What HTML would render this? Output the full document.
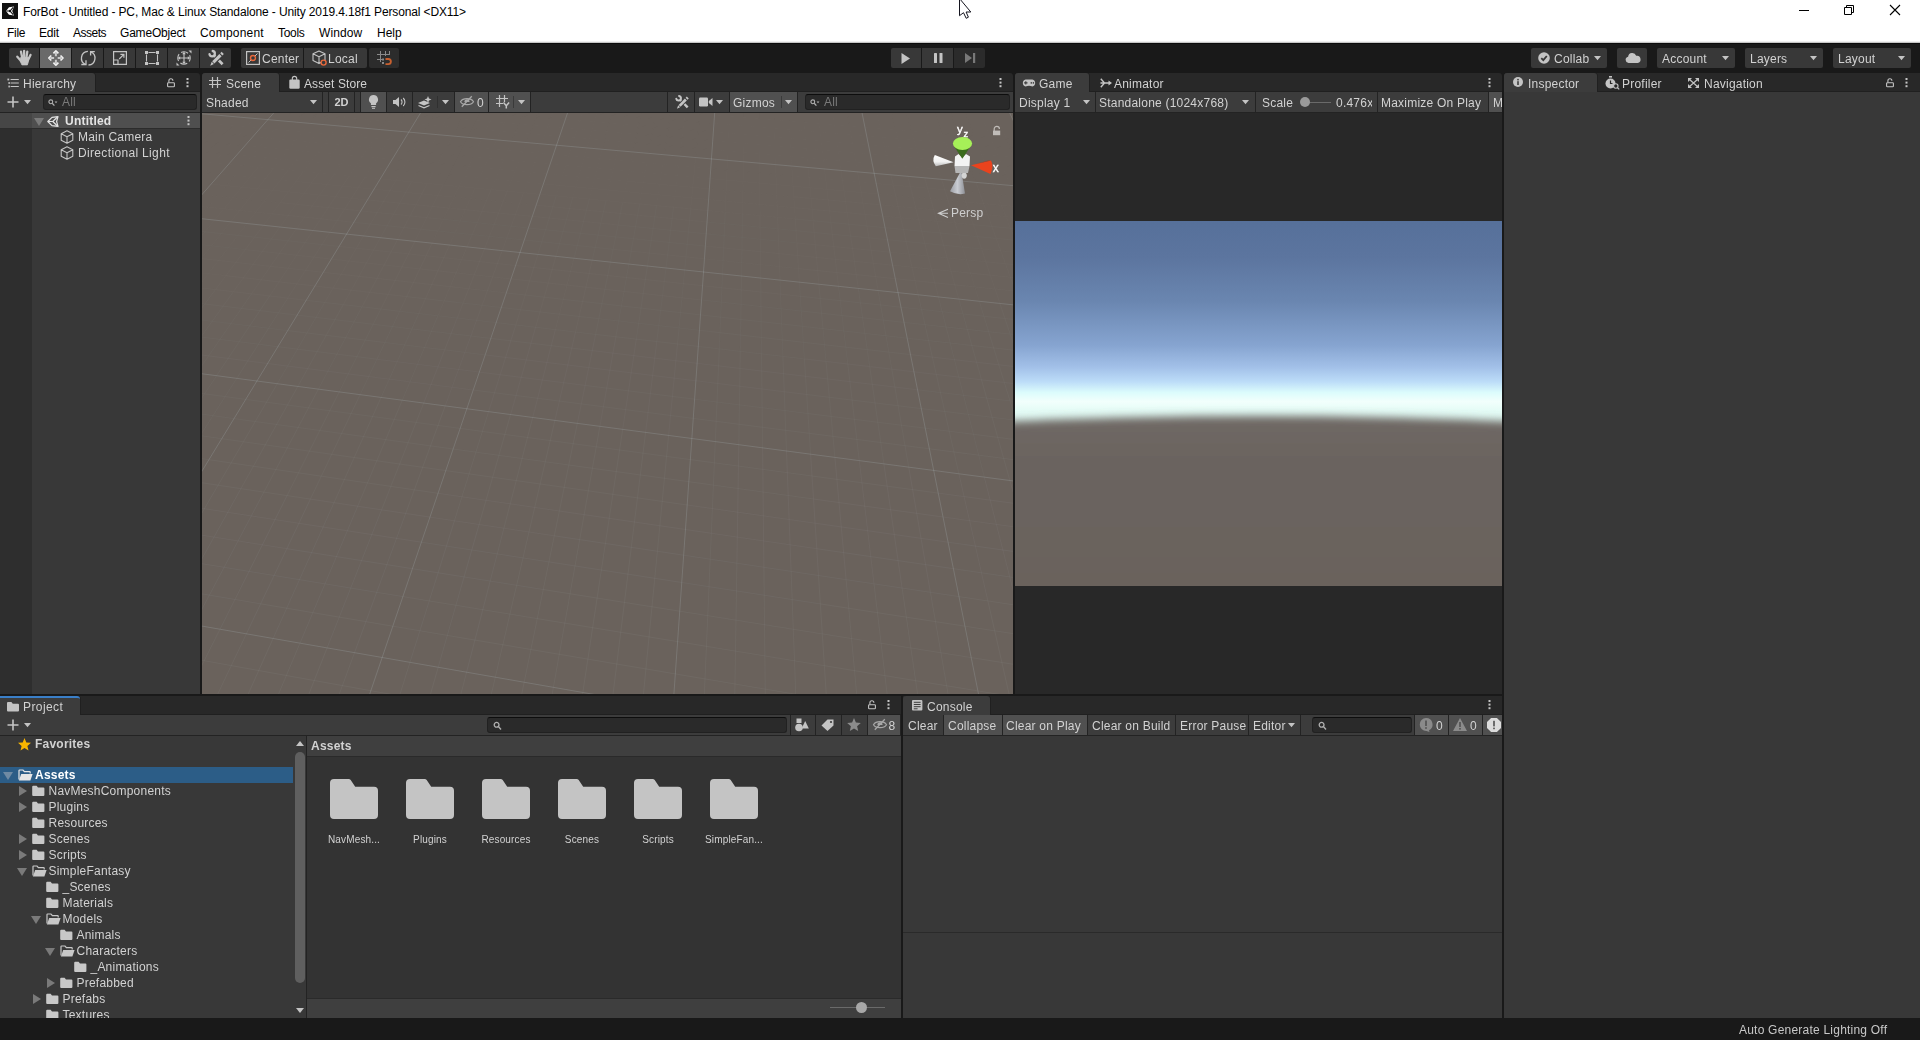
<!DOCTYPE html>
<html lang="en"><head><meta charset="utf-8"><title>ForBot - Untitled - Unity</title>
<style>
*{box-sizing:border-box;margin:0;padding:0}
html,body{width:1920px;height:1040px;overflow:hidden}
body{position:relative;background:#191919;font:12px/16px "Liberation Sans",sans-serif;color:#d2d2d2;letter-spacing:.22px}
.a{position:absolute}
.t{position:absolute;white-space:nowrap;line-height:16px;height:16px}
svg{position:absolute;display:block;overflow:visible}
#titlebar{left:0;top:0;width:1920px;height:42px;background:#fff;color:#000;letter-spacing:0}
#titlebar .t{font-size:12px}
.tb{position:absolute;top:48px;height:20px;background:#383838}
.tb.on{background:#6a6a6a}
.strip{position:absolute;height:19px;background:#282828;box-shadow:inset 0 -1px 0 #202020}
.tab{position:absolute;top:0;height:19px;background:#3c3c3c;border-radius:3px 3px 0 0;box-shadow:1px 0 0 #202020}
.bar{position:absolute;height:21px;background:#3c3c3c;border-bottom:1px solid #232323}
.pane{position:absolute;background:#383838}
.sep{position:absolute;top:0;width:1px;height:20px;background:#232323}
.hl{position:absolute;top:0;height:20px;background:#505050}
.search{position:absolute;height:16px;background:#2a2a2a;border:1px solid #212121;border-top-color:#0d0d0d;border-radius:3px}
.dim{color:#7a7a7a}
.row{position:absolute;left:0;height:16px}
b{font-weight:bold}

</style></head>
<body>
<!-- ===== TITLE + MENU ===== -->
<div id="titlebar" class="a">
  <svg style="left:2px;top:3px" width="16" height="16" viewBox="0 0 16 16" ><rect width="16" height="16" fill="#111"/><path d="M4 8L7 4.2L12 3.6L10.2 8L12 12.4L7 11.8Z" fill="#fff"/><path d="M8 8L11.2 4.4M8 8L11.2 11.6M8 8H4.4" stroke="#111" stroke-width="1.1"/><circle cx="8" cy="8" r="1.2" fill="#111"/></svg>
  <span class="t" id="wtitle" style="left:23px;top:4px;letter-spacing:-.127px">ForBot - Untitled - PC, Mac &amp; Linux Standalone - Unity 2019.4.18f1 Personal &lt;DX11&gt;</span>
  <svg style="left:1799px;top:10px" width="10" height="1" viewBox="0 0 10 1" ><rect width="10" height="1" fill="#000"/></svg><svg style="left:1844px;top:5px" width="10" height="10" viewBox="0 0 10 10" ><path d="M0.5 2.5h7v7h-7zM2.5 2.5v-2h7v7h-2" fill="none" stroke="#000" stroke-width="1"/></svg><svg style="left:1890px;top:5px" width="10" height="10" viewBox="0 0 10 10" ><path d="M0 0L10 10M10 0L0 10" stroke="#000" stroke-width="1.1"/></svg>
  <span class="t" style="left:7px;top:25px;letter-spacing:-.3px">File</span>
  <span class="t" style="left:39px;top:25px;letter-spacing:-.2px">Edit</span>
  <span class="t" style="left:73px;top:25px;letter-spacing:-.5px">Assets</span>
  <span class="t" style="left:120px;top:25px;letter-spacing:-.2px">GameObject</span>
  <span class="t" style="left:200px;top:25px;letter-spacing:.2px">Component</span>
  <span class="t" style="left:278px;top:25px;letter-spacing:-.3px">Tools</span>
  <span class="t" style="left:319px;top:25px;letter-spacing:.1px">Window</span>
  <span class="t" style="left:377px;top:25px">Help</span>
  <svg style="left:959px;top:-2px" width="13" height="21" viewBox="0 0 13 21" ><path d="M0.500 0.500V17.700L4.500 14.700L7.200 20.300L9.400 19.200L7.100 14H11.800Z" fill="#fff" stroke="#14141e" stroke-width="1" stroke-linejoin="round"/></svg>
</div>
<div class="a" style="left:0;top:41px;width:1920px;height:1px;background:#f0f0f0"></div>
<div class="a" style="left:0;top:42px;width:1920px;height:1px;background:#c6c6c6"></div>
<div class="a" style="left:0;top:43px;width:1920px;height:1px;background:#0c0c0c"></div>

<div id="unity" class="a" style="left:0;top:44px;width:1920px;height:996px;will-change:transform"><div class="a" style="left:0;top:-44px;width:1920px;height:1040px">
<!-- ===== MAIN TOOLBAR ===== -->
<div class="tb" style="left:9px;width:30px;border-radius:2px 0 0 2px"><svg style="left:-1px;top:0px" width="31" height="20" viewBox="0 0 31 20" ><g stroke="#c4c4c4" stroke-width="2.300" stroke-linecap="round" fill="none"><path d="M9.300 8.700L13.500 13.500"/><path d="M13 3.700L14.500 11"/><path d="M16.100 2.900L16.300 11"/><path d="M19.300 3.700L18.200 11"/><path d="M22.500 6.900L19.800 12.500"/></g><path d="M12.600 9.500H20.600L20.400 13.500L19.400 16.900H13.900L12.400 13.500Z" fill="#c4c4c4" stroke="#c4c4c4" stroke-width="0.800" stroke-linejoin="round"/></svg></div>
<div class="tb on" style="left:40px;width:31px"><svg style="left:0px;top:0px" width="31" height="20" viewBox="0 0 31 20" ><path d="M15.900 4.600V8.200M15.900 11.800V15.400M10.400 10H14.100M17.700 10H21.400" stroke="#c9c9c9" stroke-width="2"/><path d="M13.400 5.400L15.900 2.900L18.400 5.400M13.400 14.600L15.900 17.100L18.400 14.600M11.300 7.500L8.800 10L11.300 12.500M20.500 7.500L23 10L20.500 12.500" fill="none" stroke="#f0f0f0" stroke-width="1.700" stroke-linejoin="round"/></svg></div>
<div class="tb" style="left:72px;width:31px"><svg style="left:0px;top:0px" width="31" height="20" viewBox="0 0 31 20" ><path d="M15.900 3.400A6.800 6.800 0 0 0 13.700 16.500M16.500 17A6.800 6.800 0 0 0 18.700 3.900" fill="none" stroke="#c4c4c4" stroke-width="1.300"/><path d="M9.300 16.500H14V12.200M22.800 3.600H18.600V7.600" fill="none" stroke="#c4c4c4" stroke-width="1.300"/></svg></div>
<div class="tb" style="left:104px;width:31px"><svg style="left:9px;top:3px" width="14" height="14" viewBox="0 0 14 14" ><path d="M0.600 0.600H13.400V13.400H0.600Z" fill="none" stroke="#c4c4c4" stroke-width="1.200"/><path d="M0.600 9H5V13.400" fill="none" stroke="#c4c4c4" stroke-width="1.200"/><path d="M6.200 8L10.600 3.600M7.400 3.300H10.900V6.800" fill="none" stroke="#c4c4c4" stroke-width="1.200"/></svg></div>
<div class="tb" style="left:136px;width:31px"><svg style="left:9px;top:3px" width="14" height="14" viewBox="0 0 14 14" ><path d="M3.5 1.5H10.5M3.5 12.5H10.5M1.5 3.5V10.5M12.5 3.5V10.5" stroke="#c4c4c4" stroke-width="1.1" fill="none"/><path d="M0 0h3v3H0zM11 0h3v3h-3zM0 11h3v3H0zM11 11h3v3h-3z" fill="#c4c4c4"/></svg></div>
<div class="tb" style="left:168px;width:31px"><svg style="left:8px;top:2px" width="16" height="16" viewBox="0 0 16 16" ><circle cx="8" cy="8" r="6.2" fill="none" stroke="#c4c4c4" stroke-width="1.1" stroke-dasharray="7.2 2.5" stroke-dashoffset="3.6"/><path d="M8 3.2V12.8M3.2 8H12.8" stroke="#c4c4c4" stroke-width="1.1"/><path d="M8 1.8L9.8 4.2H6.2ZM8 14.2L9.8 11.8H6.2ZM1.8 8L4.2 6.2V9.8ZM14.2 8L11.8 6.2V9.8Z" fill="#c4c4c4"/><path d="M0.5 15.5V12.5L3.5 15.5ZM15.500 0.5V3.5L12.5 0.5Z" fill="#c4c4c4"/></svg></div>
<div class="tb" style="left:200px;width:31px;border-radius:0 2px 2px 0"><svg style="left:0px;top:0px" width="31" height="20" viewBox="0 0 31 20" ><path d="M14.300 7.800L22.600 16.200" stroke="#c4c4c4" stroke-width="2.700" stroke-linecap="butt"/><path d="M12.700 3A2.700 2.700 0 1 1 9.500 6.200" fill="none" stroke="#c4c4c4" stroke-width="2.300" stroke-linecap="round"/><path d="M21.300 6.300L12.900 14.800" stroke="#383838" stroke-width="5.200"/><path d="M20.500 7.100L13.300 14.400" stroke="#c4c4c4" stroke-width="3.100"/><path d="M21.300 6.300L22.700 4.900" stroke="#c4c4c4" stroke-width="3.100"/><path d="M11.700 13.800L13.900 16L10.200 17.700Z" fill="#c4c4c4"/></svg></div>
<div class="tb" style="left:241px;width:62px;border-radius:2px 0 0 2px"><svg style="left:5px;top:3px" width="14" height="14" viewBox="0 0 14 14" ><rect x="0.6" y="0.6" width="12.800" height="12.800" fill="none" stroke="#c4c4c4" stroke-width="1.2"/><path d="M2.500 11.500L11.500 2.500" stroke="#c4c4c4" stroke-width="1"/><circle cx="7" cy="7" r="2.500" fill="#383838" stroke="#e8693c" stroke-width="1.4"/></svg><span class="t" style="left:21px;top:3px">Center</span></div>
<div class="tb" style="left:304px;width:63px;border-radius:0 2px 2px 0"><svg style="left:8px;top:2px" width="16" height="17" viewBox="0 0 16 17" ><path d="M7 1L13 3.800V10.600L7 13.600L1 10.600V3.800ZM1 3.800L7 6.800L13 3.800M7 6.800V13.600" fill="none" stroke="#c4c4c4" stroke-width="1.1" stroke-linejoin="round"/><circle cx="11.600" cy="12.600" r="2.500" fill="#383838" stroke="#e8693c" stroke-width="1.400"/></svg><span class="t" style="left:24px;top:3px">Local</span></div>
<div class="tb" style="left:369px;width:30px;border-radius:2px;background:#2c2c2c"><svg style="left:8px;top:3px" width="16" height="15" viewBox="0 0 16 15" ><path d="M3.500 0V11M8.500 0V5M12.500 0V4M0 3.500H13M0 8.500H5" stroke="#8a8a8a" stroke-width="1"/><rect x="5" y="11" width="2" height="2" fill="#8a8a8a"/><rect x="5" y="7.500" width="2" height="2" fill="#8a8a8a"/><path d="M8.500 8H11.300a2.600 2.600 0 0 1 0 5.200H8.500" fill="none" stroke="#c8602f" stroke-width="1.800"/></svg></div>
<div class="tb" style="left:891px;width:30px;border-radius:2px 0 0 2px"><svg style="left:10px;top:5px" width="9" height="11" viewBox="0 0 9 11" ><path d="M0.500 0L9 5.500L0.500 11Z" fill="#c4c4c4"/></svg></div>
<div class="tb" style="left:922px;width:31px"><svg style="left:12px;top:5px" width="9" height="10" viewBox="0 0 9 10" ><rect x="0" y="0" width="3" height="10" rx="0.600" fill="#c4c4c4"/><rect x="5.500" y="0" width="3" height="10" rx="0.600" fill="#c4c4c4"/></svg></div>
<div class="tb" style="left:954px;width:31px;border-radius:0 2px 2px 0;background:#2b2b2b"><svg style="left:11px;top:5px" width="11" height="10" viewBox="0 0 11 10" ><path d="M0 0L7 5L0 10Z" fill="#787878"/><rect x="8" y="0" width="2.200" height="10" fill="#787878"/></svg></div>
<div class="tb" style="left:1531px;width:76px;border-radius:2px"><svg style="left:7px;top:4px" width="12" height="12" viewBox="0 0 12 12" ><circle cx="6" cy="6" r="5.800" fill="#c4c4c4"/><path d="M3.300 6.200L5.300 8.200L8.800 4" fill="none" stroke="#383838" stroke-width="1.800"/></svg><span class="t" style="left:23px;top:3px">Collab</span><svg style="left:63px;top:8px" width="7" height="4" viewBox="0 0 7 4" ><path d="M0 0H7L3.5 4.2Z" fill="#c4c4c4"/></svg></div>
<div class="tb" style="left:1617px;width:30px;border-radius:2px"><svg style="left:8px;top:5px" width="16" height="10" viewBox="0 0 16 10" ><path d="M3.500 10a3.200 3.200 0 0 1-.400-6.300A4.200 4.200 0 0 1 11.200 2.800A3.600 3.600 0 0 1 12.600 10Z" fill="#c4c4c4"/></svg></div>
<div class="tb" style="left:1657px;width:78px;border-radius:2px"><span class="t" style="left:5px;top:3px">Account</span><svg style="left:65px;top:8px" width="7" height="4" viewBox="0 0 7 4" ><path d="M0 0H7L3.5 4.2Z" fill="#c4c4c4"/></svg></div>
<div class="tb" style="left:1745px;width:78px;border-radius:2px"><span class="t" style="left:5px;top:3px">Layers</span><svg style="left:65px;top:8px" width="7" height="4" viewBox="0 0 7 4" ><path d="M0 0H7L3.5 4.2Z" fill="#c4c4c4"/></svg></div>
<div class="tb" style="left:1833px;width:78px;border-radius:2px"><span class="t" style="left:5px;top:3px">Layout</span><svg style="left:65px;top:8px" width="7" height="4" viewBox="0 0 7 4" ><path d="M0 0H7L3.5 4.2Z" fill="#c4c4c4"/></svg></div>

<!-- ===== HIERARCHY ===== -->
<div class="strip" style="left:0;top:73px;width:200px;border-radius:0 3px 0 0">
  <div class="tab" style="left:0;width:95px;border-radius:0 3px 0 0"><svg style="left:7px;top:5px" width="12" height="9" viewBox="0 0 12 9" ><path d="M3.600 1.500H11.800M3.600 5H11.800M3.600 8.500H11.800" stroke="#c4c4c4" stroke-width="1.100"/><rect x="0.400" y="0.600" width="1.800" height="1.800" fill="#c4c4c4"/><rect x="1.400" y="4.100" width="1.500" height="1.800" fill="#c4c4c4"/><rect x="1.400" y="7.600" width="1.500" height="1.800" fill="#c4c4c4"/></svg><span class="t" style="left:23px;top:3px">Hierarchy</span></div>
  <svg style="left:167px;top:4.5px" width="9" height="10" viewBox="0 0 9 10" ><path d="M1.9 4.6V2.7a2 2 0 0 1 4 0" fill="none" stroke="#c4c4c4" stroke-width="1.1"/><rect x="0.6" y="4.8" width="6.8" height="4" rx="0.8" fill="none" stroke="#c4c4c4" stroke-width="1.1"/></svg><svg style="left:186px;top:5px" width="3" height="10" viewBox="0 0 3 10" ><rect x="0.5" y="0" width="2" height="2" fill="#c4c4c4"/><rect x="0.5" y="3.6" width="2" height="2" fill="#c4c4c4"/><rect x="0.5" y="7.2" width="2" height="2" fill="#c4c4c4"/></svg>
</div>
<div class="bar" style="left:0;top:92px;width:200px">
  <svg style="left:7px;top:4px" width="12" height="12" viewBox="0 0 12 12" ><path d="M6 0.5V11.5M0.5 6H11.5" stroke="#c4c4c4" stroke-width="1.6" fill="none"/></svg><svg style="left:24px;top:8px" width="7" height="4" viewBox="0 0 7 4" ><path d="M0 0H7L3.5 4.2Z" fill="#c4c4c4"/></svg>
  <div class="search" style="left:43px;top:2px;width:154px"><svg style="left:4px;top:4px" width="10" height="8" viewBox="0 0 10 8" ><circle cx="2.8" cy="2.8" r="1.9" fill="none" stroke="#b0b0b0" stroke-width="1.1"/><path d="M4.200 4.300L6.400 6.600" stroke="#b0b0b0" stroke-width="1.300"/><path d="M6.600 2.600h2.800l-1.400 1.700z" fill="#b0b0b0"/></svg><span class="t dim" style="left:18px;top:-1px">All</span></div>
</div>
<div class="pane" style="left:0;top:113px;width:200px;height:581px">
  <div class="a" style="left:0;top:0;width:32px;height:581px;background:#2e2e2e"></div>
  <div class="row" style="top:0;width:200px;height:15px;background:#4f4f4f"><div class="a" style="left:0;top:0;width:32px;height:15px;background:#464646"></div>
    <svg style="left:34px;top:5px" width="10" height="8" viewBox="0 0 10 8" ><path d="M0 0H10L5 8Z" fill="#7a7a7a"/></svg><svg style="left:47px;top:2.5px" width="12" height="11" viewBox="0 0 12 11" ><path d="M0.800 5.500L5 1.300L11 0.700L9.600 5.500L11 10.300L5 9.700Z" fill="none" stroke="#e4e4e4" stroke-width="1.200" stroke-linejoin="round"/><path d="M5.800 5.500H1.200M5.800 5.500L10.400 1M5.800 5.500L10.400 10" stroke="#e4e4e4" stroke-width="1.200"/></svg><b class="t" style="left:65px;top:0;color:#e4e4e4">Untitled</b><svg style="left:187px;top:3px" width="3" height="10" viewBox="0 0 3 10" ><rect x="0.5" y="0" width="2" height="2" fill="#c4c4c4"/><rect x="0.5" y="3.6" width="2" height="2" fill="#c4c4c4"/><rect x="0.5" y="7.2" width="2" height="2" fill="#c4c4c4"/></svg></div>
  <div class="a" style="left:0;top:15px;width:200px;height:1px;background:#2c2c2c"></div>
  <div class="row" style="top:16px;width:200px"><svg style="left:60px;top:1px" width="14" height="14" viewBox="0 0 14 14" ><path d="M7 0.8L12.8 3.8V10.2L7 13.2L1.2 10.2V3.8Z M1.2 3.8L7 6.8L12.8 3.8M7 6.8V13.2" fill="none" stroke="#c4c4c4" stroke-width="1.1" stroke-linejoin="round"/></svg><span class="t" style="left:78px;top:0">Main Camera</span></div>
  <div class="row" style="top:32px;width:200px"><svg style="left:60px;top:1px" width="14" height="14" viewBox="0 0 14 14" ><path d="M7 0.8L12.8 3.8V10.2L7 13.2L1.2 10.2V3.8Z M1.2 3.8L7 6.8L12.8 3.8M7 6.8V13.2" fill="none" stroke="#c4c4c4" stroke-width="1.1" stroke-linejoin="round"/></svg><span class="t" style="left:78px;top:0;letter-spacing:.34px">Directional Light</span></div>
</div>

<!-- ===== SCENE ===== -->
<div class="strip" style="left:202px;top:73px;width:811px;border-radius:3px 3px 0 0">
  <div class="tab" style="left:0;width:77px"><svg style="left:7px;top:4px" width="12" height="11" viewBox="0 0 12 11" ><path d="M3.500 0V11M8.500 0V11M0 3.500H12M0 7.500H12" stroke="#c4c4c4" stroke-width="1.200"/></svg><span class="t" style="left:24px;top:3px">Scene</span></div>
  <svg style="left:87px;top:3px" width="11" height="13" viewBox="0 0 11 13" ><path d="M3.300 4V2.600a2.200 2.200 0 0 1 4.400 0V4" fill="none" stroke="#c4c4c4" stroke-width="1.100"/><rect x="0.300" y="3.600" width="10.400" height="9.200" rx="1.200" fill="#c4c4c4"/></svg><span class="t" style="left:102px;top:3px;letter-spacing:.1px">Asset Store</span>
  <svg style="left:797px;top:5px" width="3" height="10" viewBox="0 0 3 10" ><rect x="0.5" y="0" width="2" height="2" fill="#c4c4c4"/><rect x="0.5" y="3.6" width="2" height="2" fill="#c4c4c4"/><rect x="0.5" y="7.2" width="2" height="2" fill="#c4c4c4"/></svg>
</div>
<div class="bar" style="left:202px;top:92px;width:811px">
  <span class="t" style="left:4px;top:3px">Shaded</span><svg style="left:108px;top:8px" width="7" height="4" viewBox="0 0 7 4" ><path d="M0 0H7L3.5 4.2Z" fill="#c4c4c4"/></svg>
  <div class="sep" style="left:120px"></div><div class="sep" style="left:126px"></div>
  <span class="t" style="left:132.500px;top:2px;font-size:11px;font-weight:bold;letter-spacing:0">2D</span>
  <div class="sep" style="left:152px"></div><div class="sep" style="left:158px"></div>
  <div class="hl" style="left:159px;width:25px"><svg style="left:7px;top:3px" width="11" height="14" viewBox="0 0 11 14" ><path d="M5.500 0a4.500 4.500 0 0 1 2.600 8.200V10H2.900V8.200A4.500 4.500 0 0 1 5.500 0Z" fill="#c4c4c4"/><rect x="3.400" y="11" width="4.200" height="1.200" fill="#c4c4c4"/><rect x="4" y="12.800" width="3" height="1" fill="#c4c4c4"/></svg></div><div class="sep" style="left:184px"></div>
  <svg style="left:191px;top:5px" width="13" height="10" viewBox="0 0 13 10" ><path d="M0 3H2.500L6 0V10L2.500 7H0Z" fill="#c4c4c4"/><path d="M8 2.500a3.500 3.500 0 0 1 0 5M10.200 1a5.500 5.500 0 0 1 0 8" fill="none" stroke="#c4c4c4" stroke-width="1.100"/></svg><div class="sep" style="left:210px"></div>
  <svg style="left:216px;top:4px" width="14" height="12" viewBox="0 0 14 12" ><path d="M0 7L6 4.500L12 7L6 9.500Z" fill="#c4c4c4"/><path d="M0.500 9.500L6 11.800L11.500 9.500" fill="none" stroke="#c4c4c4" stroke-width="1.200"/><path d="M10 0L11 2.500L13.500 3.500L11 4.500L10 7L9 4.500L6.500 3.500L9 2.500Z" fill="#c4c4c4"/></svg><div class="a" style="left:235px;top:4px;width:1px;height:12px;background:#303030"></div><svg style="left:240px;top:8px" width="7" height="4" viewBox="0 0 7 4" ><path d="M0 0H7L3.5 4.2Z" fill="#c4c4c4"/></svg><div class="sep" style="left:252px"></div>
  <div class="hl" style="left:253px;width:33px"><svg style="left:5px;top:4px" width="14" height="11" viewBox="0 0 14 11" ><path d="M0.500 5.700C3 1.700 11 1.700 13.500 5.700C11 9.700 3 9.700 0.500 5.700Z" fill="none" stroke="#a8a8a8" stroke-width="1.200"/><path d="M4.400 5.900A2.600 2.600 0 0 1 9.600 5.900Z" fill="#a8a8a8"/><path d="M1.800 10.800L11.800 0.200" stroke="#a8a8a8" stroke-width="1.300"/></svg><span class="t" style="left:22px;top:3px">0</span></div><div class="sep" style="left:286px"></div>
  <div class="hl" style="left:287px;width:41px"><svg style="left:7px;top:3px" width="15" height="14" viewBox="0 0 15 14" ><path d="M3.500 0V12M8.500 0V7M0 3.500H12M0 8.500H7" stroke="#c4c4c4" stroke-width="1.200"/><path d="M7.500 7.500L10.300 10.800V13.500M13.100 7.500L10.300 10.800" fill="none" stroke="#c4c4c4" stroke-width="1.500"/></svg><div class="a" style="left:24px;top:4px;width:1px;height:12px;background:#3a3a3a"></div><svg style="left:29px;top:8px" width="7" height="4" viewBox="0 0 7 4" ><path d="M0 0H7L3.5 4.2Z" fill="#c4c4c4"/></svg></div><div class="sep" style="left:328px"></div>
  <div class="sep" style="left:465px"></div><svg style="left:466px;top:1.2px" width="27" height="18" viewBox="0 0 31 20" ><path d="M14.300 7.800L22.600 16.200" stroke="#c4c4c4" stroke-width="2.700" stroke-linecap="butt"/><path d="M12.700 3A2.700 2.700 0 1 1 9.500 6.200" fill="none" stroke="#c4c4c4" stroke-width="2.300" stroke-linecap="round"/><path d="M21.300 6.300L12.900 14.800" stroke="#3c3c3c" stroke-width="5.200"/><path d="M20.500 7.100L13.300 14.400" stroke="#c4c4c4" stroke-width="3.100"/><path d="M21.300 6.300L22.700 4.900" stroke="#c4c4c4" stroke-width="3.100"/><path d="M11.700 13.800L13.900 16L10.200 17.700Z" fill="#c4c4c4"/></svg><div class="sep" style="left:492px"></div>
  <svg style="left:497px;top:5px" width="14" height="10" viewBox="0 0 14 10" ><rect x="0" y="0.500" width="9" height="9" rx="1.200" fill="#c4c4c4"/><path d="M9.800 4L13.500 1V9L9.800 6Z" fill="#c4c4c4"/></svg><svg style="left:514px;top:8px" width="7" height="4" viewBox="0 0 7 4" ><path d="M0 0H7L3.5 4.2Z" fill="#c4c4c4"/></svg><div class="sep" style="left:527px"></div>
  <div class="hl" style="left:528px;width:67px"><span class="t" style="left:3px;top:3px">Gizmos</span><div class="a" style="left:51px;top:4px;width:1px;height:12px;background:#3a3a3a"></div><svg style="left:55px;top:8px" width="7" height="4" viewBox="0 0 7 4" ><path d="M0 0H7L3.5 4.2Z" fill="#c4c4c4"/></svg></div><div class="sep" style="left:595px"></div>
  <div class="search" style="left:603px;top:2px;width:205px"><svg style="left:4px;top:4px" width="10" height="8" viewBox="0 0 10 8" ><circle cx="2.8" cy="2.8" r="1.9" fill="none" stroke="#b0b0b0" stroke-width="1.1"/><path d="M4.200 4.300L6.400 6.600" stroke="#b0b0b0" stroke-width="1.300"/><path d="M6.600 2.600h2.800l-1.400 1.700z" fill="#b0b0b0"/></svg><span class="t dim" style="left:18px;top:-1px">All</span></div>
</div>
<div class="a" id="scene" style="left:202px;top:113px;width:811px;height:581px;background:#6a625c;overflow:hidden">
  <svg style="left:-202px;top:-113px" width="1920" height="1040" viewBox="0 0 1920 1040" stroke="#b4c0c8" fill="none">
<line x1="121.7" y1="13.5" x2="-1122.7" y2="891.4" stroke-opacity="0.210" stroke-width="1"/>
<line x1="232.1" y1="21.6" x2="-854.0" y2="967.0" stroke-opacity="0.210" stroke-width="1"/>
<line x1="346.8" y1="29.9" x2="-552.2" y2="1051.8" stroke-opacity="0.210" stroke-width="1"/>
<line x1="465.9" y1="38.6" x2="-211.0" y2="1147.8" stroke-opacity="0.210" stroke-width="1"/>
<line x1="589.8" y1="47.6" x2="178.0" y2="1257.1" stroke-opacity="0.210" stroke-width="1"/>
<line x1="718.6" y1="56.9" x2="625.6" y2="1383.0" stroke-opacity="0.210" stroke-width="1"/>
<line x1="852.8" y1="66.7" x2="1145.9" y2="1529.3" stroke-opacity="0.210" stroke-width="1"/>
<line x1="992.7" y1="76.9" x2="1758.5" y2="1701.5" stroke-opacity="0.210" stroke-width="1"/>
<line x1="1138.6" y1="87.5" x2="2490.1" y2="1907.2" stroke-opacity="0.210" stroke-width="1"/>
<line x1="4.3" y1="96.3" x2="1415.5" y2="221.3" stroke-opacity="0.210" stroke-width="1"/>
<line x1="-120.7" y1="184.5" x2="1559.0" y2="362.8" stroke-opacity="0.210" stroke-width="1"/>
<line x1="-295.8" y1="308.0" x2="1781.8" y2="582.5" stroke-opacity="0.210" stroke-width="1"/>
<line x1="-558.6" y1="493.5" x2="2175.0" y2="970.0" stroke-opacity="0.210" stroke-width="1"/>
<line x1="-997.3" y1="802.9" x2="3054.4" y2="1836.9" stroke-opacity="0.210" stroke-width="1"/>
<line x1="109.2" y1="31.1" x2="66.2" y2="62.1" stroke-opacity="0.012" stroke-width="1"/>
<line x1="66.2" y1="62.1" x2="16.9" y2="97.5" stroke-opacity="0.012" stroke-width="1"/>
<line x1="16.9" y1="97.5" x2="-39.9" y2="138.3" stroke-opacity="0.012" stroke-width="1"/>
<line x1="-39.9" y1="138.3" x2="-106.3" y2="186.0" stroke-opacity="0.012" stroke-width="1"/>
<line x1="-106.3" y1="186.0" x2="-184.7" y2="242.5" stroke-opacity="0.019" stroke-width="1"/>
<line x1="-184.7" y1="242.5" x2="-279.0" y2="310.2" stroke-opacity="0.030" stroke-width="1"/>
<line x1="-279.0" y1="310.2" x2="-394.3" y2="393.2" stroke-opacity="0.040" stroke-width="1"/>
<line x1="-394.3" y1="393.2" x2="-538.6" y2="496.9" stroke-opacity="0.051" stroke-width="1"/>
<line x1="-538.6" y1="496.9" x2="-724.5" y2="630.6" stroke-opacity="0.061" stroke-width="1"/>
<line x1="-724.5" y1="630.6" x2="-972.8" y2="809.2" stroke-opacity="0.067" stroke-width="1"/>
<line x1="-972.8" y1="809.2" x2="-1321.5" y2="1059.9" stroke-opacity="0.067" stroke-width="1"/>
<line x1="120.5" y1="31.9" x2="78.1" y2="63.0" stroke-opacity="0.012" stroke-width="1"/>
<line x1="78.1" y1="63.0" x2="29.6" y2="98.6" stroke-opacity="0.012" stroke-width="1"/>
<line x1="29.6" y1="98.6" x2="-26.4" y2="139.6" stroke-opacity="0.012" stroke-width="1"/>
<line x1="-26.4" y1="139.6" x2="-91.8" y2="187.6" stroke-opacity="0.012" stroke-width="1"/>
<line x1="-91.8" y1="187.6" x2="-169.1" y2="244.3" stroke-opacity="0.020" stroke-width="1"/>
<line x1="-169.1" y1="244.3" x2="-262.1" y2="312.5" stroke-opacity="0.030" stroke-width="1"/>
<line x1="-262.1" y1="312.5" x2="-375.9" y2="395.9" stroke-opacity="0.041" stroke-width="1"/>
<line x1="-375.9" y1="395.9" x2="-518.5" y2="500.5" stroke-opacity="0.051" stroke-width="1"/>
<line x1="-518.5" y1="500.5" x2="-702.2" y2="635.2" stroke-opacity="0.062" stroke-width="1"/>
<line x1="-702.2" y1="635.2" x2="-948.1" y2="815.5" stroke-opacity="0.067" stroke-width="1"/>
<line x1="-948.1" y1="815.5" x2="-1293.9" y2="1069.1" stroke-opacity="0.067" stroke-width="1"/>
<line x1="131.8" y1="32.8" x2="90.1" y2="64.0" stroke-opacity="0.012" stroke-width="1"/>
<line x1="90.1" y1="64.0" x2="42.3" y2="99.7" stroke-opacity="0.012" stroke-width="1"/>
<line x1="42.3" y1="99.7" x2="-12.8" y2="141.0" stroke-opacity="0.012" stroke-width="1"/>
<line x1="-12.8" y1="141.0" x2="-77.2" y2="189.1" stroke-opacity="0.012" stroke-width="1"/>
<line x1="-77.2" y1="189.1" x2="-153.4" y2="246.2" stroke-opacity="0.020" stroke-width="1"/>
<line x1="-153.4" y1="246.2" x2="-245.1" y2="314.7" stroke-opacity="0.031" stroke-width="1"/>
<line x1="-245.1" y1="314.7" x2="-357.4" y2="398.7" stroke-opacity="0.041" stroke-width="1"/>
<line x1="-357.4" y1="398.7" x2="-498.2" y2="504.0" stroke-opacity="0.052" stroke-width="1"/>
<line x1="-498.2" y1="504.0" x2="-679.8" y2="639.9" stroke-opacity="0.062" stroke-width="1"/>
<line x1="-679.8" y1="639.9" x2="-923.1" y2="821.9" stroke-opacity="0.067" stroke-width="1"/>
<line x1="-923.1" y1="821.9" x2="-1266.0" y2="1078.3" stroke-opacity="0.067" stroke-width="1"/>
<line x1="143.1" y1="33.7" x2="102.1" y2="65.0" stroke-opacity="0.012" stroke-width="1"/>
<line x1="102.1" y1="65.0" x2="55.1" y2="100.8" stroke-opacity="0.012" stroke-width="1"/>
<line x1="55.1" y1="100.8" x2="0.9" y2="142.3" stroke-opacity="0.012" stroke-width="1"/>
<line x1="0.9" y1="142.3" x2="-62.6" y2="190.7" stroke-opacity="0.012" stroke-width="1"/>
<line x1="-62.6" y1="190.7" x2="-137.7" y2="248.0" stroke-opacity="0.020" stroke-width="1"/>
<line x1="-137.7" y1="248.0" x2="-228.0" y2="317.0" stroke-opacity="0.031" stroke-width="1"/>
<line x1="-228.0" y1="317.0" x2="-338.8" y2="401.5" stroke-opacity="0.041" stroke-width="1"/>
<line x1="-338.8" y1="401.5" x2="-477.7" y2="507.6" stroke-opacity="0.052" stroke-width="1"/>
<line x1="-477.7" y1="507.6" x2="-657.1" y2="644.5" stroke-opacity="0.062" stroke-width="1"/>
<line x1="-657.1" y1="644.5" x2="-897.9" y2="828.3" stroke-opacity="0.067" stroke-width="1"/>
<line x1="-897.9" y1="828.3" x2="-1237.7" y2="1087.7" stroke-opacity="0.067" stroke-width="1"/>
<line x1="154.5" y1="34.5" x2="114.2" y2="66.0" stroke-opacity="0.012" stroke-width="1"/>
<line x1="114.2" y1="66.0" x2="68.0" y2="102.0" stroke-opacity="0.012" stroke-width="1"/>
<line x1="68.0" y1="102.0" x2="14.6" y2="143.6" stroke-opacity="0.012" stroke-width="1"/>
<line x1="14.6" y1="143.6" x2="-47.8" y2="192.2" stroke-opacity="0.012" stroke-width="1"/>
<line x1="-47.8" y1="192.2" x2="-121.8" y2="249.9" stroke-opacity="0.021" stroke-width="1"/>
<line x1="-121.8" y1="249.9" x2="-210.8" y2="319.3" stroke-opacity="0.031" stroke-width="1"/>
<line x1="-210.8" y1="319.3" x2="-320.0" y2="404.3" stroke-opacity="0.042" stroke-width="1"/>
<line x1="-320.0" y1="404.3" x2="-457.1" y2="511.2" stroke-opacity="0.052" stroke-width="1"/>
<line x1="-457.1" y1="511.2" x2="-634.3" y2="649.3" stroke-opacity="0.063" stroke-width="1"/>
<line x1="-634.3" y1="649.3" x2="-872.3" y2="834.8" stroke-opacity="0.067" stroke-width="1"/>
<line x1="-872.3" y1="834.8" x2="-1209.0" y2="1097.2" stroke-opacity="0.067" stroke-width="1"/>
<line x1="166.0" y1="35.4" x2="126.3" y2="67.0" stroke-opacity="0.012" stroke-width="1"/>
<line x1="126.3" y1="67.0" x2="80.9" y2="103.1" stroke-opacity="0.012" stroke-width="1"/>
<line x1="80.9" y1="103.1" x2="28.4" y2="144.9" stroke-opacity="0.012" stroke-width="1"/>
<line x1="28.4" y1="144.9" x2="-33.0" y2="193.8" stroke-opacity="0.012" stroke-width="1"/>
<line x1="-33.0" y1="193.8" x2="-105.8" y2="251.8" stroke-opacity="0.021" stroke-width="1"/>
<line x1="-105.8" y1="251.8" x2="-193.5" y2="321.5" stroke-opacity="0.032" stroke-width="1"/>
<line x1="-193.5" y1="321.5" x2="-301.1" y2="407.2" stroke-opacity="0.042" stroke-width="1"/>
<line x1="-301.1" y1="407.2" x2="-436.3" y2="514.8" stroke-opacity="0.053" stroke-width="1"/>
<line x1="-436.3" y1="514.8" x2="-611.2" y2="654.1" stroke-opacity="0.063" stroke-width="1"/>
<line x1="-611.2" y1="654.1" x2="-846.6" y2="841.4" stroke-opacity="0.067" stroke-width="1"/>
<line x1="-846.6" y1="841.4" x2="-1180.0" y2="1106.8" stroke-opacity="0.067" stroke-width="1"/>
<line x1="177.5" y1="36.3" x2="138.5" y2="68.0" stroke-opacity="0.012" stroke-width="1"/>
<line x1="138.5" y1="68.0" x2="93.9" y2="104.3" stroke-opacity="0.012" stroke-width="1"/>
<line x1="93.9" y1="104.3" x2="42.2" y2="146.3" stroke-opacity="0.012" stroke-width="1"/>
<line x1="42.2" y1="146.3" x2="-18.2" y2="195.4" stroke-opacity="0.012" stroke-width="1"/>
<line x1="-18.2" y1="195.4" x2="-89.8" y2="253.7" stroke-opacity="0.021" stroke-width="1"/>
<line x1="-89.8" y1="253.7" x2="-176.1" y2="323.8" stroke-opacity="0.032" stroke-width="1"/>
<line x1="-176.1" y1="323.8" x2="-282.1" y2="410.0" stroke-opacity="0.042" stroke-width="1"/>
<line x1="-282.1" y1="410.0" x2="-415.3" y2="518.4" stroke-opacity="0.053" stroke-width="1"/>
<line x1="-415.3" y1="518.4" x2="-588.0" y2="658.9" stroke-opacity="0.063" stroke-width="1"/>
<line x1="-588.0" y1="658.9" x2="-820.5" y2="848.0" stroke-opacity="0.067" stroke-width="1"/>
<line x1="-820.5" y1="848.0" x2="-1150.7" y2="1116.6" stroke-opacity="0.067" stroke-width="1"/>
<line x1="189.0" y1="37.1" x2="150.7" y2="69.0" stroke-opacity="0.012" stroke-width="1"/>
<line x1="150.7" y1="69.0" x2="106.9" y2="105.4" stroke-opacity="0.012" stroke-width="1"/>
<line x1="106.9" y1="105.4" x2="56.2" y2="147.6" stroke-opacity="0.012" stroke-width="1"/>
<line x1="56.2" y1="147.6" x2="-3.2" y2="197.0" stroke-opacity="0.012" stroke-width="1"/>
<line x1="-3.2" y1="197.0" x2="-73.6" y2="255.6" stroke-opacity="0.022" stroke-width="1"/>
<line x1="-73.6" y1="255.6" x2="-158.5" y2="326.2" stroke-opacity="0.032" stroke-width="1"/>
<line x1="-158.5" y1="326.2" x2="-262.9" y2="412.9" stroke-opacity="0.043" stroke-width="1"/>
<line x1="-262.9" y1="412.9" x2="-394.2" y2="522.1" stroke-opacity="0.053" stroke-width="1"/>
<line x1="-394.2" y1="522.1" x2="-564.5" y2="663.7" stroke-opacity="0.064" stroke-width="1"/>
<line x1="-564.5" y1="663.7" x2="-794.2" y2="854.7" stroke-opacity="0.067" stroke-width="1"/>
<line x1="-794.2" y1="854.7" x2="-1120.9" y2="1126.4" stroke-opacity="0.067" stroke-width="1"/>
<line x1="200.6" y1="38.0" x2="163.0" y2="70.0" stroke-opacity="0.012" stroke-width="1"/>
<line x1="163.0" y1="70.0" x2="120.0" y2="106.6" stroke-opacity="0.012" stroke-width="1"/>
<line x1="120.0" y1="106.6" x2="70.2" y2="149.0" stroke-opacity="0.012" stroke-width="1"/>
<line x1="70.2" y1="149.0" x2="11.8" y2="198.6" stroke-opacity="0.012" stroke-width="1"/>
<line x1="11.8" y1="198.6" x2="-57.4" y2="257.5" stroke-opacity="0.022" stroke-width="1"/>
<line x1="-57.4" y1="257.5" x2="-140.9" y2="328.5" stroke-opacity="0.032" stroke-width="1"/>
<line x1="-140.9" y1="328.5" x2="-243.6" y2="415.8" stroke-opacity="0.043" stroke-width="1"/>
<line x1="-243.6" y1="415.8" x2="-372.9" y2="525.8" stroke-opacity="0.054" stroke-width="1"/>
<line x1="-372.9" y1="525.8" x2="-540.8" y2="668.7" stroke-opacity="0.064" stroke-width="1"/>
<line x1="-540.8" y1="668.7" x2="-767.6" y2="861.5" stroke-opacity="0.067" stroke-width="1"/>
<line x1="-767.6" y1="861.5" x2="-1090.8" y2="1136.4" stroke-opacity="0.067" stroke-width="1"/>
<line x1="223.9" y1="39.8" x2="187.7" y2="72.0" stroke-opacity="0.012" stroke-width="1"/>
<line x1="187.7" y1="72.0" x2="146.3" y2="108.9" stroke-opacity="0.012" stroke-width="1"/>
<line x1="146.3" y1="108.9" x2="98.3" y2="151.7" stroke-opacity="0.012" stroke-width="1"/>
<line x1="98.3" y1="151.7" x2="42.1" y2="201.8" stroke-opacity="0.012" stroke-width="1"/>
<line x1="42.1" y1="201.8" x2="-24.7" y2="261.3" stroke-opacity="0.023" stroke-width="1"/>
<line x1="-24.7" y1="261.3" x2="-105.3" y2="333.2" stroke-opacity="0.033" stroke-width="1"/>
<line x1="-105.3" y1="333.2" x2="-204.6" y2="421.7" stroke-opacity="0.044" stroke-width="1"/>
<line x1="-204.6" y1="421.7" x2="-329.8" y2="533.3" stroke-opacity="0.054" stroke-width="1"/>
<line x1="-329.8" y1="533.3" x2="-492.8" y2="678.6" stroke-opacity="0.065" stroke-width="1"/>
<line x1="-492.8" y1="678.6" x2="-713.5" y2="875.3" stroke-opacity="0.067" stroke-width="1"/>
<line x1="-713.5" y1="875.3" x2="-1029.3" y2="1156.8" stroke-opacity="0.067" stroke-width="1"/>
<line x1="235.6" y1="40.7" x2="200.2" y2="73.0" stroke-opacity="0.012" stroke-width="1"/>
<line x1="200.2" y1="73.0" x2="159.6" y2="110.1" stroke-opacity="0.012" stroke-width="1"/>
<line x1="159.6" y1="110.1" x2="112.5" y2="153.1" stroke-opacity="0.012" stroke-width="1"/>
<line x1="112.5" y1="153.1" x2="57.4" y2="203.4" stroke-opacity="0.012" stroke-width="1"/>
<line x1="57.4" y1="203.4" x2="-8.2" y2="263.3" stroke-opacity="0.023" stroke-width="1"/>
<line x1="-8.2" y1="263.3" x2="-87.3" y2="335.6" stroke-opacity="0.033" stroke-width="1"/>
<line x1="-87.3" y1="335.6" x2="-184.9" y2="424.7" stroke-opacity="0.044" stroke-width="1"/>
<line x1="-184.9" y1="424.7" x2="-308.0" y2="537.1" stroke-opacity="0.054" stroke-width="1"/>
<line x1="-308.0" y1="537.1" x2="-468.5" y2="683.6" stroke-opacity="0.065" stroke-width="1"/>
<line x1="-468.5" y1="683.6" x2="-686.0" y2="882.4" stroke-opacity="0.067" stroke-width="1"/>
<line x1="-686.0" y1="882.4" x2="-997.9" y2="1167.2" stroke-opacity="0.067" stroke-width="1"/>
<line x1="247.3" y1="41.6" x2="212.7" y2="74.0" stroke-opacity="0.012" stroke-width="1"/>
<line x1="212.7" y1="74.0" x2="172.9" y2="111.3" stroke-opacity="0.012" stroke-width="1"/>
<line x1="172.9" y1="111.3" x2="126.8" y2="154.4" stroke-opacity="0.012" stroke-width="1"/>
<line x1="126.8" y1="154.4" x2="72.7" y2="205.0" stroke-opacity="0.013" stroke-width="1"/>
<line x1="72.7" y1="205.0" x2="8.5" y2="265.2" stroke-opacity="0.023" stroke-width="1"/>
<line x1="8.5" y1="265.2" x2="-69.2" y2="338.0" stroke-opacity="0.034" stroke-width="1"/>
<line x1="-69.2" y1="338.0" x2="-165.0" y2="427.6" stroke-opacity="0.044" stroke-width="1"/>
<line x1="-165.0" y1="427.6" x2="-286.1" y2="541.0" stroke-opacity="0.055" stroke-width="1"/>
<line x1="-286.1" y1="541.0" x2="-443.9" y2="688.7" stroke-opacity="0.065" stroke-width="1"/>
<line x1="-443.9" y1="688.7" x2="-658.3" y2="889.4" stroke-opacity="0.067" stroke-width="1"/>
<line x1="-658.3" y1="889.4" x2="-966.2" y2="1177.7" stroke-opacity="0.067" stroke-width="1"/>
<line x1="259.1" y1="42.5" x2="225.2" y2="75.1" stroke-opacity="0.012" stroke-width="1"/>
<line x1="225.2" y1="75.1" x2="186.3" y2="112.5" stroke-opacity="0.012" stroke-width="1"/>
<line x1="186.3" y1="112.5" x2="141.1" y2="155.8" stroke-opacity="0.012" stroke-width="1"/>
<line x1="141.1" y1="155.8" x2="88.2" y2="206.7" stroke-opacity="0.013" stroke-width="1"/>
<line x1="88.2" y1="206.7" x2="25.2" y2="267.2" stroke-opacity="0.024" stroke-width="1"/>
<line x1="25.2" y1="267.2" x2="-51.0" y2="340.4" stroke-opacity="0.034" stroke-width="1"/>
<line x1="-51.0" y1="340.4" x2="-145.0" y2="430.6" stroke-opacity="0.045" stroke-width="1"/>
<line x1="-145.0" y1="430.6" x2="-263.9" y2="544.8" stroke-opacity="0.055" stroke-width="1"/>
<line x1="-263.9" y1="544.8" x2="-419.1" y2="693.9" stroke-opacity="0.066" stroke-width="1"/>
<line x1="-419.1" y1="693.9" x2="-630.2" y2="896.6" stroke-opacity="0.067" stroke-width="1"/>
<line x1="-630.2" y1="896.6" x2="-934.0" y2="1188.4" stroke-opacity="0.067" stroke-width="1"/>
<line x1="271.0" y1="43.4" x2="237.8" y2="76.1" stroke-opacity="0.012" stroke-width="1"/>
<line x1="237.8" y1="76.1" x2="199.7" y2="113.6" stroke-opacity="0.012" stroke-width="1"/>
<line x1="199.7" y1="113.6" x2="155.5" y2="157.2" stroke-opacity="0.012" stroke-width="1"/>
<line x1="155.5" y1="157.2" x2="103.7" y2="208.3" stroke-opacity="0.013" stroke-width="1"/>
<line x1="103.7" y1="208.3" x2="42.0" y2="269.2" stroke-opacity="0.024" stroke-width="1"/>
<line x1="42.0" y1="269.2" x2="-32.7" y2="342.8" stroke-opacity="0.034" stroke-width="1"/>
<line x1="-32.7" y1="342.8" x2="-124.9" y2="433.7" stroke-opacity="0.045" stroke-width="1"/>
<line x1="-124.9" y1="433.7" x2="-241.6" y2="548.7" stroke-opacity="0.055" stroke-width="1"/>
<line x1="-241.6" y1="548.7" x2="-394.1" y2="699.1" stroke-opacity="0.066" stroke-width="1"/>
<line x1="-394.1" y1="699.1" x2="-601.8" y2="903.9" stroke-opacity="0.067" stroke-width="1"/>
<line x1="-601.8" y1="903.9" x2="-901.4" y2="1199.2" stroke-opacity="0.067" stroke-width="1"/>
<line x1="282.9" y1="44.3" x2="250.4" y2="77.1" stroke-opacity="0.012" stroke-width="1"/>
<line x1="250.4" y1="77.1" x2="213.2" y2="114.8" stroke-opacity="0.012" stroke-width="1"/>
<line x1="213.2" y1="114.8" x2="170.0" y2="158.6" stroke-opacity="0.012" stroke-width="1"/>
<line x1="170.0" y1="158.6" x2="119.3" y2="210.0" stroke-opacity="0.014" stroke-width="1"/>
<line x1="119.3" y1="210.0" x2="58.9" y2="271.2" stroke-opacity="0.024" stroke-width="1"/>
<line x1="58.9" y1="271.2" x2="-14.3" y2="345.2" stroke-opacity="0.035" stroke-width="1"/>
<line x1="-14.3" y1="345.2" x2="-104.6" y2="436.7" stroke-opacity="0.045" stroke-width="1"/>
<line x1="-104.6" y1="436.7" x2="-219.1" y2="552.7" stroke-opacity="0.056" stroke-width="1"/>
<line x1="-219.1" y1="552.7" x2="-368.8" y2="704.3" stroke-opacity="0.066" stroke-width="1"/>
<line x1="-368.8" y1="704.3" x2="-573.1" y2="911.2" stroke-opacity="0.067" stroke-width="1"/>
<line x1="-573.1" y1="911.2" x2="-868.3" y2="1210.2" stroke-opacity="0.067" stroke-width="1"/>
<line x1="294.8" y1="45.2" x2="263.1" y2="78.2" stroke-opacity="0.012" stroke-width="1"/>
<line x1="263.1" y1="78.2" x2="226.8" y2="116.0" stroke-opacity="0.012" stroke-width="1"/>
<line x1="226.8" y1="116.0" x2="184.5" y2="160.0" stroke-opacity="0.012" stroke-width="1"/>
<line x1="184.5" y1="160.0" x2="134.9" y2="211.6" stroke-opacity="0.014" stroke-width="1"/>
<line x1="134.9" y1="211.6" x2="75.9" y2="273.2" stroke-opacity="0.025" stroke-width="1"/>
<line x1="75.9" y1="273.2" x2="4.3" y2="347.7" stroke-opacity="0.035" stroke-width="1"/>
<line x1="4.3" y1="347.7" x2="-84.2" y2="439.8" stroke-opacity="0.046" stroke-width="1"/>
<line x1="-84.2" y1="439.8" x2="-196.4" y2="556.6" stroke-opacity="0.056" stroke-width="1"/>
<line x1="-196.4" y1="556.6" x2="-343.3" y2="709.6" stroke-opacity="0.067" stroke-width="1"/>
<line x1="-343.3" y1="709.6" x2="-544.1" y2="918.6" stroke-opacity="0.067" stroke-width="1"/>
<line x1="-544.1" y1="918.6" x2="-834.8" y2="1221.3" stroke-opacity="0.067" stroke-width="1"/>
<line x1="306.8" y1="46.1" x2="275.9" y2="79.2" stroke-opacity="0.012" stroke-width="1"/>
<line x1="275.9" y1="79.2" x2="240.4" y2="117.3" stroke-opacity="0.012" stroke-width="1"/>
<line x1="240.4" y1="117.3" x2="199.1" y2="161.4" stroke-opacity="0.012" stroke-width="1"/>
<line x1="199.1" y1="161.4" x2="150.7" y2="213.3" stroke-opacity="0.014" stroke-width="1"/>
<line x1="150.7" y1="213.3" x2="93.0" y2="275.2" stroke-opacity="0.025" stroke-width="1"/>
<line x1="93.0" y1="275.2" x2="23.0" y2="350.1" stroke-opacity="0.035" stroke-width="1"/>
<line x1="23.0" y1="350.1" x2="-63.6" y2="442.9" stroke-opacity="0.046" stroke-width="1"/>
<line x1="-63.6" y1="442.9" x2="-173.5" y2="560.6" stroke-opacity="0.056" stroke-width="1"/>
<line x1="-173.5" y1="560.6" x2="-317.6" y2="714.9" stroke-opacity="0.067" stroke-width="1"/>
<line x1="-317.6" y1="714.9" x2="-514.7" y2="926.1" stroke-opacity="0.067" stroke-width="1"/>
<line x1="-514.7" y1="926.1" x2="-800.8" y2="1232.6" stroke-opacity="0.067" stroke-width="1"/>
<line x1="318.8" y1="47.0" x2="288.7" y2="80.3" stroke-opacity="0.012" stroke-width="1"/>
<line x1="288.7" y1="80.3" x2="254.1" y2="118.5" stroke-opacity="0.012" stroke-width="1"/>
<line x1="254.1" y1="118.5" x2="213.8" y2="162.8" stroke-opacity="0.012" stroke-width="1"/>
<line x1="213.8" y1="162.8" x2="166.5" y2="215.0" stroke-opacity="0.015" stroke-width="1"/>
<line x1="166.5" y1="215.0" x2="110.2" y2="277.2" stroke-opacity="0.025" stroke-width="1"/>
<line x1="110.2" y1="277.2" x2="41.8" y2="352.6" stroke-opacity="0.036" stroke-width="1"/>
<line x1="41.8" y1="352.6" x2="-42.9" y2="446.0" stroke-opacity="0.046" stroke-width="1"/>
<line x1="-42.9" y1="446.0" x2="-150.4" y2="564.6" stroke-opacity="0.057" stroke-width="1"/>
<line x1="-150.4" y1="564.6" x2="-291.6" y2="720.3" stroke-opacity="0.067" stroke-width="1"/>
<line x1="-291.6" y1="720.3" x2="-485.0" y2="933.7" stroke-opacity="0.067" stroke-width="1"/>
<line x1="-485.0" y1="933.7" x2="-766.4" y2="1244.0" stroke-opacity="0.067" stroke-width="1"/>
<line x1="343.1" y1="48.8" x2="314.5" y2="82.4" stroke-opacity="0.012" stroke-width="1"/>
<line x1="314.5" y1="82.4" x2="281.6" y2="120.9" stroke-opacity="0.012" stroke-width="1"/>
<line x1="281.6" y1="120.9" x2="243.4" y2="165.7" stroke-opacity="0.012" stroke-width="1"/>
<line x1="243.4" y1="165.7" x2="198.5" y2="218.4" stroke-opacity="0.015" stroke-width="1"/>
<line x1="198.5" y1="218.4" x2="144.9" y2="281.3" stroke-opacity="0.026" stroke-width="1"/>
<line x1="144.9" y1="281.3" x2="79.7" y2="357.6" stroke-opacity="0.036" stroke-width="1"/>
<line x1="79.7" y1="357.6" x2="-1.0" y2="452.3" stroke-opacity="0.047" stroke-width="1"/>
<line x1="-1.0" y1="452.3" x2="-103.7" y2="572.8" stroke-opacity="0.057" stroke-width="1"/>
<line x1="-103.7" y1="572.8" x2="-238.9" y2="731.2" stroke-opacity="0.067" stroke-width="1"/>
<line x1="-238.9" y1="731.2" x2="-424.6" y2="949.1" stroke-opacity="0.067" stroke-width="1"/>
<line x1="-424.6" y1="949.1" x2="-696.0" y2="1267.3" stroke-opacity="0.067" stroke-width="1"/>
<line x1="355.2" y1="49.8" x2="327.5" y2="83.4" stroke-opacity="0.012" stroke-width="1"/>
<line x1="327.5" y1="83.4" x2="295.5" y2="122.1" stroke-opacity="0.012" stroke-width="1"/>
<line x1="295.5" y1="122.1" x2="258.3" y2="167.1" stroke-opacity="0.012" stroke-width="1"/>
<line x1="258.3" y1="167.1" x2="214.6" y2="220.1" stroke-opacity="0.016" stroke-width="1"/>
<line x1="214.6" y1="220.1" x2="162.4" y2="283.3" stroke-opacity="0.026" stroke-width="1"/>
<line x1="162.4" y1="283.3" x2="98.9" y2="360.2" stroke-opacity="0.037" stroke-width="1"/>
<line x1="98.9" y1="360.2" x2="20.2" y2="455.5" stroke-opacity="0.047" stroke-width="1"/>
<line x1="20.2" y1="455.5" x2="-80.1" y2="576.9" stroke-opacity="0.058" stroke-width="1"/>
<line x1="-80.1" y1="576.9" x2="-212.1" y2="736.8" stroke-opacity="0.067" stroke-width="1"/>
<line x1="-212.1" y1="736.8" x2="-393.9" y2="956.9" stroke-opacity="0.067" stroke-width="1"/>
<line x1="-393.9" y1="956.9" x2="-660.1" y2="1279.2" stroke-opacity="0.067" stroke-width="1"/>
<line x1="367.5" y1="50.7" x2="340.5" y2="84.5" stroke-opacity="0.012" stroke-width="1"/>
<line x1="340.5" y1="84.5" x2="309.4" y2="123.4" stroke-opacity="0.012" stroke-width="1"/>
<line x1="309.4" y1="123.4" x2="273.3" y2="168.6" stroke-opacity="0.012" stroke-width="1"/>
<line x1="273.3" y1="168.6" x2="230.8" y2="221.8" stroke-opacity="0.016" stroke-width="1"/>
<line x1="230.8" y1="221.8" x2="180.0" y2="285.4" stroke-opacity="0.026" stroke-width="1"/>
<line x1="180.0" y1="285.4" x2="118.2" y2="362.7" stroke-opacity="0.037" stroke-width="1"/>
<line x1="118.2" y1="362.7" x2="41.5" y2="458.7" stroke-opacity="0.047" stroke-width="1"/>
<line x1="41.5" y1="458.7" x2="-56.2" y2="581.0" stroke-opacity="0.058" stroke-width="1"/>
<line x1="-56.2" y1="581.0" x2="-185.1" y2="742.4" stroke-opacity="0.067" stroke-width="1"/>
<line x1="-185.1" y1="742.4" x2="-362.8" y2="964.8" stroke-opacity="0.067" stroke-width="1"/>
<line x1="-362.8" y1="964.8" x2="-623.6" y2="1291.3" stroke-opacity="0.067" stroke-width="1"/>
<line x1="379.8" y1="51.6" x2="353.6" y2="85.6" stroke-opacity="0.012" stroke-width="1"/>
<line x1="353.6" y1="85.6" x2="323.4" y2="124.6" stroke-opacity="0.012" stroke-width="1"/>
<line x1="323.4" y1="124.6" x2="288.3" y2="170.0" stroke-opacity="0.012" stroke-width="1"/>
<line x1="288.3" y1="170.0" x2="247.0" y2="223.5" stroke-opacity="0.016" stroke-width="1"/>
<line x1="247.0" y1="223.5" x2="197.7" y2="287.5" stroke-opacity="0.027" stroke-width="1"/>
<line x1="197.7" y1="287.5" x2="137.6" y2="365.3" stroke-opacity="0.037" stroke-width="1"/>
<line x1="137.6" y1="365.3" x2="63.0" y2="461.9" stroke-opacity="0.048" stroke-width="1"/>
<line x1="63.0" y1="461.9" x2="-32.2" y2="585.2" stroke-opacity="0.058" stroke-width="1"/>
<line x1="-32.2" y1="585.2" x2="-157.8" y2="748.0" stroke-opacity="0.067" stroke-width="1"/>
<line x1="-157.8" y1="748.0" x2="-331.4" y2="972.9" stroke-opacity="0.067" stroke-width="1"/>
<line x1="-331.4" y1="972.9" x2="-586.7" y2="1303.6" stroke-opacity="0.067" stroke-width="1"/>
<line x1="392.1" y1="52.6" x2="366.7" y2="86.6" stroke-opacity="0.012" stroke-width="1"/>
<line x1="366.7" y1="86.6" x2="337.5" y2="125.9" stroke-opacity="0.012" stroke-width="1"/>
<line x1="337.5" y1="125.9" x2="303.5" y2="171.5" stroke-opacity="0.012" stroke-width="1"/>
<line x1="303.5" y1="171.5" x2="263.4" y2="225.3" stroke-opacity="0.017" stroke-width="1"/>
<line x1="263.4" y1="225.3" x2="215.5" y2="289.6" stroke-opacity="0.027" stroke-width="1"/>
<line x1="215.5" y1="289.6" x2="157.2" y2="367.9" stroke-opacity="0.038" stroke-width="1"/>
<line x1="157.2" y1="367.9" x2="84.7" y2="465.2" stroke-opacity="0.048" stroke-width="1"/>
<line x1="84.7" y1="465.2" x2="-7.9" y2="589.5" stroke-opacity="0.059" stroke-width="1"/>
<line x1="-7.9" y1="589.5" x2="-130.3" y2="753.7" stroke-opacity="0.067" stroke-width="1"/>
<line x1="-130.3" y1="753.7" x2="-299.6" y2="981.0" stroke-opacity="0.067" stroke-width="1"/>
<line x1="-299.6" y1="981.0" x2="-549.2" y2="1316.0" stroke-opacity="0.067" stroke-width="1"/>
<line x1="404.5" y1="53.5" x2="379.9" y2="87.7" stroke-opacity="0.012" stroke-width="1"/>
<line x1="379.9" y1="87.7" x2="351.6" y2="127.1" stroke-opacity="0.012" stroke-width="1"/>
<line x1="351.6" y1="127.1" x2="318.7" y2="173.0" stroke-opacity="0.012" stroke-width="1"/>
<line x1="318.7" y1="173.0" x2="279.9" y2="227.0" stroke-opacity="0.017" stroke-width="1"/>
<line x1="279.9" y1="227.0" x2="233.4" y2="291.7" stroke-opacity="0.027" stroke-width="1"/>
<line x1="233.4" y1="291.7" x2="176.9" y2="370.5" stroke-opacity="0.038" stroke-width="1"/>
<line x1="176.9" y1="370.5" x2="106.5" y2="468.5" stroke-opacity="0.048" stroke-width="1"/>
<line x1="106.5" y1="468.5" x2="16.5" y2="593.7" stroke-opacity="0.059" stroke-width="1"/>
<line x1="16.5" y1="593.7" x2="-102.5" y2="759.5" stroke-opacity="0.067" stroke-width="1"/>
<line x1="-102.5" y1="759.5" x2="-267.4" y2="989.2" stroke-opacity="0.067" stroke-width="1"/>
<line x1="-267.4" y1="989.2" x2="-511.1" y2="1328.6" stroke-opacity="0.067" stroke-width="1"/>
<line x1="416.9" y1="54.4" x2="393.2" y2="88.8" stroke-opacity="0.012" stroke-width="1"/>
<line x1="393.2" y1="88.8" x2="365.8" y2="128.4" stroke-opacity="0.012" stroke-width="1"/>
<line x1="365.8" y1="128.4" x2="334.0" y2="174.4" stroke-opacity="0.012" stroke-width="1"/>
<line x1="334.0" y1="174.4" x2="296.4" y2="228.8" stroke-opacity="0.017" stroke-width="1"/>
<line x1="296.4" y1="228.8" x2="251.5" y2="293.8" stroke-opacity="0.028" stroke-width="1"/>
<line x1="251.5" y1="293.8" x2="196.7" y2="373.1" stroke-opacity="0.038" stroke-width="1"/>
<line x1="196.7" y1="373.1" x2="128.5" y2="471.8" stroke-opacity="0.049" stroke-width="1"/>
<line x1="128.5" y1="471.8" x2="41.2" y2="598.0" stroke-opacity="0.059" stroke-width="1"/>
<line x1="41.2" y1="598.0" x2="-74.4" y2="765.3" stroke-opacity="0.067" stroke-width="1"/>
<line x1="-74.4" y1="765.3" x2="-234.9" y2="997.5" stroke-opacity="0.067" stroke-width="1"/>
<line x1="-234.9" y1="997.5" x2="-472.5" y2="1341.4" stroke-opacity="0.067" stroke-width="1"/>
<line x1="429.4" y1="55.4" x2="406.5" y2="89.9" stroke-opacity="0.012" stroke-width="1"/>
<line x1="406.5" y1="89.9" x2="380.1" y2="129.6" stroke-opacity="0.012" stroke-width="1"/>
<line x1="380.1" y1="129.6" x2="349.3" y2="175.9" stroke-opacity="0.012" stroke-width="1"/>
<line x1="349.3" y1="175.9" x2="313.0" y2="230.6" stroke-opacity="0.018" stroke-width="1"/>
<line x1="313.0" y1="230.6" x2="269.6" y2="296.0" stroke-opacity="0.028" stroke-width="1"/>
<line x1="269.6" y1="296.0" x2="216.6" y2="375.7" stroke-opacity="0.039" stroke-width="1"/>
<line x1="216.6" y1="375.7" x2="150.6" y2="475.1" stroke-opacity="0.049" stroke-width="1"/>
<line x1="150.6" y1="475.1" x2="66.1" y2="602.4" stroke-opacity="0.060" stroke-width="1"/>
<line x1="66.1" y1="602.4" x2="-46.0" y2="771.2" stroke-opacity="0.067" stroke-width="1"/>
<line x1="-46.0" y1="771.2" x2="-201.9" y2="1005.9" stroke-opacity="0.067" stroke-width="1"/>
<line x1="-201.9" y1="1005.9" x2="-433.4" y2="1354.4" stroke-opacity="0.067" stroke-width="1"/>
<line x1="441.9" y1="56.3" x2="419.8" y2="91.0" stroke-opacity="0.012" stroke-width="1"/>
<line x1="419.8" y1="91.0" x2="394.4" y2="130.9" stroke-opacity="0.012" stroke-width="1"/>
<line x1="394.4" y1="130.9" x2="364.8" y2="177.4" stroke-opacity="0.012" stroke-width="1"/>
<line x1="364.8" y1="177.4" x2="329.8" y2="232.3" stroke-opacity="0.018" stroke-width="1"/>
<line x1="329.8" y1="232.3" x2="287.8" y2="298.1" stroke-opacity="0.028" stroke-width="1"/>
<line x1="287.8" y1="298.1" x2="236.7" y2="378.4" stroke-opacity="0.039" stroke-width="1"/>
<line x1="236.7" y1="378.4" x2="172.9" y2="478.5" stroke-opacity="0.049" stroke-width="1"/>
<line x1="172.9" y1="478.5" x2="91.2" y2="606.7" stroke-opacity="0.060" stroke-width="1"/>
<line x1="91.2" y1="606.7" x2="-17.4" y2="777.1" stroke-opacity="0.067" stroke-width="1"/>
<line x1="-17.4" y1="777.1" x2="-168.6" y2="1014.4" stroke-opacity="0.067" stroke-width="1"/>
<line x1="-168.6" y1="1014.4" x2="-393.6" y2="1367.6" stroke-opacity="0.067" stroke-width="1"/>
<line x1="467.1" y1="58.3" x2="446.7" y2="93.2" stroke-opacity="0.012" stroke-width="1"/>
<line x1="446.7" y1="93.2" x2="423.3" y2="133.4" stroke-opacity="0.012" stroke-width="1"/>
<line x1="423.3" y1="133.4" x2="395.9" y2="180.4" stroke-opacity="0.012" stroke-width="1"/>
<line x1="395.9" y1="180.4" x2="363.5" y2="235.9" stroke-opacity="0.018" stroke-width="1"/>
<line x1="363.5" y1="235.9" x2="324.7" y2="302.5" stroke-opacity="0.029" stroke-width="1"/>
<line x1="324.7" y1="302.5" x2="277.3" y2="383.7" stroke-opacity="0.040" stroke-width="1"/>
<line x1="277.3" y1="383.7" x2="218.1" y2="485.2" stroke-opacity="0.050" stroke-width="1"/>
<line x1="218.1" y1="485.2" x2="142.0" y2="615.6" stroke-opacity="0.061" stroke-width="1"/>
<line x1="142.0" y1="615.6" x2="40.8" y2="789.2" stroke-opacity="0.067" stroke-width="1"/>
<line x1="40.8" y1="789.2" x2="-100.7" y2="1031.7" stroke-opacity="0.067" stroke-width="1"/>
<line x1="-100.7" y1="1031.7" x2="-312.3" y2="1394.5" stroke-opacity="0.067" stroke-width="1"/>
<line x1="479.8" y1="59.2" x2="460.3" y2="94.3" stroke-opacity="0.012" stroke-width="1"/>
<line x1="460.3" y1="94.3" x2="437.8" y2="134.7" stroke-opacity="0.012" stroke-width="1"/>
<line x1="437.8" y1="134.7" x2="411.5" y2="181.9" stroke-opacity="0.012" stroke-width="1"/>
<line x1="411.5" y1="181.9" x2="380.5" y2="237.7" stroke-opacity="0.019" stroke-width="1"/>
<line x1="380.5" y1="237.7" x2="343.3" y2="304.6" stroke-opacity="0.029" stroke-width="1"/>
<line x1="343.3" y1="304.6" x2="297.8" y2="386.4" stroke-opacity="0.040" stroke-width="1"/>
<line x1="297.8" y1="386.4" x2="240.9" y2="488.7" stroke-opacity="0.050" stroke-width="1"/>
<line x1="240.9" y1="488.7" x2="167.8" y2="620.1" stroke-opacity="0.061" stroke-width="1"/>
<line x1="167.8" y1="620.1" x2="70.3" y2="795.3" stroke-opacity="0.067" stroke-width="1"/>
<line x1="70.3" y1="795.3" x2="-66.1" y2="1040.6" stroke-opacity="0.067" stroke-width="1"/>
<line x1="-66.1" y1="1040.6" x2="-270.7" y2="1408.3" stroke-opacity="0.067" stroke-width="1"/>
<line x1="492.5" y1="60.2" x2="473.9" y2="95.4" stroke-opacity="0.012" stroke-width="1"/>
<line x1="473.9" y1="95.4" x2="452.4" y2="136.0" stroke-opacity="0.012" stroke-width="1"/>
<line x1="452.4" y1="136.0" x2="427.3" y2="183.5" stroke-opacity="0.012" stroke-width="1"/>
<line x1="427.3" y1="183.5" x2="397.6" y2="239.5" stroke-opacity="0.019" stroke-width="1"/>
<line x1="397.6" y1="239.5" x2="362.0" y2="306.8" stroke-opacity="0.030" stroke-width="1"/>
<line x1="362.0" y1="306.8" x2="318.4" y2="389.2" stroke-opacity="0.040" stroke-width="1"/>
<line x1="318.4" y1="389.2" x2="263.9" y2="492.1" stroke-opacity="0.051" stroke-width="1"/>
<line x1="263.9" y1="492.1" x2="193.8" y2="624.6" stroke-opacity="0.061" stroke-width="1"/>
<line x1="193.8" y1="624.6" x2="100.1" y2="801.5" stroke-opacity="0.067" stroke-width="1"/>
<line x1="100.1" y1="801.5" x2="-31.1" y2="1049.5" stroke-opacity="0.067" stroke-width="1"/>
<line x1="-31.1" y1="1049.5" x2="-228.5" y2="1422.3" stroke-opacity="0.067" stroke-width="1"/>
<line x1="505.3" y1="61.2" x2="487.5" y2="96.5" stroke-opacity="0.012" stroke-width="1"/>
<line x1="487.5" y1="96.5" x2="467.0" y2="137.3" stroke-opacity="0.012" stroke-width="1"/>
<line x1="467.0" y1="137.3" x2="443.1" y2="185.0" stroke-opacity="0.012" stroke-width="1"/>
<line x1="443.1" y1="185.0" x2="414.8" y2="241.4" stroke-opacity="0.019" stroke-width="1"/>
<line x1="414.8" y1="241.4" x2="380.8" y2="309.1" stroke-opacity="0.030" stroke-width="1"/>
<line x1="380.8" y1="309.1" x2="339.2" y2="391.9" stroke-opacity="0.040" stroke-width="1"/>
<line x1="339.2" y1="391.9" x2="287.1" y2="495.6" stroke-opacity="0.051" stroke-width="1"/>
<line x1="287.1" y1="495.6" x2="220.0" y2="629.2" stroke-opacity="0.062" stroke-width="1"/>
<line x1="220.0" y1="629.2" x2="130.3" y2="807.7" stroke-opacity="0.067" stroke-width="1"/>
<line x1="130.3" y1="807.7" x2="4.3" y2="1058.5" stroke-opacity="0.067" stroke-width="1"/>
<line x1="4.3" y1="1058.5" x2="-185.6" y2="1436.5" stroke-opacity="0.067" stroke-width="1"/>
<line x1="518.1" y1="62.1" x2="501.3" y2="97.6" stroke-opacity="0.012" stroke-width="1"/>
<line x1="501.3" y1="97.6" x2="481.8" y2="138.6" stroke-opacity="0.012" stroke-width="1"/>
<line x1="481.8" y1="138.6" x2="459.0" y2="186.5" stroke-opacity="0.012" stroke-width="1"/>
<line x1="459.0" y1="186.5" x2="432.1" y2="243.2" stroke-opacity="0.020" stroke-width="1"/>
<line x1="432.1" y1="243.2" x2="399.7" y2="311.3" stroke-opacity="0.030" stroke-width="1"/>
<line x1="399.7" y1="311.3" x2="360.1" y2="394.7" stroke-opacity="0.041" stroke-width="1"/>
<line x1="360.1" y1="394.7" x2="310.4" y2="499.1" stroke-opacity="0.051" stroke-width="1"/>
<line x1="310.4" y1="499.1" x2="246.4" y2="633.8" stroke-opacity="0.062" stroke-width="1"/>
<line x1="246.4" y1="633.8" x2="160.7" y2="814.0" stroke-opacity="0.067" stroke-width="1"/>
<line x1="160.7" y1="814.0" x2="40.1" y2="1067.7" stroke-opacity="0.067" stroke-width="1"/>
<line x1="40.1" y1="1067.7" x2="-142.1" y2="1451.0" stroke-opacity="0.067" stroke-width="1"/>
<line x1="531.0" y1="63.1" x2="515.1" y2="98.8" stroke-opacity="0.012" stroke-width="1"/>
<line x1="515.1" y1="98.8" x2="496.6" y2="139.9" stroke-opacity="0.012" stroke-width="1"/>
<line x1="496.6" y1="139.9" x2="475.0" y2="188.1" stroke-opacity="0.012" stroke-width="1"/>
<line x1="475.0" y1="188.1" x2="449.5" y2="245.0" stroke-opacity="0.020" stroke-width="1"/>
<line x1="449.5" y1="245.0" x2="418.8" y2="313.5" stroke-opacity="0.031" stroke-width="1"/>
<line x1="418.8" y1="313.5" x2="381.1" y2="397.4" stroke-opacity="0.041" stroke-width="1"/>
<line x1="381.1" y1="397.4" x2="334.0" y2="502.7" stroke-opacity="0.052" stroke-width="1"/>
<line x1="334.0" y1="502.7" x2="273.1" y2="638.5" stroke-opacity="0.062" stroke-width="1"/>
<line x1="273.1" y1="638.5" x2="191.5" y2="820.4" stroke-opacity="0.067" stroke-width="1"/>
<line x1="191.5" y1="820.4" x2="76.5" y2="1076.9" stroke-opacity="0.067" stroke-width="1"/>
<line x1="76.5" y1="1076.9" x2="-97.8" y2="1465.7" stroke-opacity="0.067" stroke-width="1"/>
<line x1="544.0" y1="64.1" x2="528.9" y2="99.9" stroke-opacity="0.012" stroke-width="1"/>
<line x1="528.9" y1="99.9" x2="511.5" y2="141.3" stroke-opacity="0.012" stroke-width="1"/>
<line x1="511.5" y1="141.3" x2="491.1" y2="189.6" stroke-opacity="0.012" stroke-width="1"/>
<line x1="491.1" y1="189.6" x2="467.0" y2="246.9" stroke-opacity="0.020" stroke-width="1"/>
<line x1="467.0" y1="246.9" x2="437.9" y2="315.8" stroke-opacity="0.031" stroke-width="1"/>
<line x1="437.9" y1="315.8" x2="402.3" y2="400.2" stroke-opacity="0.041" stroke-width="1"/>
<line x1="402.3" y1="400.2" x2="357.7" y2="506.2" stroke-opacity="0.052" stroke-width="1"/>
<line x1="357.7" y1="506.2" x2="300.0" y2="643.1" stroke-opacity="0.063" stroke-width="1"/>
<line x1="300.0" y1="643.1" x2="222.6" y2="826.9" stroke-opacity="0.067" stroke-width="1"/>
<line x1="222.6" y1="826.9" x2="113.2" y2="1086.3" stroke-opacity="0.067" stroke-width="1"/>
<line x1="113.2" y1="1086.3" x2="-52.9" y2="1480.5" stroke-opacity="0.067" stroke-width="1"/>
<line x1="557.0" y1="65.1" x2="542.8" y2="101.0" stroke-opacity="0.012" stroke-width="1"/>
<line x1="542.8" y1="101.0" x2="526.4" y2="142.6" stroke-opacity="0.012" stroke-width="1"/>
<line x1="526.4" y1="142.6" x2="507.2" y2="191.2" stroke-opacity="0.012" stroke-width="1"/>
<line x1="507.2" y1="191.2" x2="484.5" y2="248.8" stroke-opacity="0.021" stroke-width="1"/>
<line x1="484.5" y1="248.8" x2="457.2" y2="318.1" stroke-opacity="0.031" stroke-width="1"/>
<line x1="457.2" y1="318.1" x2="423.7" y2="403.1" stroke-opacity="0.042" stroke-width="1"/>
<line x1="423.7" y1="403.1" x2="381.6" y2="509.8" stroke-opacity="0.052" stroke-width="1"/>
<line x1="381.6" y1="509.8" x2="327.1" y2="647.9" stroke-opacity="0.063" stroke-width="1"/>
<line x1="327.1" y1="647.9" x2="254.0" y2="833.4" stroke-opacity="0.067" stroke-width="1"/>
<line x1="254.0" y1="833.4" x2="150.4" y2="1095.8" stroke-opacity="0.067" stroke-width="1"/>
<line x1="150.4" y1="1095.8" x2="-7.3" y2="1495.7" stroke-opacity="0.067" stroke-width="1"/>
<line x1="570.0" y1="66.1" x2="556.8" y2="102.2" stroke-opacity="0.012" stroke-width="1"/>
<line x1="556.8" y1="102.2" x2="541.4" y2="143.9" stroke-opacity="0.012" stroke-width="1"/>
<line x1="541.4" y1="143.9" x2="523.5" y2="192.7" stroke-opacity="0.012" stroke-width="1"/>
<line x1="523.5" y1="192.7" x2="502.2" y2="250.6" stroke-opacity="0.021" stroke-width="1"/>
<line x1="502.2" y1="250.6" x2="476.6" y2="320.3" stroke-opacity="0.032" stroke-width="1"/>
<line x1="476.6" y1="320.3" x2="445.2" y2="405.9" stroke-opacity="0.042" stroke-width="1"/>
<line x1="445.2" y1="405.9" x2="405.7" y2="513.4" stroke-opacity="0.053" stroke-width="1"/>
<line x1="405.7" y1="513.4" x2="354.5" y2="652.7" stroke-opacity="0.063" stroke-width="1"/>
<line x1="354.5" y1="652.7" x2="285.7" y2="840.0" stroke-opacity="0.067" stroke-width="1"/>
<line x1="285.7" y1="840.0" x2="188.2" y2="1105.5" stroke-opacity="0.067" stroke-width="1"/>
<line x1="188.2" y1="1105.5" x2="39.1" y2="1511.1" stroke-opacity="0.067" stroke-width="1"/>
<line x1="596.3" y1="68.1" x2="584.9" y2="104.5" stroke-opacity="0.012" stroke-width="1"/>
<line x1="584.9" y1="104.5" x2="571.7" y2="146.6" stroke-opacity="0.012" stroke-width="1"/>
<line x1="571.7" y1="146.6" x2="556.2" y2="195.9" stroke-opacity="0.012" stroke-width="1"/>
<line x1="556.2" y1="195.9" x2="537.9" y2="254.4" stroke-opacity="0.022" stroke-width="1"/>
<line x1="537.9" y1="254.4" x2="515.8" y2="325.0" stroke-opacity="0.032" stroke-width="1"/>
<line x1="515.8" y1="325.0" x2="488.6" y2="411.6" stroke-opacity="0.043" stroke-width="1"/>
<line x1="488.6" y1="411.6" x2="454.4" y2="520.8" stroke-opacity="0.053" stroke-width="1"/>
<line x1="454.4" y1="520.8" x2="410.0" y2="662.3" stroke-opacity="0.064" stroke-width="1"/>
<line x1="410.0" y1="662.3" x2="350.2" y2="853.3" stroke-opacity="0.067" stroke-width="1"/>
<line x1="350.2" y1="853.3" x2="265.0" y2="1125.1" stroke-opacity="0.067" stroke-width="1"/>
<line x1="265.0" y1="1125.1" x2="134.2" y2="1542.6" stroke-opacity="0.067" stroke-width="1"/>
<line x1="609.5" y1="69.1" x2="599.0" y2="105.6" stroke-opacity="0.012" stroke-width="1"/>
<line x1="599.0" y1="105.6" x2="586.9" y2="147.9" stroke-opacity="0.012" stroke-width="1"/>
<line x1="586.9" y1="147.9" x2="572.7" y2="197.5" stroke-opacity="0.012" stroke-width="1"/>
<line x1="572.7" y1="197.5" x2="555.9" y2="256.3" stroke-opacity="0.022" stroke-width="1"/>
<line x1="555.9" y1="256.3" x2="535.6" y2="327.3" stroke-opacity="0.033" stroke-width="1"/>
<line x1="535.6" y1="327.3" x2="510.6" y2="414.5" stroke-opacity="0.043" stroke-width="1"/>
<line x1="510.6" y1="414.5" x2="479.1" y2="524.5" stroke-opacity="0.054" stroke-width="1"/>
<line x1="479.1" y1="524.5" x2="438.2" y2="667.2" stroke-opacity="0.064" stroke-width="1"/>
<line x1="438.2" y1="667.2" x2="383.0" y2="860.1" stroke-opacity="0.067" stroke-width="1"/>
<line x1="383.0" y1="860.1" x2="304.2" y2="1135.1" stroke-opacity="0.067" stroke-width="1"/>
<line x1="304.2" y1="1135.1" x2="182.9" y2="1558.7" stroke-opacity="0.067" stroke-width="1"/>
<line x1="622.8" y1="70.1" x2="613.2" y2="106.8" stroke-opacity="0.012" stroke-width="1"/>
<line x1="613.2" y1="106.8" x2="602.2" y2="149.3" stroke-opacity="0.012" stroke-width="1"/>
<line x1="602.2" y1="149.3" x2="589.3" y2="199.1" stroke-opacity="0.012" stroke-width="1"/>
<line x1="589.3" y1="199.1" x2="574.0" y2="258.2" stroke-opacity="0.022" stroke-width="1"/>
<line x1="574.0" y1="258.2" x2="555.4" y2="329.6" stroke-opacity="0.033" stroke-width="1"/>
<line x1="555.4" y1="329.6" x2="532.7" y2="417.5" stroke-opacity="0.043" stroke-width="1"/>
<line x1="532.7" y1="417.5" x2="503.9" y2="528.2" stroke-opacity="0.054" stroke-width="1"/>
<line x1="503.9" y1="528.2" x2="466.6" y2="672.2" stroke-opacity="0.064" stroke-width="1"/>
<line x1="466.6" y1="672.2" x2="416.1" y2="867.0" stroke-opacity="0.067" stroke-width="1"/>
<line x1="416.1" y1="867.0" x2="343.9" y2="1145.2" stroke-opacity="0.067" stroke-width="1"/>
<line x1="343.9" y1="1145.2" x2="232.4" y2="1575.1" stroke-opacity="0.067" stroke-width="1"/>
<line x1="636.1" y1="71.1" x2="627.5" y2="108.0" stroke-opacity="0.012" stroke-width="1"/>
<line x1="627.5" y1="108.0" x2="617.6" y2="150.7" stroke-opacity="0.012" stroke-width="1"/>
<line x1="617.6" y1="150.7" x2="606.0" y2="200.7" stroke-opacity="0.012" stroke-width="1"/>
<line x1="606.0" y1="200.7" x2="592.2" y2="260.2" stroke-opacity="0.023" stroke-width="1"/>
<line x1="592.2" y1="260.2" x2="575.5" y2="332.0" stroke-opacity="0.033" stroke-width="1"/>
<line x1="575.5" y1="332.0" x2="554.9" y2="420.4" stroke-opacity="0.044" stroke-width="1"/>
<line x1="554.9" y1="420.4" x2="529.0" y2="532.0" stroke-opacity="0.054" stroke-width="1"/>
<line x1="529.0" y1="532.0" x2="495.3" y2="677.2" stroke-opacity="0.065" stroke-width="1"/>
<line x1="495.3" y1="677.2" x2="449.5" y2="873.9" stroke-opacity="0.067" stroke-width="1"/>
<line x1="449.5" y1="873.9" x2="384.1" y2="1155.5" stroke-opacity="0.067" stroke-width="1"/>
<line x1="384.1" y1="1155.5" x2="282.7" y2="1591.8" stroke-opacity="0.067" stroke-width="1"/>
<line x1="649.5" y1="72.1" x2="641.9" y2="109.1" stroke-opacity="0.012" stroke-width="1"/>
<line x1="641.9" y1="109.1" x2="633.1" y2="152.0" stroke-opacity="0.012" stroke-width="1"/>
<line x1="633.1" y1="152.0" x2="622.7" y2="202.3" stroke-opacity="0.012" stroke-width="1"/>
<line x1="622.7" y1="202.3" x2="610.5" y2="262.1" stroke-opacity="0.023" stroke-width="1"/>
<line x1="610.5" y1="262.1" x2="595.6" y2="334.4" stroke-opacity="0.034" stroke-width="1"/>
<line x1="595.6" y1="334.4" x2="577.3" y2="423.4" stroke-opacity="0.044" stroke-width="1"/>
<line x1="577.3" y1="423.4" x2="554.3" y2="535.8" stroke-opacity="0.055" stroke-width="1"/>
<line x1="554.3" y1="535.8" x2="524.2" y2="682.2" stroke-opacity="0.065" stroke-width="1"/>
<line x1="524.2" y1="682.2" x2="483.4" y2="880.9" stroke-opacity="0.067" stroke-width="1"/>
<line x1="483.4" y1="880.9" x2="424.9" y2="1165.9" stroke-opacity="0.067" stroke-width="1"/>
<line x1="424.9" y1="1165.9" x2="333.9" y2="1608.8" stroke-opacity="0.067" stroke-width="1"/>
<line x1="662.9" y1="73.1" x2="656.3" y2="110.3" stroke-opacity="0.012" stroke-width="1"/>
<line x1="656.3" y1="110.3" x2="648.6" y2="153.4" stroke-opacity="0.012" stroke-width="1"/>
<line x1="648.6" y1="153.4" x2="639.6" y2="204.0" stroke-opacity="0.013" stroke-width="1"/>
<line x1="639.6" y1="204.0" x2="628.9" y2="264.1" stroke-opacity="0.023" stroke-width="1"/>
<line x1="628.9" y1="264.1" x2="615.9" y2="336.7" stroke-opacity="0.034" stroke-width="1"/>
<line x1="615.9" y1="336.7" x2="599.9" y2="426.3" stroke-opacity="0.044" stroke-width="1"/>
<line x1="599.9" y1="426.3" x2="579.7" y2="539.6" stroke-opacity="0.055" stroke-width="1"/>
<line x1="579.7" y1="539.6" x2="553.4" y2="687.3" stroke-opacity="0.065" stroke-width="1"/>
<line x1="553.4" y1="687.3" x2="517.6" y2="888.0" stroke-opacity="0.067" stroke-width="1"/>
<line x1="517.6" y1="888.0" x2="466.2" y2="1176.4" stroke-opacity="0.067" stroke-width="1"/>
<line x1="466.2" y1="1176.4" x2="386.0" y2="1626.1" stroke-opacity="0.067" stroke-width="1"/>
<line x1="676.4" y1="74.1" x2="670.7" y2="111.5" stroke-opacity="0.012" stroke-width="1"/>
<line x1="670.7" y1="111.5" x2="664.2" y2="154.8" stroke-opacity="0.012" stroke-width="1"/>
<line x1="664.2" y1="154.8" x2="656.5" y2="205.6" stroke-opacity="0.013" stroke-width="1"/>
<line x1="656.5" y1="205.6" x2="647.4" y2="266.0" stroke-opacity="0.024" stroke-width="1"/>
<line x1="647.4" y1="266.0" x2="636.3" y2="339.1" stroke-opacity="0.034" stroke-width="1"/>
<line x1="636.3" y1="339.1" x2="622.7" y2="429.4" stroke-opacity="0.045" stroke-width="1"/>
<line x1="622.7" y1="429.4" x2="605.4" y2="543.5" stroke-opacity="0.055" stroke-width="1"/>
<line x1="605.4" y1="543.5" x2="582.8" y2="692.5" stroke-opacity="0.066" stroke-width="1"/>
<line x1="582.8" y1="692.5" x2="552.2" y2="895.2" stroke-opacity="0.067" stroke-width="1"/>
<line x1="552.2" y1="895.2" x2="508.0" y2="1187.1" stroke-opacity="0.067" stroke-width="1"/>
<line x1="508.0" y1="1187.1" x2="438.9" y2="1643.6" stroke-opacity="0.067" stroke-width="1"/>
<line x1="689.9" y1="75.2" x2="685.3" y2="112.7" stroke-opacity="0.012" stroke-width="1"/>
<line x1="685.3" y1="112.7" x2="679.9" y2="156.2" stroke-opacity="0.012" stroke-width="1"/>
<line x1="679.9" y1="156.2" x2="673.5" y2="207.2" stroke-opacity="0.013" stroke-width="1"/>
<line x1="673.5" y1="207.2" x2="666.0" y2="268.0" stroke-opacity="0.024" stroke-width="1"/>
<line x1="666.0" y1="268.0" x2="656.8" y2="341.6" stroke-opacity="0.034" stroke-width="1"/>
<line x1="656.8" y1="341.6" x2="645.6" y2="432.4" stroke-opacity="0.045" stroke-width="1"/>
<line x1="645.6" y1="432.4" x2="631.3" y2="547.4" stroke-opacity="0.056" stroke-width="1"/>
<line x1="631.3" y1="547.4" x2="612.6" y2="697.6" stroke-opacity="0.066" stroke-width="1"/>
<line x1="612.6" y1="697.6" x2="587.1" y2="902.4" stroke-opacity="0.067" stroke-width="1"/>
<line x1="587.1" y1="902.4" x2="550.4" y2="1197.9" stroke-opacity="0.067" stroke-width="1"/>
<line x1="550.4" y1="1197.9" x2="492.8" y2="1661.5" stroke-opacity="0.067" stroke-width="1"/>
<line x1="703.6" y1="76.2" x2="699.9" y2="113.9" stroke-opacity="0.012" stroke-width="1"/>
<line x1="699.9" y1="113.9" x2="695.6" y2="157.6" stroke-opacity="0.012" stroke-width="1"/>
<line x1="695.6" y1="157.6" x2="690.7" y2="208.9" stroke-opacity="0.014" stroke-width="1"/>
<line x1="690.7" y1="208.9" x2="684.7" y2="270.0" stroke-opacity="0.024" stroke-width="1"/>
<line x1="684.7" y1="270.0" x2="677.5" y2="344.0" stroke-opacity="0.035" stroke-width="1"/>
<line x1="677.5" y1="344.0" x2="668.6" y2="435.4" stroke-opacity="0.045" stroke-width="1"/>
<line x1="668.6" y1="435.4" x2="657.4" y2="551.3" stroke-opacity="0.056" stroke-width="1"/>
<line x1="657.4" y1="551.3" x2="642.6" y2="702.9" stroke-opacity="0.066" stroke-width="1"/>
<line x1="642.6" y1="702.9" x2="622.5" y2="909.8" stroke-opacity="0.067" stroke-width="1"/>
<line x1="622.5" y1="909.8" x2="593.4" y2="1208.9" stroke-opacity="0.067" stroke-width="1"/>
<line x1="593.4" y1="1208.9" x2="547.6" y2="1679.7" stroke-opacity="0.067" stroke-width="1"/>
<line x1="730.9" y1="78.3" x2="729.3" y2="116.3" stroke-opacity="0.012" stroke-width="1"/>
<line x1="729.3" y1="116.3" x2="727.4" y2="160.4" stroke-opacity="0.012" stroke-width="1"/>
<line x1="727.4" y1="160.4" x2="725.2" y2="212.2" stroke-opacity="0.014" stroke-width="1"/>
<line x1="725.2" y1="212.2" x2="722.5" y2="274.0" stroke-opacity="0.025" stroke-width="1"/>
<line x1="722.5" y1="274.0" x2="719.3" y2="348.9" stroke-opacity="0.035" stroke-width="1"/>
<line x1="719.3" y1="348.9" x2="715.3" y2="441.6" stroke-opacity="0.046" stroke-width="1"/>
<line x1="715.3" y1="441.6" x2="710.2" y2="559.2" stroke-opacity="0.056" stroke-width="1"/>
<line x1="710.2" y1="559.2" x2="703.5" y2="713.5" stroke-opacity="0.067" stroke-width="1"/>
<line x1="703.5" y1="713.5" x2="694.4" y2="924.7" stroke-opacity="0.067" stroke-width="1"/>
<line x1="694.4" y1="924.7" x2="681.2" y2="1231.3" stroke-opacity="0.067" stroke-width="1"/>
<line x1="681.2" y1="1231.3" x2="660.2" y2="1717.0" stroke-opacity="0.067" stroke-width="1"/>
<line x1="744.7" y1="79.3" x2="744.1" y2="117.5" stroke-opacity="0.012" stroke-width="1"/>
<line x1="744.1" y1="117.5" x2="743.4" y2="161.8" stroke-opacity="0.012" stroke-width="1"/>
<line x1="743.4" y1="161.8" x2="742.5" y2="213.9" stroke-opacity="0.015" stroke-width="1"/>
<line x1="742.5" y1="213.9" x2="741.5" y2="276.0" stroke-opacity="0.025" stroke-width="1"/>
<line x1="741.5" y1="276.0" x2="740.3" y2="351.4" stroke-opacity="0.036" stroke-width="1"/>
<line x1="740.3" y1="351.4" x2="738.8" y2="444.7" stroke-opacity="0.046" stroke-width="1"/>
<line x1="738.8" y1="444.7" x2="736.9" y2="563.3" stroke-opacity="0.057" stroke-width="1"/>
<line x1="736.9" y1="563.3" x2="734.4" y2="718.9" stroke-opacity="0.067" stroke-width="1"/>
<line x1="734.4" y1="718.9" x2="731.0" y2="932.2" stroke-opacity="0.067" stroke-width="1"/>
<line x1="731.0" y1="932.2" x2="726.0" y2="1242.7" stroke-opacity="0.067" stroke-width="1"/>
<line x1="726.0" y1="1242.7" x2="718.0" y2="1736.2" stroke-opacity="0.067" stroke-width="1"/>
<line x1="758.6" y1="80.4" x2="759.0" y2="118.7" stroke-opacity="0.012" stroke-width="1"/>
<line x1="759.0" y1="118.7" x2="759.5" y2="163.2" stroke-opacity="0.012" stroke-width="1"/>
<line x1="759.5" y1="163.2" x2="760.0" y2="215.6" stroke-opacity="0.015" stroke-width="1"/>
<line x1="760.0" y1="215.6" x2="760.7" y2="278.1" stroke-opacity="0.026" stroke-width="1"/>
<line x1="760.7" y1="278.1" x2="761.5" y2="353.9" stroke-opacity="0.036" stroke-width="1"/>
<line x1="761.5" y1="353.9" x2="762.6" y2="447.8" stroke-opacity="0.047" stroke-width="1"/>
<line x1="762.6" y1="447.8" x2="763.9" y2="567.3" stroke-opacity="0.057" stroke-width="1"/>
<line x1="763.9" y1="567.3" x2="765.6" y2="724.3" stroke-opacity="0.067" stroke-width="1"/>
<line x1="765.6" y1="724.3" x2="768.0" y2="939.9" stroke-opacity="0.067" stroke-width="1"/>
<line x1="768.0" y1="939.9" x2="771.4" y2="1254.3" stroke-opacity="0.067" stroke-width="1"/>
<line x1="771.4" y1="1254.3" x2="776.9" y2="1755.7" stroke-opacity="0.067" stroke-width="1"/>
<line x1="772.4" y1="81.4" x2="773.9" y2="119.9" stroke-opacity="0.012" stroke-width="1"/>
<line x1="773.9" y1="119.9" x2="775.6" y2="164.7" stroke-opacity="0.012" stroke-width="1"/>
<line x1="775.6" y1="164.7" x2="777.6" y2="217.3" stroke-opacity="0.015" stroke-width="1"/>
<line x1="777.6" y1="217.3" x2="780.0" y2="280.1" stroke-opacity="0.026" stroke-width="1"/>
<line x1="780.0" y1="280.1" x2="782.9" y2="356.4" stroke-opacity="0.036" stroke-width="1"/>
<line x1="782.9" y1="356.4" x2="786.5" y2="451.0" stroke-opacity="0.047" stroke-width="1"/>
<line x1="786.5" y1="451.0" x2="791.1" y2="571.4" stroke-opacity="0.057" stroke-width="1"/>
<line x1="791.1" y1="571.4" x2="797.1" y2="729.8" stroke-opacity="0.067" stroke-width="1"/>
<line x1="797.1" y1="729.8" x2="805.4" y2="947.7" stroke-opacity="0.067" stroke-width="1"/>
<line x1="805.4" y1="947.7" x2="817.5" y2="1266.1" stroke-opacity="0.067" stroke-width="1"/>
<line x1="817.5" y1="1266.1" x2="836.8" y2="1775.6" stroke-opacity="0.067" stroke-width="1"/>
<line x1="786.4" y1="82.5" x2="788.9" y2="121.1" stroke-opacity="0.012" stroke-width="1"/>
<line x1="788.9" y1="121.1" x2="791.8" y2="166.1" stroke-opacity="0.012" stroke-width="1"/>
<line x1="791.8" y1="166.1" x2="795.3" y2="219.0" stroke-opacity="0.016" stroke-width="1"/>
<line x1="795.3" y1="219.0" x2="799.4" y2="282.2" stroke-opacity="0.026" stroke-width="1"/>
<line x1="799.4" y1="282.2" x2="804.4" y2="358.9" stroke-opacity="0.037" stroke-width="1"/>
<line x1="804.4" y1="358.9" x2="810.6" y2="454.2" stroke-opacity="0.047" stroke-width="1"/>
<line x1="810.6" y1="454.2" x2="818.5" y2="575.5" stroke-opacity="0.058" stroke-width="1"/>
<line x1="818.5" y1="575.5" x2="828.9" y2="735.4" stroke-opacity="0.067" stroke-width="1"/>
<line x1="828.9" y1="735.4" x2="843.2" y2="955.5" stroke-opacity="0.067" stroke-width="1"/>
<line x1="843.2" y1="955.5" x2="864.2" y2="1278.0" stroke-opacity="0.067" stroke-width="1"/>
<line x1="864.2" y1="1278.0" x2="897.9" y2="1795.8" stroke-opacity="0.067" stroke-width="1"/>
<line x1="800.4" y1="83.5" x2="804.0" y2="122.4" stroke-opacity="0.012" stroke-width="1"/>
<line x1="804.0" y1="122.4" x2="808.2" y2="167.5" stroke-opacity="0.012" stroke-width="1"/>
<line x1="808.2" y1="167.5" x2="813.1" y2="220.7" stroke-opacity="0.016" stroke-width="1"/>
<line x1="813.1" y1="220.7" x2="818.9" y2="284.2" stroke-opacity="0.027" stroke-width="1"/>
<line x1="818.9" y1="284.2" x2="826.0" y2="361.5" stroke-opacity="0.037" stroke-width="1"/>
<line x1="826.0" y1="361.5" x2="834.9" y2="457.4" stroke-opacity="0.048" stroke-width="1"/>
<line x1="834.9" y1="457.4" x2="846.1" y2="579.7" stroke-opacity="0.058" stroke-width="1"/>
<line x1="846.1" y1="579.7" x2="861.0" y2="741.0" stroke-opacity="0.067" stroke-width="1"/>
<line x1="861.0" y1="741.0" x2="881.5" y2="963.4" stroke-opacity="0.067" stroke-width="1"/>
<line x1="881.5" y1="963.4" x2="911.6" y2="1290.1" stroke-opacity="0.067" stroke-width="1"/>
<line x1="911.6" y1="1290.1" x2="960.0" y2="1816.4" stroke-opacity="0.067" stroke-width="1"/>
<line x1="814.5" y1="84.6" x2="819.1" y2="123.6" stroke-opacity="0.012" stroke-width="1"/>
<line x1="819.1" y1="123.6" x2="824.5" y2="169.0" stroke-opacity="0.012" stroke-width="1"/>
<line x1="824.5" y1="169.0" x2="830.9" y2="222.4" stroke-opacity="0.016" stroke-width="1"/>
<line x1="830.9" y1="222.4" x2="838.5" y2="286.3" stroke-opacity="0.027" stroke-width="1"/>
<line x1="838.5" y1="286.3" x2="847.8" y2="364.0" stroke-opacity="0.037" stroke-width="1"/>
<line x1="847.8" y1="364.0" x2="859.3" y2="460.6" stroke-opacity="0.048" stroke-width="1"/>
<line x1="859.3" y1="460.6" x2="874.0" y2="583.9" stroke-opacity="0.058" stroke-width="1"/>
<line x1="874.0" y1="583.9" x2="893.4" y2="746.6" stroke-opacity="0.067" stroke-width="1"/>
<line x1="893.4" y1="746.6" x2="920.2" y2="971.5" stroke-opacity="0.067" stroke-width="1"/>
<line x1="920.2" y1="971.5" x2="959.6" y2="1302.3" stroke-opacity="0.067" stroke-width="1"/>
<line x1="959.6" y1="1302.3" x2="1023.4" y2="1837.4" stroke-opacity="0.067" stroke-width="1"/>
<line x1="828.6" y1="85.7" x2="834.4" y2="124.9" stroke-opacity="0.012" stroke-width="1"/>
<line x1="834.4" y1="124.9" x2="841.0" y2="170.5" stroke-opacity="0.012" stroke-width="1"/>
<line x1="841.0" y1="170.5" x2="848.9" y2="224.2" stroke-opacity="0.017" stroke-width="1"/>
<line x1="848.9" y1="224.2" x2="858.3" y2="288.4" stroke-opacity="0.027" stroke-width="1"/>
<line x1="858.3" y1="288.4" x2="869.7" y2="366.6" stroke-opacity="0.038" stroke-width="1"/>
<line x1="869.7" y1="366.6" x2="883.9" y2="463.9" stroke-opacity="0.048" stroke-width="1"/>
<line x1="883.9" y1="463.9" x2="902.1" y2="588.1" stroke-opacity="0.059" stroke-width="1"/>
<line x1="902.1" y1="588.1" x2="926.1" y2="752.3" stroke-opacity="0.067" stroke-width="1"/>
<line x1="926.1" y1="752.3" x2="959.4" y2="979.6" stroke-opacity="0.067" stroke-width="1"/>
<line x1="959.4" y1="979.6" x2="1008.4" y2="1314.8" stroke-opacity="0.067" stroke-width="1"/>
<line x1="1008.4" y1="1314.8" x2="1087.9" y2="1858.8" stroke-opacity="0.067" stroke-width="1"/>
<line x1="842.8" y1="86.8" x2="849.6" y2="126.1" stroke-opacity="0.012" stroke-width="1"/>
<line x1="849.6" y1="126.1" x2="857.6" y2="171.9" stroke-opacity="0.012" stroke-width="1"/>
<line x1="857.6" y1="171.9" x2="866.9" y2="225.9" stroke-opacity="0.017" stroke-width="1"/>
<line x1="866.9" y1="225.9" x2="878.1" y2="290.5" stroke-opacity="0.027" stroke-width="1"/>
<line x1="878.1" y1="290.5" x2="891.8" y2="369.2" stroke-opacity="0.038" stroke-width="1"/>
<line x1="891.8" y1="369.2" x2="908.7" y2="467.1" stroke-opacity="0.049" stroke-width="1"/>
<line x1="908.7" y1="467.1" x2="930.4" y2="592.3" stroke-opacity="0.059" stroke-width="1"/>
<line x1="930.4" y1="592.3" x2="959.2" y2="758.1" stroke-opacity="0.067" stroke-width="1"/>
<line x1="959.2" y1="758.1" x2="999.0" y2="987.8" stroke-opacity="0.067" stroke-width="1"/>
<line x1="999.0" y1="987.8" x2="1057.8" y2="1327.4" stroke-opacity="0.067" stroke-width="1"/>
<line x1="1057.8" y1="1327.4" x2="1153.7" y2="1880.6" stroke-opacity="0.067" stroke-width="1"/>
<line x1="871.4" y1="88.9" x2="880.4" y2="128.6" stroke-opacity="0.012" stroke-width="1"/>
<line x1="880.4" y1="128.6" x2="890.9" y2="174.9" stroke-opacity="0.012" stroke-width="1"/>
<line x1="890.9" y1="174.9" x2="903.4" y2="229.4" stroke-opacity="0.018" stroke-width="1"/>
<line x1="903.4" y1="229.4" x2="918.2" y2="294.8" stroke-opacity="0.028" stroke-width="1"/>
<line x1="918.2" y1="294.8" x2="936.3" y2="374.5" stroke-opacity="0.039" stroke-width="1"/>
<line x1="936.3" y1="374.5" x2="958.9" y2="473.8" stroke-opacity="0.049" stroke-width="1"/>
<line x1="958.9" y1="473.8" x2="987.9" y2="601.0" stroke-opacity="0.060" stroke-width="1"/>
<line x1="987.9" y1="601.0" x2="1026.3" y2="769.8" stroke-opacity="0.067" stroke-width="1"/>
<line x1="1026.3" y1="769.8" x2="1079.7" y2="1004.5" stroke-opacity="0.067" stroke-width="1"/>
<line x1="1079.7" y1="1004.5" x2="1159.0" y2="1353.2" stroke-opacity="0.067" stroke-width="1"/>
<line x1="1159.0" y1="1353.2" x2="1289.2" y2="1925.6" stroke-opacity="0.067" stroke-width="1"/>
<line x1="885.8" y1="90.0" x2="895.9" y2="129.9" stroke-opacity="0.012" stroke-width="1"/>
<line x1="895.9" y1="129.9" x2="907.8" y2="176.4" stroke-opacity="0.012" stroke-width="1"/>
<line x1="907.8" y1="176.4" x2="921.7" y2="231.2" stroke-opacity="0.018" stroke-width="1"/>
<line x1="921.7" y1="231.2" x2="938.4" y2="296.9" stroke-opacity="0.028" stroke-width="1"/>
<line x1="938.4" y1="296.9" x2="958.9" y2="377.1" stroke-opacity="0.039" stroke-width="1"/>
<line x1="958.9" y1="377.1" x2="984.3" y2="477.1" stroke-opacity="0.049" stroke-width="1"/>
<line x1="984.3" y1="477.1" x2="1017.0" y2="605.4" stroke-opacity="0.060" stroke-width="1"/>
<line x1="1017.0" y1="605.4" x2="1060.3" y2="775.7" stroke-opacity="0.067" stroke-width="1"/>
<line x1="1060.3" y1="775.7" x2="1120.7" y2="1013.0" stroke-opacity="0.067" stroke-width="1"/>
<line x1="1120.7" y1="1013.0" x2="1210.7" y2="1366.4" stroke-opacity="0.067" stroke-width="1"/>
<line x1="1210.7" y1="1366.4" x2="1358.9" y2="1948.7" stroke-opacity="0.067" stroke-width="1"/>
<line x1="900.2" y1="91.1" x2="911.5" y2="131.2" stroke-opacity="0.012" stroke-width="1"/>
<line x1="911.5" y1="131.2" x2="924.7" y2="177.9" stroke-opacity="0.012" stroke-width="1"/>
<line x1="924.7" y1="177.9" x2="940.2" y2="233.0" stroke-opacity="0.018" stroke-width="1"/>
<line x1="940.2" y1="233.0" x2="958.8" y2="299.1" stroke-opacity="0.029" stroke-width="1"/>
<line x1="958.8" y1="299.1" x2="981.5" y2="379.8" stroke-opacity="0.039" stroke-width="1"/>
<line x1="981.5" y1="379.8" x2="1009.9" y2="480.5" stroke-opacity="0.050" stroke-width="1"/>
<line x1="1009.9" y1="480.5" x2="1046.3" y2="609.8" stroke-opacity="0.060" stroke-width="1"/>
<line x1="1046.3" y1="609.8" x2="1094.7" y2="781.7" stroke-opacity="0.067" stroke-width="1"/>
<line x1="1094.7" y1="781.7" x2="1162.3" y2="1021.6" stroke-opacity="0.067" stroke-width="1"/>
<line x1="1162.3" y1="1021.6" x2="1263.2" y2="1379.8" stroke-opacity="0.067" stroke-width="1"/>
<line x1="1263.2" y1="1379.8" x2="1430.0" y2="1972.3" stroke-opacity="0.067" stroke-width="1"/>
<line x1="914.7" y1="92.2" x2="927.1" y2="132.4" stroke-opacity="0.012" stroke-width="1"/>
<line x1="927.1" y1="132.4" x2="941.6" y2="179.4" stroke-opacity="0.012" stroke-width="1"/>
<line x1="941.6" y1="179.4" x2="958.7" y2="234.8" stroke-opacity="0.019" stroke-width="1"/>
<line x1="958.7" y1="234.8" x2="979.3" y2="301.3" stroke-opacity="0.029" stroke-width="1"/>
<line x1="979.3" y1="301.3" x2="1004.3" y2="382.5" stroke-opacity="0.040" stroke-width="1"/>
<line x1="1004.3" y1="382.5" x2="1035.7" y2="483.9" stroke-opacity="0.050" stroke-width="1"/>
<line x1="1035.7" y1="483.9" x2="1075.9" y2="614.2" stroke-opacity="0.061" stroke-width="1"/>
<line x1="1075.9" y1="614.2" x2="1129.5" y2="787.8" stroke-opacity="0.067" stroke-width="1"/>
<line x1="1129.5" y1="787.8" x2="1204.4" y2="1030.3" stroke-opacity="0.067" stroke-width="1"/>
<line x1="1204.4" y1="1030.3" x2="1316.4" y2="1393.4" stroke-opacity="0.067" stroke-width="1"/>
<line x1="1316.4" y1="1393.4" x2="1502.6" y2="1996.3" stroke-opacity="0.067" stroke-width="1"/>
<line x1="929.3" y1="93.3" x2="942.9" y2="133.7" stroke-opacity="0.012" stroke-width="1"/>
<line x1="942.9" y1="133.7" x2="958.7" y2="180.9" stroke-opacity="0.012" stroke-width="1"/>
<line x1="958.7" y1="180.9" x2="977.4" y2="236.6" stroke-opacity="0.019" stroke-width="1"/>
<line x1="977.4" y1="236.6" x2="999.9" y2="303.5" stroke-opacity="0.029" stroke-width="1"/>
<line x1="999.9" y1="303.5" x2="1027.3" y2="385.2" stroke-opacity="0.040" stroke-width="1"/>
<line x1="1027.3" y1="385.2" x2="1061.6" y2="487.3" stroke-opacity="0.050" stroke-width="1"/>
<line x1="1061.6" y1="487.3" x2="1105.7" y2="618.7" stroke-opacity="0.061" stroke-width="1"/>
<line x1="1105.7" y1="618.7" x2="1164.6" y2="793.9" stroke-opacity="0.067" stroke-width="1"/>
<line x1="1164.6" y1="793.9" x2="1246.9" y2="1039.2" stroke-opacity="0.067" stroke-width="1"/>
<line x1="1246.9" y1="1039.2" x2="1370.5" y2="1407.2" stroke-opacity="0.067" stroke-width="1"/>
<line x1="1370.5" y1="1407.2" x2="1576.6" y2="2020.9" stroke-opacity="0.067" stroke-width="1"/>
<line x1="943.9" y1="94.4" x2="958.7" y2="135.0" stroke-opacity="0.012" stroke-width="1"/>
<line x1="958.7" y1="135.0" x2="975.9" y2="182.4" stroke-opacity="0.012" stroke-width="1"/>
<line x1="975.9" y1="182.4" x2="996.2" y2="238.4" stroke-opacity="0.019" stroke-width="1"/>
<line x1="996.2" y1="238.4" x2="1020.6" y2="305.6" stroke-opacity="0.030" stroke-width="1"/>
<line x1="1020.6" y1="305.6" x2="1050.4" y2="387.9" stroke-opacity="0.040" stroke-width="1"/>
<line x1="1050.4" y1="387.9" x2="1087.8" y2="490.8" stroke-opacity="0.051" stroke-width="1"/>
<line x1="1087.8" y1="490.8" x2="1135.8" y2="623.2" stroke-opacity="0.061" stroke-width="1"/>
<line x1="1135.8" y1="623.2" x2="1200.0" y2="800.1" stroke-opacity="0.067" stroke-width="1"/>
<line x1="1200.0" y1="800.1" x2="1290.0" y2="1048.1" stroke-opacity="0.067" stroke-width="1"/>
<line x1="1290.0" y1="1048.1" x2="1425.4" y2="1421.2" stroke-opacity="0.067" stroke-width="1"/>
<line x1="1425.4" y1="1421.2" x2="1652.2" y2="2045.9" stroke-opacity="0.067" stroke-width="1"/>
<line x1="958.6" y1="95.6" x2="974.5" y2="136.3" stroke-opacity="0.012" stroke-width="1"/>
<line x1="974.5" y1="136.3" x2="993.1" y2="183.9" stroke-opacity="0.012" stroke-width="1"/>
<line x1="993.1" y1="183.9" x2="1015.1" y2="240.2" stroke-opacity="0.020" stroke-width="1"/>
<line x1="1015.1" y1="240.2" x2="1041.4" y2="307.9" stroke-opacity="0.030" stroke-width="1"/>
<line x1="1041.4" y1="307.9" x2="1073.7" y2="390.6" stroke-opacity="0.041" stroke-width="1"/>
<line x1="1073.7" y1="390.6" x2="1114.1" y2="494.3" stroke-opacity="0.051" stroke-width="1"/>
<line x1="1114.1" y1="494.3" x2="1166.2" y2="627.8" stroke-opacity="0.062" stroke-width="1"/>
<line x1="1166.2" y1="627.8" x2="1235.8" y2="806.3" stroke-opacity="0.067" stroke-width="1"/>
<line x1="1235.8" y1="806.3" x2="1333.7" y2="1057.2" stroke-opacity="0.067" stroke-width="1"/>
<line x1="1333.7" y1="1057.2" x2="1481.2" y2="1435.5" stroke-opacity="0.067" stroke-width="1"/>
<line x1="1481.2" y1="1435.5" x2="1729.3" y2="2071.5" stroke-opacity="0.067" stroke-width="1"/>
<line x1="973.4" y1="96.7" x2="990.5" y2="137.6" stroke-opacity="0.012" stroke-width="1"/>
<line x1="990.5" y1="137.6" x2="1010.4" y2="185.5" stroke-opacity="0.012" stroke-width="1"/>
<line x1="1010.4" y1="185.5" x2="1034.0" y2="242.1" stroke-opacity="0.020" stroke-width="1"/>
<line x1="1034.0" y1="242.1" x2="1062.4" y2="310.1" stroke-opacity="0.030" stroke-width="1"/>
<line x1="1062.4" y1="310.1" x2="1097.2" y2="393.4" stroke-opacity="0.041" stroke-width="1"/>
<line x1="1097.2" y1="393.4" x2="1140.7" y2="497.8" stroke-opacity="0.051" stroke-width="1"/>
<line x1="1140.7" y1="497.8" x2="1196.9" y2="632.4" stroke-opacity="0.062" stroke-width="1"/>
<line x1="1196.9" y1="632.4" x2="1272.0" y2="812.6" stroke-opacity="0.067" stroke-width="1"/>
<line x1="1272.0" y1="812.6" x2="1377.8" y2="1066.3" stroke-opacity="0.067" stroke-width="1"/>
<line x1="1377.8" y1="1066.3" x2="1537.9" y2="1449.9" stroke-opacity="0.067" stroke-width="1"/>
<line x1="1537.9" y1="1449.9" x2="1808.0" y2="2097.6" stroke-opacity="0.067" stroke-width="1"/>
<line x1="988.2" y1="97.8" x2="1006.5" y2="138.9" stroke-opacity="0.012" stroke-width="1"/>
<line x1="1006.5" y1="138.9" x2="1027.8" y2="187.0" stroke-opacity="0.012" stroke-width="1"/>
<line x1="1027.8" y1="187.0" x2="1053.1" y2="243.9" stroke-opacity="0.020" stroke-width="1"/>
<line x1="1053.1" y1="243.9" x2="1083.5" y2="312.3" stroke-opacity="0.031" stroke-width="1"/>
<line x1="1083.5" y1="312.3" x2="1120.8" y2="396.2" stroke-opacity="0.041" stroke-width="1"/>
<line x1="1120.8" y1="396.2" x2="1167.5" y2="501.3" stroke-opacity="0.052" stroke-width="1"/>
<line x1="1167.5" y1="501.3" x2="1227.8" y2="637.1" stroke-opacity="0.062" stroke-width="1"/>
<line x1="1227.8" y1="637.1" x2="1308.6" y2="819.0" stroke-opacity="0.067" stroke-width="1"/>
<line x1="1308.6" y1="819.0" x2="1422.6" y2="1075.6" stroke-opacity="0.067" stroke-width="1"/>
<line x1="1422.6" y1="1075.6" x2="1595.4" y2="1464.6" stroke-opacity="0.067" stroke-width="1"/>
<line x1="1595.4" y1="1464.6" x2="1888.4" y2="2124.3" stroke-opacity="0.067" stroke-width="1"/>
<line x1="1018.1" y1="100.1" x2="1038.8" y2="141.6" stroke-opacity="0.012" stroke-width="1"/>
<line x1="1038.8" y1="141.6" x2="1062.9" y2="190.1" stroke-opacity="0.012" stroke-width="1"/>
<line x1="1062.9" y1="190.1" x2="1091.6" y2="247.6" stroke-opacity="0.021" stroke-width="1"/>
<line x1="1091.6" y1="247.6" x2="1126.1" y2="316.9" stroke-opacity="0.031" stroke-width="1"/>
<line x1="1126.1" y1="316.9" x2="1168.5" y2="401.8" stroke-opacity="0.042" stroke-width="1"/>
<line x1="1168.5" y1="401.8" x2="1221.6" y2="508.5" stroke-opacity="0.052" stroke-width="1"/>
<line x1="1221.6" y1="508.5" x2="1290.4" y2="646.5" stroke-opacity="0.063" stroke-width="1"/>
<line x1="1290.4" y1="646.5" x2="1382.9" y2="831.9" stroke-opacity="0.067" stroke-width="1"/>
<line x1="1382.9" y1="831.9" x2="1513.7" y2="1094.5" stroke-opacity="0.067" stroke-width="1"/>
<line x1="1513.7" y1="1094.5" x2="1713.2" y2="1494.7" stroke-opacity="0.067" stroke-width="1"/>
<line x1="1713.2" y1="1494.7" x2="2054.5" y2="2179.3" stroke-opacity="0.067" stroke-width="1"/>
<line x1="1033.1" y1="101.2" x2="1055.0" y2="142.9" stroke-opacity="0.012" stroke-width="1"/>
<line x1="1055.0" y1="142.9" x2="1080.6" y2="191.7" stroke-opacity="0.012" stroke-width="1"/>
<line x1="1080.6" y1="191.7" x2="1111.0" y2="249.5" stroke-opacity="0.021" stroke-width="1"/>
<line x1="1111.0" y1="249.5" x2="1147.6" y2="319.1" stroke-opacity="0.032" stroke-width="1"/>
<line x1="1147.6" y1="319.1" x2="1192.6" y2="404.6" stroke-opacity="0.042" stroke-width="1"/>
<line x1="1192.6" y1="404.6" x2="1249.0" y2="512.1" stroke-opacity="0.053" stroke-width="1"/>
<line x1="1249.0" y1="512.1" x2="1322.2" y2="651.2" stroke-opacity="0.063" stroke-width="1"/>
<line x1="1322.2" y1="651.2" x2="1420.6" y2="838.5" stroke-opacity="0.067" stroke-width="1"/>
<line x1="1420.6" y1="838.5" x2="1560.2" y2="1104.1" stroke-opacity="0.067" stroke-width="1"/>
<line x1="1560.2" y1="1104.1" x2="1773.6" y2="1510.1" stroke-opacity="0.067" stroke-width="1"/>
<line x1="1773.6" y1="1510.1" x2="2140.3" y2="2207.8" stroke-opacity="0.067" stroke-width="1"/>
<line x1="1048.2" y1="102.4" x2="1071.3" y2="144.2" stroke-opacity="0.012" stroke-width="1"/>
<line x1="1071.3" y1="144.2" x2="1098.4" y2="193.3" stroke-opacity="0.012" stroke-width="1"/>
<line x1="1098.4" y1="193.3" x2="1130.5" y2="251.4" stroke-opacity="0.021" stroke-width="1"/>
<line x1="1130.5" y1="251.4" x2="1169.3" y2="321.4" stroke-opacity="0.032" stroke-width="1"/>
<line x1="1169.3" y1="321.4" x2="1216.8" y2="407.5" stroke-opacity="0.042" stroke-width="1"/>
<line x1="1216.8" y1="407.5" x2="1276.7" y2="515.7" stroke-opacity="0.053" stroke-width="1"/>
<line x1="1276.7" y1="515.7" x2="1354.2" y2="656.1" stroke-opacity="0.064" stroke-width="1"/>
<line x1="1354.2" y1="656.1" x2="1458.7" y2="845.2" stroke-opacity="0.067" stroke-width="1"/>
<line x1="1458.7" y1="845.2" x2="1607.2" y2="1113.8" stroke-opacity="0.067" stroke-width="1"/>
<line x1="1607.2" y1="1113.8" x2="1834.9" y2="1525.7" stroke-opacity="0.067" stroke-width="1"/>
<line x1="1834.9" y1="1525.7" x2="2227.9" y2="2236.8" stroke-opacity="0.067" stroke-width="1"/>
<line x1="1063.3" y1="103.5" x2="1087.7" y2="145.6" stroke-opacity="0.012" stroke-width="1"/>
<line x1="1087.7" y1="145.6" x2="1116.3" y2="194.8" stroke-opacity="0.012" stroke-width="1"/>
<line x1="1116.3" y1="194.8" x2="1150.2" y2="253.3" stroke-opacity="0.022" stroke-width="1"/>
<line x1="1150.2" y1="253.3" x2="1191.0" y2="323.7" stroke-opacity="0.032" stroke-width="1"/>
<line x1="1191.0" y1="323.7" x2="1241.3" y2="410.4" stroke-opacity="0.043" stroke-width="1"/>
<line x1="1241.3" y1="410.4" x2="1304.5" y2="519.4" stroke-opacity="0.053" stroke-width="1"/>
<line x1="1304.5" y1="519.4" x2="1386.6" y2="660.9" stroke-opacity="0.064" stroke-width="1"/>
<line x1="1386.6" y1="660.9" x2="1497.3" y2="851.9" stroke-opacity="0.067" stroke-width="1"/>
<line x1="1497.3" y1="851.9" x2="1654.9" y2="1123.7" stroke-opacity="0.067" stroke-width="1"/>
<line x1="1654.9" y1="1123.7" x2="1897.2" y2="1541.6" stroke-opacity="0.067" stroke-width="1"/>
<line x1="1897.2" y1="1541.6" x2="2317.5" y2="2266.5" stroke-opacity="0.067" stroke-width="1"/>
<line x1="1078.6" y1="104.7" x2="1104.2" y2="146.9" stroke-opacity="0.012" stroke-width="1"/>
<line x1="1104.2" y1="146.9" x2="1134.3" y2="196.4" stroke-opacity="0.012" stroke-width="1"/>
<line x1="1134.3" y1="196.4" x2="1169.9" y2="255.2" stroke-opacity="0.022" stroke-width="1"/>
<line x1="1169.9" y1="255.2" x2="1213.0" y2="326.1" stroke-opacity="0.033" stroke-width="1"/>
<line x1="1213.0" y1="326.1" x2="1265.9" y2="413.3" stroke-opacity="0.043" stroke-width="1"/>
<line x1="1265.9" y1="413.3" x2="1332.6" y2="523.1" stroke-opacity="0.054" stroke-width="1"/>
<line x1="1332.6" y1="523.1" x2="1419.2" y2="665.8" stroke-opacity="0.064" stroke-width="1"/>
<line x1="1419.2" y1="665.8" x2="1536.2" y2="858.7" stroke-opacity="0.067" stroke-width="1"/>
<line x1="1536.2" y1="858.7" x2="1703.2" y2="1133.7" stroke-opacity="0.067" stroke-width="1"/>
<line x1="1703.2" y1="1133.7" x2="1960.6" y2="1557.8" stroke-opacity="0.067" stroke-width="1"/>
<line x1="1960.6" y1="1557.8" x2="2409.2" y2="2296.9" stroke-opacity="0.067" stroke-width="1"/>
<line x1="1093.9" y1="105.8" x2="1120.8" y2="148.3" stroke-opacity="0.012" stroke-width="1"/>
<line x1="1120.8" y1="148.3" x2="1152.3" y2="198.0" stroke-opacity="0.012" stroke-width="1"/>
<line x1="1152.3" y1="198.0" x2="1189.8" y2="257.1" stroke-opacity="0.022" stroke-width="1"/>
<line x1="1189.8" y1="257.1" x2="1235.0" y2="328.4" stroke-opacity="0.033" stroke-width="1"/>
<line x1="1235.0" y1="328.4" x2="1290.7" y2="416.2" stroke-opacity="0.043" stroke-width="1"/>
<line x1="1290.7" y1="416.2" x2="1360.8" y2="526.9" stroke-opacity="0.054" stroke-width="1"/>
<line x1="1360.8" y1="526.9" x2="1452.1" y2="670.8" stroke-opacity="0.065" stroke-width="1"/>
<line x1="1452.1" y1="670.8" x2="1575.6" y2="865.5" stroke-opacity="0.067" stroke-width="1"/>
<line x1="1575.6" y1="865.5" x2="1752.1" y2="1143.9" stroke-opacity="0.067" stroke-width="1"/>
<line x1="1752.1" y1="1143.9" x2="2025.0" y2="1574.2" stroke-opacity="0.067" stroke-width="1"/>
<line x1="2025.0" y1="1574.2" x2="2503.0" y2="2328.0" stroke-opacity="0.067" stroke-width="1"/>
<line x1="1109.2" y1="107.0" x2="1137.4" y2="149.6" stroke-opacity="0.012" stroke-width="1"/>
<line x1="1137.4" y1="149.6" x2="1170.5" y2="199.6" stroke-opacity="0.012" stroke-width="1"/>
<line x1="1170.5" y1="199.6" x2="1209.8" y2="259.0" stroke-opacity="0.023" stroke-width="1"/>
<line x1="1209.8" y1="259.0" x2="1257.2" y2="330.8" stroke-opacity="0.033" stroke-width="1"/>
<line x1="1257.2" y1="330.8" x2="1315.6" y2="419.1" stroke-opacity="0.044" stroke-width="1"/>
<line x1="1315.6" y1="419.1" x2="1389.4" y2="530.6" stroke-opacity="0.054" stroke-width="1"/>
<line x1="1389.4" y1="530.6" x2="1485.3" y2="675.8" stroke-opacity="0.065" stroke-width="1"/>
<line x1="1485.3" y1="675.8" x2="1615.4" y2="872.5" stroke-opacity="0.067" stroke-width="1"/>
<line x1="1615.4" y1="872.5" x2="1801.6" y2="1154.1" stroke-opacity="0.067" stroke-width="1"/>
<line x1="1801.6" y1="1154.1" x2="2090.5" y2="1590.9" stroke-opacity="0.067" stroke-width="1"/>
<line x1="2090.5" y1="1590.9" x2="2598.9" y2="2359.8" stroke-opacity="0.067" stroke-width="1"/>
<line x1="1124.6" y1="108.2" x2="1154.1" y2="151.0" stroke-opacity="0.012" stroke-width="1"/>
<line x1="1154.1" y1="151.0" x2="1188.7" y2="201.2" stroke-opacity="0.013" stroke-width="1"/>
<line x1="1188.7" y1="201.2" x2="1229.8" y2="261.0" stroke-opacity="0.023" stroke-width="1"/>
<line x1="1229.8" y1="261.0" x2="1279.5" y2="333.1" stroke-opacity="0.034" stroke-width="1"/>
<line x1="1279.5" y1="333.1" x2="1340.7" y2="422.1" stroke-opacity="0.044" stroke-width="1"/>
<line x1="1340.7" y1="422.1" x2="1418.1" y2="534.4" stroke-opacity="0.055" stroke-width="1"/>
<line x1="1418.1" y1="534.4" x2="1518.9" y2="680.8" stroke-opacity="0.065" stroke-width="1"/>
<line x1="1518.9" y1="680.8" x2="1655.6" y2="879.5" stroke-opacity="0.067" stroke-width="1"/>
<line x1="1655.6" y1="879.5" x2="1851.9" y2="1164.5" stroke-opacity="0.067" stroke-width="1"/>
<line x1="1851.9" y1="1164.5" x2="2157.1" y2="1607.9" stroke-opacity="0.067" stroke-width="1"/>
<line x1="2157.1" y1="1607.9" x2="2697.1" y2="2392.4" stroke-opacity="0.067" stroke-width="1"/>
<line x1="1140.1" y1="109.3" x2="1171.0" y2="152.4" stroke-opacity="0.012" stroke-width="1"/>
<line x1="1171.0" y1="152.4" x2="1207.1" y2="202.9" stroke-opacity="0.013" stroke-width="1"/>
<line x1="1207.1" y1="202.9" x2="1250.0" y2="262.9" stroke-opacity="0.023" stroke-width="1"/>
<line x1="1250.0" y1="262.9" x2="1302.0" y2="335.5" stroke-opacity="0.034" stroke-width="1"/>
<line x1="1302.0" y1="335.5" x2="1366.1" y2="425.1" stroke-opacity="0.044" stroke-width="1"/>
<line x1="1366.1" y1="425.1" x2="1447.1" y2="538.3" stroke-opacity="0.055" stroke-width="1"/>
<line x1="1447.1" y1="538.3" x2="1552.7" y2="685.9" stroke-opacity="0.065" stroke-width="1"/>
<line x1="1552.7" y1="685.9" x2="1696.3" y2="886.6" stroke-opacity="0.067" stroke-width="1"/>
<line x1="1696.3" y1="886.6" x2="1902.7" y2="1175.1" stroke-opacity="0.067" stroke-width="1"/>
<line x1="1902.7" y1="1175.1" x2="2224.8" y2="1625.2" stroke-opacity="0.067" stroke-width="1"/>
<line x1="2224.8" y1="1625.2" x2="2797.6" y2="2425.7" stroke-opacity="0.067" stroke-width="1"/>
<line x1="1171.4" y1="111.7" x2="1204.8" y2="155.1" stroke-opacity="0.012" stroke-width="1"/>
<line x1="1204.8" y1="155.1" x2="1244.1" y2="206.2" stroke-opacity="0.013" stroke-width="1"/>
<line x1="1244.1" y1="206.2" x2="1290.8" y2="266.9" stroke-opacity="0.024" stroke-width="1"/>
<line x1="1290.8" y1="266.9" x2="1347.4" y2="340.3" stroke-opacity="0.035" stroke-width="1"/>
<line x1="1347.4" y1="340.3" x2="1417.2" y2="431.1" stroke-opacity="0.045" stroke-width="1"/>
<line x1="1417.2" y1="431.1" x2="1505.7" y2="546.0" stroke-opacity="0.056" stroke-width="1"/>
<line x1="1505.7" y1="546.0" x2="1621.4" y2="696.2" stroke-opacity="0.066" stroke-width="1"/>
<line x1="1621.4" y1="696.2" x2="1779.0" y2="901.0" stroke-opacity="0.067" stroke-width="1"/>
<line x1="1779.0" y1="901.0" x2="2006.6" y2="1196.6" stroke-opacity="0.067" stroke-width="1"/>
<line x1="2006.6" y1="1196.6" x2="2363.8" y2="1660.7" stroke-opacity="0.067" stroke-width="1"/>
<line x1="2363.8" y1="1660.7" x2="3006.0" y2="2494.8" stroke-opacity="0.067" stroke-width="1"/>
<line x1="1187.1" y1="112.9" x2="1221.9" y2="156.5" stroke-opacity="0.012" stroke-width="1"/>
<line x1="1221.9" y1="156.5" x2="1262.7" y2="207.8" stroke-opacity="0.014" stroke-width="1"/>
<line x1="1262.7" y1="207.8" x2="1311.4" y2="268.8" stroke-opacity="0.024" stroke-width="1"/>
<line x1="1311.4" y1="268.8" x2="1370.3" y2="342.8" stroke-opacity="0.035" stroke-width="1"/>
<line x1="1370.3" y1="342.8" x2="1443.1" y2="434.1" stroke-opacity="0.045" stroke-width="1"/>
<line x1="1443.1" y1="434.1" x2="1535.4" y2="549.9" stroke-opacity="0.056" stroke-width="1"/>
<line x1="1535.4" y1="549.9" x2="1656.2" y2="701.5" stroke-opacity="0.066" stroke-width="1"/>
<line x1="1656.2" y1="701.5" x2="1821.0" y2="908.3" stroke-opacity="0.067" stroke-width="1"/>
<line x1="1821.0" y1="908.3" x2="2059.5" y2="1207.6" stroke-opacity="0.067" stroke-width="1"/>
<line x1="2059.5" y1="1207.6" x2="2435.2" y2="1678.9" stroke-opacity="0.067" stroke-width="1"/>
<line x1="2435.2" y1="1678.9" x2="3114.0" y2="2530.6" stroke-opacity="0.067" stroke-width="1"/>
<line x1="1202.9" y1="114.1" x2="1239.0" y2="157.9" stroke-opacity="0.012" stroke-width="1"/>
<line x1="1239.0" y1="157.9" x2="1281.5" y2="209.5" stroke-opacity="0.014" stroke-width="1"/>
<line x1="1281.5" y1="209.5" x2="1332.0" y2="270.8" stroke-opacity="0.025" stroke-width="1"/>
<line x1="1332.0" y1="270.8" x2="1393.3" y2="345.2" stroke-opacity="0.035" stroke-width="1"/>
<line x1="1393.3" y1="345.2" x2="1469.1" y2="437.2" stroke-opacity="0.046" stroke-width="1"/>
<line x1="1469.1" y1="437.2" x2="1565.3" y2="553.9" stroke-opacity="0.056" stroke-width="1"/>
<line x1="1565.3" y1="553.9" x2="1691.3" y2="706.7" stroke-opacity="0.067" stroke-width="1"/>
<line x1="1691.3" y1="706.7" x2="1863.5" y2="915.7" stroke-opacity="0.067" stroke-width="1"/>
<line x1="1863.5" y1="915.7" x2="2113.2" y2="1218.7" stroke-opacity="0.067" stroke-width="1"/>
<line x1="2113.2" y1="1218.7" x2="2507.8" y2="1697.5" stroke-opacity="0.067" stroke-width="1"/>
<line x1="2507.8" y1="1697.5" x2="3224.7" y2="2567.3" stroke-opacity="0.067" stroke-width="1"/>
<line x1="1218.7" y1="115.3" x2="1256.2" y2="159.4" stroke-opacity="0.012" stroke-width="1"/>
<line x1="1256.2" y1="159.4" x2="1300.3" y2="211.1" stroke-opacity="0.014" stroke-width="1"/>
<line x1="1300.3" y1="211.1" x2="1352.8" y2="272.8" stroke-opacity="0.025" stroke-width="1"/>
<line x1="1352.8" y1="272.8" x2="1416.5" y2="347.7" stroke-opacity="0.035" stroke-width="1"/>
<line x1="1416.5" y1="347.7" x2="1495.4" y2="440.3" stroke-opacity="0.046" stroke-width="1"/>
<line x1="1495.4" y1="440.3" x2="1595.5" y2="557.9" stroke-opacity="0.057" stroke-width="1"/>
<line x1="1595.5" y1="557.9" x2="1726.8" y2="712.1" stroke-opacity="0.067" stroke-width="1"/>
<line x1="1726.8" y1="712.1" x2="1906.5" y2="923.2" stroke-opacity="0.067" stroke-width="1"/>
<line x1="1906.5" y1="923.2" x2="2167.7" y2="1230.0" stroke-opacity="0.067" stroke-width="1"/>
<line x1="2167.7" y1="1230.0" x2="2581.7" y2="1716.3" stroke-opacity="0.067" stroke-width="1"/>
<line x1="2581.7" y1="1716.3" x2="3338.2" y2="2605.0" stroke-opacity="0.067" stroke-width="1"/>
<line x1="1234.6" y1="116.5" x2="1273.5" y2="160.8" stroke-opacity="0.012" stroke-width="1"/>
<line x1="1273.5" y1="160.8" x2="1319.2" y2="212.8" stroke-opacity="0.015" stroke-width="1"/>
<line x1="1319.2" y1="212.8" x2="1373.8" y2="274.9" stroke-opacity="0.025" stroke-width="1"/>
<line x1="1373.8" y1="274.9" x2="1439.9" y2="350.2" stroke-opacity="0.036" stroke-width="1"/>
<line x1="1439.9" y1="350.2" x2="1521.8" y2="443.4" stroke-opacity="0.046" stroke-width="1"/>
<line x1="1521.8" y1="443.4" x2="1625.9" y2="561.9" stroke-opacity="0.057" stroke-width="1"/>
<line x1="1625.9" y1="561.9" x2="1762.6" y2="717.5" stroke-opacity="0.067" stroke-width="1"/>
<line x1="1762.6" y1="717.5" x2="1950.0" y2="930.8" stroke-opacity="0.067" stroke-width="1"/>
<line x1="1950.0" y1="930.8" x2="2222.9" y2="1241.4" stroke-opacity="0.067" stroke-width="1"/>
<line x1="2222.9" y1="1241.4" x2="2656.9" y2="1735.5" stroke-opacity="0.067" stroke-width="1"/>
<line x1="2656.9" y1="1735.5" x2="3454.7" y2="2643.6" stroke-opacity="0.067" stroke-width="1"/>
<line x1="1250.6" y1="117.7" x2="1290.9" y2="162.2" stroke-opacity="0.012" stroke-width="1"/>
<line x1="1290.9" y1="162.2" x2="1338.3" y2="214.5" stroke-opacity="0.015" stroke-width="1"/>
<line x1="1338.3" y1="214.5" x2="1394.8" y2="276.9" stroke-opacity="0.026" stroke-width="1"/>
<line x1="1394.8" y1="276.9" x2="1463.4" y2="352.6" stroke-opacity="0.036" stroke-width="1"/>
<line x1="1463.4" y1="352.6" x2="1548.4" y2="446.5" stroke-opacity="0.047" stroke-width="1"/>
<line x1="1548.4" y1="446.5" x2="1656.6" y2="565.9" stroke-opacity="0.057" stroke-width="1"/>
<line x1="1656.6" y1="565.9" x2="1798.7" y2="722.9" stroke-opacity="0.067" stroke-width="1"/>
<line x1="1798.7" y1="722.9" x2="1994.0" y2="938.5" stroke-opacity="0.067" stroke-width="1"/>
<line x1="1994.0" y1="938.5" x2="2278.9" y2="1253.0" stroke-opacity="0.067" stroke-width="1"/>
<line x1="2278.9" y1="1253.0" x2="2733.5" y2="1755.1" stroke-opacity="0.067" stroke-width="1"/>
<line x1="2733.5" y1="1755.1" x2="3574.1" y2="2683.2" stroke-opacity="0.067" stroke-width="1"/>
<line x1="1266.7" y1="118.9" x2="1308.4" y2="163.6" stroke-opacity="0.012" stroke-width="1"/>
<line x1="1308.4" y1="163.6" x2="1357.4" y2="216.2" stroke-opacity="0.015" stroke-width="1"/>
<line x1="1357.4" y1="216.2" x2="1416.0" y2="278.9" stroke-opacity="0.026" stroke-width="1"/>
<line x1="1416.0" y1="278.9" x2="1487.1" y2="355.2" stroke-opacity="0.036" stroke-width="1"/>
<line x1="1487.1" y1="355.2" x2="1575.2" y2="449.7" stroke-opacity="0.047" stroke-width="1"/>
<line x1="1575.2" y1="449.7" x2="1687.5" y2="570.0" stroke-opacity="0.058" stroke-width="1"/>
<line x1="1687.5" y1="570.0" x2="1835.2" y2="728.4" stroke-opacity="0.067" stroke-width="1"/>
<line x1="1835.2" y1="728.4" x2="2038.4" y2="946.2" stroke-opacity="0.067" stroke-width="1"/>
<line x1="2038.4" y1="946.2" x2="2335.6" y2="1264.8" stroke-opacity="0.067" stroke-width="1"/>
<line x1="2335.6" y1="1264.8" x2="2811.5" y2="1775.0" stroke-opacity="0.067" stroke-width="1"/>
<line x1="2811.5" y1="1775.0" x2="3696.7" y2="2723.8" stroke-opacity="0.067" stroke-width="1"/>
<line x1="1282.8" y1="120.2" x2="1325.9" y2="165.1" stroke-opacity="0.012" stroke-width="1"/>
<line x1="1325.9" y1="165.1" x2="1376.7" y2="217.9" stroke-opacity="0.016" stroke-width="1"/>
<line x1="1376.7" y1="217.9" x2="1437.3" y2="281.0" stroke-opacity="0.026" stroke-width="1"/>
<line x1="1437.3" y1="281.0" x2="1510.9" y2="357.7" stroke-opacity="0.037" stroke-width="1"/>
<line x1="1510.9" y1="357.7" x2="1602.3" y2="452.9" stroke-opacity="0.047" stroke-width="1"/>
<line x1="1602.3" y1="452.9" x2="1718.7" y2="574.1" stroke-opacity="0.058" stroke-width="1"/>
<line x1="1718.7" y1="574.1" x2="1872.1" y2="733.9" stroke-opacity="0.067" stroke-width="1"/>
<line x1="1872.1" y1="733.9" x2="2083.4" y2="954.1" stroke-opacity="0.067" stroke-width="1"/>
<line x1="2083.4" y1="954.1" x2="2393.2" y2="1276.7" stroke-opacity="0.067" stroke-width="1"/>
<line x1="2393.2" y1="1276.7" x2="2891.0" y2="1795.2" stroke-opacity="0.067" stroke-width="1"/>
<line x1="2891.0" y1="1795.2" x2="3822.5" y2="2765.6" stroke-opacity="0.067" stroke-width="1"/>
<line x1="1299.1" y1="121.4" x2="1343.6" y2="166.5" stroke-opacity="0.012" stroke-width="1"/>
<line x1="1343.6" y1="166.5" x2="1396.0" y2="219.6" stroke-opacity="0.016" stroke-width="1"/>
<line x1="1396.0" y1="219.6" x2="1458.7" y2="283.1" stroke-opacity="0.027" stroke-width="1"/>
<line x1="1458.7" y1="283.1" x2="1534.9" y2="360.2" stroke-opacity="0.037" stroke-width="1"/>
<line x1="1534.9" y1="360.2" x2="1629.5" y2="456.1" stroke-opacity="0.048" stroke-width="1"/>
<line x1="1629.5" y1="456.1" x2="1750.1" y2="578.3" stroke-opacity="0.058" stroke-width="1"/>
<line x1="1750.1" y1="578.3" x2="1909.3" y2="739.5" stroke-opacity="0.067" stroke-width="1"/>
<line x1="1909.3" y1="739.5" x2="2128.9" y2="962.0" stroke-opacity="0.067" stroke-width="1"/>
<line x1="2128.9" y1="962.0" x2="2451.6" y2="1288.8" stroke-opacity="0.067" stroke-width="1"/>
<line x1="2451.6" y1="1288.8" x2="2971.9" y2="1815.9" stroke-opacity="0.067" stroke-width="1"/>
<line x1="2971.9" y1="1815.9" x2="3951.7" y2="2808.4" stroke-opacity="0.067" stroke-width="1"/>
<line x1="54.3" y1="61.1" x2="114.2" y2="66.0" stroke-opacity="0.012" stroke-width="1"/>
<line x1="114.2" y1="66.0" x2="175.3" y2="71.0" stroke-opacity="0.012" stroke-width="1"/>
<line x1="175.3" y1="71.0" x2="237.8" y2="76.1" stroke-opacity="0.012" stroke-width="1"/>
<line x1="237.8" y1="76.1" x2="301.6" y2="81.3" stroke-opacity="0.012" stroke-width="1"/>
<line x1="301.6" y1="81.3" x2="366.7" y2="86.6" stroke-opacity="0.012" stroke-width="1"/>
<line x1="366.7" y1="86.6" x2="433.3" y2="92.1" stroke-opacity="0.012" stroke-width="1"/>
<line x1="433.3" y1="92.1" x2="501.3" y2="97.6" stroke-opacity="0.012" stroke-width="1"/>
<line x1="501.3" y1="97.6" x2="570.8" y2="103.3" stroke-opacity="0.012" stroke-width="1"/>
<line x1="570.8" y1="103.3" x2="641.9" y2="109.1" stroke-opacity="0.012" stroke-width="1"/>
<line x1="641.9" y1="109.1" x2="714.6" y2="115.1" stroke-opacity="0.012" stroke-width="1"/>
<line x1="714.6" y1="115.1" x2="788.9" y2="121.1" stroke-opacity="0.012" stroke-width="1"/>
<line x1="788.9" y1="121.1" x2="865.0" y2="127.4" stroke-opacity="0.012" stroke-width="1"/>
<line x1="865.0" y1="127.4" x2="942.9" y2="133.7" stroke-opacity="0.012" stroke-width="1"/>
<line x1="942.9" y1="133.7" x2="1022.6" y2="140.3" stroke-opacity="0.012" stroke-width="1"/>
<line x1="1022.6" y1="140.3" x2="1104.2" y2="146.9" stroke-opacity="0.012" stroke-width="1"/>
<line x1="1104.2" y1="146.9" x2="1187.8" y2="153.8" stroke-opacity="0.012" stroke-width="1"/>
<line x1="1187.8" y1="153.8" x2="1273.5" y2="160.8" stroke-opacity="0.012" stroke-width="1"/>
<line x1="1273.5" y1="160.8" x2="1361.3" y2="167.9" stroke-opacity="0.012" stroke-width="1"/>
<line x1="44.8" y1="67.8" x2="105.5" y2="72.8" stroke-opacity="0.012" stroke-width="1"/>
<line x1="105.5" y1="72.8" x2="167.4" y2="77.9" stroke-opacity="0.012" stroke-width="1"/>
<line x1="167.4" y1="77.9" x2="230.6" y2="83.2" stroke-opacity="0.012" stroke-width="1"/>
<line x1="230.6" y1="83.2" x2="295.2" y2="88.5" stroke-opacity="0.012" stroke-width="1"/>
<line x1="295.2" y1="88.5" x2="361.2" y2="94.0" stroke-opacity="0.012" stroke-width="1"/>
<line x1="361.2" y1="94.0" x2="428.6" y2="99.6" stroke-opacity="0.012" stroke-width="1"/>
<line x1="428.6" y1="99.6" x2="497.6" y2="105.4" stroke-opacity="0.012" stroke-width="1"/>
<line x1="497.6" y1="105.4" x2="568.1" y2="111.2" stroke-opacity="0.012" stroke-width="1"/>
<line x1="568.1" y1="111.2" x2="640.2" y2="117.2" stroke-opacity="0.012" stroke-width="1"/>
<line x1="640.2" y1="117.2" x2="714.0" y2="123.3" stroke-opacity="0.012" stroke-width="1"/>
<line x1="714.0" y1="123.3" x2="789.5" y2="129.6" stroke-opacity="0.012" stroke-width="1"/>
<line x1="789.5" y1="129.6" x2="866.7" y2="136.0" stroke-opacity="0.012" stroke-width="1"/>
<line x1="866.7" y1="136.0" x2="945.8" y2="142.6" stroke-opacity="0.012" stroke-width="1"/>
<line x1="945.8" y1="142.6" x2="1026.8" y2="149.3" stroke-opacity="0.012" stroke-width="1"/>
<line x1="1026.8" y1="149.3" x2="1109.8" y2="156.2" stroke-opacity="0.012" stroke-width="1"/>
<line x1="1109.8" y1="156.2" x2="1194.9" y2="163.3" stroke-opacity="0.012" stroke-width="1"/>
<line x1="1194.9" y1="163.3" x2="1282.1" y2="170.5" stroke-opacity="0.012" stroke-width="1"/>
<line x1="1282.1" y1="170.5" x2="1371.4" y2="177.9" stroke-opacity="0.012" stroke-width="1"/>
<line x1="35.1" y1="74.6" x2="96.5" y2="79.8" stroke-opacity="0.012" stroke-width="1"/>
<line x1="96.5" y1="79.8" x2="159.2" y2="85.1" stroke-opacity="0.012" stroke-width="1"/>
<line x1="159.2" y1="85.1" x2="223.2" y2="90.5" stroke-opacity="0.012" stroke-width="1"/>
<line x1="223.2" y1="90.5" x2="288.6" y2="96.0" stroke-opacity="0.012" stroke-width="1"/>
<line x1="288.6" y1="96.0" x2="355.5" y2="101.6" stroke-opacity="0.012" stroke-width="1"/>
<line x1="355.5" y1="101.6" x2="423.9" y2="107.4" stroke-opacity="0.012" stroke-width="1"/>
<line x1="423.9" y1="107.4" x2="493.8" y2="113.3" stroke-opacity="0.012" stroke-width="1"/>
<line x1="493.8" y1="113.3" x2="565.3" y2="119.3" stroke-opacity="0.012" stroke-width="1"/>
<line x1="565.3" y1="119.3" x2="638.5" y2="125.5" stroke-opacity="0.012" stroke-width="1"/>
<line x1="638.5" y1="125.5" x2="713.4" y2="131.8" stroke-opacity="0.012" stroke-width="1"/>
<line x1="713.4" y1="131.8" x2="790.0" y2="138.3" stroke-opacity="0.012" stroke-width="1"/>
<line x1="790.0" y1="138.3" x2="868.5" y2="144.9" stroke-opacity="0.012" stroke-width="1"/>
<line x1="868.5" y1="144.9" x2="948.9" y2="151.7" stroke-opacity="0.012" stroke-width="1"/>
<line x1="948.9" y1="151.7" x2="1031.3" y2="158.6" stroke-opacity="0.012" stroke-width="1"/>
<line x1="1031.3" y1="158.6" x2="1115.6" y2="165.8" stroke-opacity="0.012" stroke-width="1"/>
<line x1="1115.6" y1="165.8" x2="1202.2" y2="173.1" stroke-opacity="0.012" stroke-width="1"/>
<line x1="1202.2" y1="173.1" x2="1290.9" y2="180.5" stroke-opacity="0.013" stroke-width="1"/>
<line x1="1290.9" y1="180.5" x2="1381.9" y2="188.2" stroke-opacity="0.015" stroke-width="1"/>
<line x1="25.1" y1="81.7" x2="87.3" y2="87.0" stroke-opacity="0.012" stroke-width="1"/>
<line x1="87.3" y1="87.0" x2="150.7" y2="92.4" stroke-opacity="0.012" stroke-width="1"/>
<line x1="150.7" y1="92.4" x2="215.6" y2="98.0" stroke-opacity="0.012" stroke-width="1"/>
<line x1="215.6" y1="98.0" x2="281.9" y2="103.7" stroke-opacity="0.012" stroke-width="1"/>
<line x1="281.9" y1="103.7" x2="349.7" y2="109.5" stroke-opacity="0.012" stroke-width="1"/>
<line x1="349.7" y1="109.5" x2="419.0" y2="115.4" stroke-opacity="0.012" stroke-width="1"/>
<line x1="419.0" y1="115.4" x2="489.9" y2="121.5" stroke-opacity="0.012" stroke-width="1"/>
<line x1="489.9" y1="121.5" x2="562.5" y2="127.7" stroke-opacity="0.012" stroke-width="1"/>
<line x1="562.5" y1="127.7" x2="636.7" y2="134.1" stroke-opacity="0.012" stroke-width="1"/>
<line x1="636.7" y1="134.1" x2="712.8" y2="140.6" stroke-opacity="0.012" stroke-width="1"/>
<line x1="712.8" y1="140.6" x2="790.6" y2="147.3" stroke-opacity="0.012" stroke-width="1"/>
<line x1="790.6" y1="147.3" x2="870.4" y2="154.1" stroke-opacity="0.012" stroke-width="1"/>
<line x1="870.4" y1="154.1" x2="952.1" y2="161.1" stroke-opacity="0.012" stroke-width="1"/>
<line x1="952.1" y1="161.1" x2="1035.8" y2="168.3" stroke-opacity="0.012" stroke-width="1"/>
<line x1="1035.8" y1="168.3" x2="1121.6" y2="175.6" stroke-opacity="0.012" stroke-width="1"/>
<line x1="1121.6" y1="175.6" x2="1209.7" y2="183.2" stroke-opacity="0.013" stroke-width="1"/>
<line x1="1209.7" y1="183.2" x2="1300.0" y2="190.9" stroke-opacity="0.015" stroke-width="1"/>
<line x1="1300.0" y1="190.9" x2="1392.7" y2="198.9" stroke-opacity="0.017" stroke-width="1"/>
<line x1="14.9" y1="88.9" x2="77.8" y2="94.4" stroke-opacity="0.012" stroke-width="1"/>
<line x1="77.8" y1="94.4" x2="142.0" y2="100.0" stroke-opacity="0.012" stroke-width="1"/>
<line x1="142.0" y1="100.0" x2="207.8" y2="105.7" stroke-opacity="0.012" stroke-width="1"/>
<line x1="207.8" y1="105.7" x2="275.0" y2="111.6" stroke-opacity="0.012" stroke-width="1"/>
<line x1="275.0" y1="111.6" x2="343.7" y2="117.5" stroke-opacity="0.012" stroke-width="1"/>
<line x1="343.7" y1="117.5" x2="414.0" y2="123.7" stroke-opacity="0.012" stroke-width="1"/>
<line x1="414.0" y1="123.7" x2="485.9" y2="129.9" stroke-opacity="0.012" stroke-width="1"/>
<line x1="485.9" y1="129.9" x2="559.5" y2="136.3" stroke-opacity="0.012" stroke-width="1"/>
<line x1="559.5" y1="136.3" x2="634.9" y2="142.9" stroke-opacity="0.012" stroke-width="1"/>
<line x1="634.9" y1="142.9" x2="712.1" y2="149.6" stroke-opacity="0.012" stroke-width="1"/>
<line x1="712.1" y1="149.6" x2="791.2" y2="156.5" stroke-opacity="0.012" stroke-width="1"/>
<line x1="791.2" y1="156.5" x2="872.3" y2="163.6" stroke-opacity="0.012" stroke-width="1"/>
<line x1="872.3" y1="163.6" x2="955.3" y2="170.8" stroke-opacity="0.012" stroke-width="1"/>
<line x1="955.3" y1="170.8" x2="1040.5" y2="178.2" stroke-opacity="0.012" stroke-width="1"/>
<line x1="1040.5" y1="178.2" x2="1127.9" y2="185.9" stroke-opacity="0.014" stroke-width="1"/>
<line x1="1127.9" y1="185.9" x2="1217.5" y2="193.7" stroke-opacity="0.016" stroke-width="1"/>
<line x1="1217.5" y1="193.7" x2="1309.5" y2="201.7" stroke-opacity="0.017" stroke-width="1"/>
<line x1="1309.5" y1="201.7" x2="1403.9" y2="209.9" stroke-opacity="0.019" stroke-width="1"/>
<line x1="-6.6" y1="104.0" x2="57.9" y2="109.8" stroke-opacity="0.012" stroke-width="1"/>
<line x1="57.9" y1="109.8" x2="123.9" y2="115.8" stroke-opacity="0.012" stroke-width="1"/>
<line x1="123.9" y1="115.8" x2="191.4" y2="121.8" stroke-opacity="0.012" stroke-width="1"/>
<line x1="191.4" y1="121.8" x2="260.4" y2="128.1" stroke-opacity="0.012" stroke-width="1"/>
<line x1="260.4" y1="128.1" x2="331.1" y2="134.4" stroke-opacity="0.012" stroke-width="1"/>
<line x1="331.1" y1="134.4" x2="403.4" y2="140.9" stroke-opacity="0.012" stroke-width="1"/>
<line x1="403.4" y1="140.9" x2="477.5" y2="147.6" stroke-opacity="0.012" stroke-width="1"/>
<line x1="477.5" y1="147.6" x2="553.4" y2="154.4" stroke-opacity="0.012" stroke-width="1"/>
<line x1="553.4" y1="154.4" x2="631.1" y2="161.4" stroke-opacity="0.012" stroke-width="1"/>
<line x1="631.1" y1="161.4" x2="710.8" y2="168.6" stroke-opacity="0.012" stroke-width="1"/>
<line x1="710.8" y1="168.6" x2="792.5" y2="176.0" stroke-opacity="0.012" stroke-width="1"/>
<line x1="792.5" y1="176.0" x2="876.3" y2="183.5" stroke-opacity="0.013" stroke-width="1"/>
<line x1="876.3" y1="183.5" x2="962.2" y2="191.3" stroke-opacity="0.015" stroke-width="1"/>
<line x1="962.2" y1="191.3" x2="1050.4" y2="199.2" stroke-opacity="0.017" stroke-width="1"/>
<line x1="1050.4" y1="199.2" x2="1140.9" y2="207.4" stroke-opacity="0.018" stroke-width="1"/>
<line x1="1140.9" y1="207.4" x2="1233.9" y2="215.7" stroke-opacity="0.020" stroke-width="1"/>
<line x1="1233.9" y1="215.7" x2="1329.4" y2="224.3" stroke-opacity="0.021" stroke-width="1"/>
<line x1="1329.4" y1="224.3" x2="1427.5" y2="233.2" stroke-opacity="0.023" stroke-width="1"/>
<line x1="-17.8" y1="111.9" x2="47.6" y2="117.9" stroke-opacity="0.012" stroke-width="1"/>
<line x1="47.6" y1="117.9" x2="114.4" y2="124.0" stroke-opacity="0.012" stroke-width="1"/>
<line x1="114.4" y1="124.0" x2="182.8" y2="130.3" stroke-opacity="0.012" stroke-width="1"/>
<line x1="182.8" y1="130.3" x2="252.8" y2="136.7" stroke-opacity="0.012" stroke-width="1"/>
<line x1="252.8" y1="136.7" x2="324.5" y2="143.3" stroke-opacity="0.012" stroke-width="1"/>
<line x1="324.5" y1="143.3" x2="397.9" y2="150.0" stroke-opacity="0.012" stroke-width="1"/>
<line x1="397.9" y1="150.0" x2="473.1" y2="156.9" stroke-opacity="0.012" stroke-width="1"/>
<line x1="473.1" y1="156.9" x2="550.2" y2="163.9" stroke-opacity="0.012" stroke-width="1"/>
<line x1="550.2" y1="163.9" x2="629.1" y2="171.2" stroke-opacity="0.012" stroke-width="1"/>
<line x1="629.1" y1="171.2" x2="710.1" y2="178.6" stroke-opacity="0.012" stroke-width="1"/>
<line x1="710.1" y1="178.6" x2="793.1" y2="186.2" stroke-opacity="0.014" stroke-width="1"/>
<line x1="793.1" y1="186.2" x2="878.4" y2="194.0" stroke-opacity="0.015" stroke-width="1"/>
<line x1="878.4" y1="194.0" x2="965.8" y2="202.0" stroke-opacity="0.017" stroke-width="1"/>
<line x1="965.8" y1="202.0" x2="1055.6" y2="210.2" stroke-opacity="0.019" stroke-width="1"/>
<line x1="1055.6" y1="210.2" x2="1147.8" y2="218.7" stroke-opacity="0.020" stroke-width="1"/>
<line x1="1147.8" y1="218.7" x2="1242.5" y2="227.4" stroke-opacity="0.022" stroke-width="1"/>
<line x1="1242.5" y1="227.4" x2="1339.9" y2="236.3" stroke-opacity="0.023" stroke-width="1"/>
<line x1="1339.9" y1="236.3" x2="1440.0" y2="245.4" stroke-opacity="0.025" stroke-width="1"/>
<line x1="-29.3" y1="120.0" x2="36.9" y2="126.2" stroke-opacity="0.012" stroke-width="1"/>
<line x1="36.9" y1="126.2" x2="104.7" y2="132.5" stroke-opacity="0.012" stroke-width="1"/>
<line x1="104.7" y1="132.5" x2="174.0" y2="139.0" stroke-opacity="0.012" stroke-width="1"/>
<line x1="174.0" y1="139.0" x2="245.0" y2="145.6" stroke-opacity="0.012" stroke-width="1"/>
<line x1="245.0" y1="145.6" x2="317.7" y2="152.4" stroke-opacity="0.012" stroke-width="1"/>
<line x1="317.7" y1="152.4" x2="392.2" y2="159.3" stroke-opacity="0.012" stroke-width="1"/>
<line x1="392.2" y1="159.3" x2="468.6" y2="166.4" stroke-opacity="0.012" stroke-width="1"/>
<line x1="468.6" y1="166.4" x2="546.8" y2="173.7" stroke-opacity="0.012" stroke-width="1"/>
<line x1="546.8" y1="173.7" x2="627.1" y2="181.2" stroke-opacity="0.013" stroke-width="1"/>
<line x1="627.1" y1="181.2" x2="709.4" y2="188.9" stroke-opacity="0.014" stroke-width="1"/>
<line x1="709.4" y1="188.9" x2="793.8" y2="196.8" stroke-opacity="0.016" stroke-width="1"/>
<line x1="793.8" y1="196.8" x2="880.5" y2="204.8" stroke-opacity="0.018" stroke-width="1"/>
<line x1="880.5" y1="204.8" x2="969.5" y2="213.1" stroke-opacity="0.019" stroke-width="1"/>
<line x1="969.5" y1="213.1" x2="1061.0" y2="221.7" stroke-opacity="0.021" stroke-width="1"/>
<line x1="1061.0" y1="221.7" x2="1154.9" y2="230.4" stroke-opacity="0.022" stroke-width="1"/>
<line x1="1154.9" y1="230.4" x2="1251.4" y2="239.4" stroke-opacity="0.024" stroke-width="1"/>
<line x1="1251.4" y1="239.4" x2="1350.7" y2="248.7" stroke-opacity="0.026" stroke-width="1"/>
<line x1="1350.7" y1="248.7" x2="1452.9" y2="258.2" stroke-opacity="0.027" stroke-width="1"/>
<line x1="-41.1" y1="128.4" x2="25.9" y2="134.8" stroke-opacity="0.012" stroke-width="1"/>
<line x1="25.9" y1="134.8" x2="94.6" y2="141.3" stroke-opacity="0.012" stroke-width="1"/>
<line x1="94.6" y1="141.3" x2="164.9" y2="147.9" stroke-opacity="0.012" stroke-width="1"/>
<line x1="164.9" y1="147.9" x2="236.9" y2="154.8" stroke-opacity="0.012" stroke-width="1"/>
<line x1="236.9" y1="154.8" x2="310.7" y2="161.8" stroke-opacity="0.012" stroke-width="1"/>
<line x1="310.7" y1="161.8" x2="386.3" y2="169.0" stroke-opacity="0.012" stroke-width="1"/>
<line x1="386.3" y1="169.0" x2="463.9" y2="176.3" stroke-opacity="0.012" stroke-width="1"/>
<line x1="463.9" y1="176.3" x2="543.4" y2="183.9" stroke-opacity="0.013" stroke-width="1"/>
<line x1="543.4" y1="183.9" x2="624.9" y2="191.6" stroke-opacity="0.015" stroke-width="1"/>
<line x1="624.9" y1="191.6" x2="708.6" y2="199.5" stroke-opacity="0.016" stroke-width="1"/>
<line x1="708.6" y1="199.5" x2="794.5" y2="207.7" stroke-opacity="0.018" stroke-width="1"/>
<line x1="794.5" y1="207.7" x2="882.8" y2="216.1" stroke-opacity="0.020" stroke-width="1"/>
<line x1="882.8" y1="216.1" x2="973.4" y2="224.7" stroke-opacity="0.021" stroke-width="1"/>
<line x1="973.4" y1="224.7" x2="1066.5" y2="233.5" stroke-opacity="0.023" stroke-width="1"/>
<line x1="1066.5" y1="233.5" x2="1162.3" y2="242.6" stroke-opacity="0.024" stroke-width="1"/>
<line x1="1162.3" y1="242.6" x2="1260.7" y2="251.9" stroke-opacity="0.026" stroke-width="1"/>
<line x1="1260.7" y1="251.9" x2="1362.0" y2="261.5" stroke-opacity="0.028" stroke-width="1"/>
<line x1="1362.0" y1="261.5" x2="1466.3" y2="271.4" stroke-opacity="0.029" stroke-width="1"/>
<line x1="-53.4" y1="137.0" x2="14.6" y2="143.6" stroke-opacity="0.012" stroke-width="1"/>
<line x1="14.6" y1="143.6" x2="84.2" y2="150.3" stroke-opacity="0.012" stroke-width="1"/>
<line x1="84.2" y1="150.3" x2="155.5" y2="157.2" stroke-opacity="0.012" stroke-width="1"/>
<line x1="155.5" y1="157.2" x2="228.6" y2="164.3" stroke-opacity="0.012" stroke-width="1"/>
<line x1="228.6" y1="164.3" x2="303.5" y2="171.5" stroke-opacity="0.012" stroke-width="1"/>
<line x1="303.5" y1="171.5" x2="380.3" y2="178.9" stroke-opacity="0.012" stroke-width="1"/>
<line x1="380.3" y1="178.9" x2="459.0" y2="186.5" stroke-opacity="0.014" stroke-width="1"/>
<line x1="459.0" y1="186.5" x2="539.8" y2="194.3" stroke-opacity="0.015" stroke-width="1"/>
<line x1="539.8" y1="194.3" x2="622.7" y2="202.3" stroke-opacity="0.017" stroke-width="1"/>
<line x1="622.7" y1="202.3" x2="707.9" y2="210.6" stroke-opacity="0.019" stroke-width="1"/>
<line x1="707.9" y1="210.6" x2="795.3" y2="219.0" stroke-opacity="0.020" stroke-width="1"/>
<line x1="795.3" y1="219.0" x2="885.1" y2="227.7" stroke-opacity="0.022" stroke-width="1"/>
<line x1="885.1" y1="227.7" x2="977.4" y2="236.6" stroke-opacity="0.023" stroke-width="1"/>
<line x1="977.4" y1="236.6" x2="1072.3" y2="245.8" stroke-opacity="0.025" stroke-width="1"/>
<line x1="1072.3" y1="245.8" x2="1169.9" y2="255.2" stroke-opacity="0.027" stroke-width="1"/>
<line x1="1169.9" y1="255.2" x2="1270.4" y2="264.9" stroke-opacity="0.028" stroke-width="1"/>
<line x1="1270.4" y1="264.9" x2="1373.8" y2="274.9" stroke-opacity="0.030" stroke-width="1"/>
<line x1="1373.8" y1="274.9" x2="1480.2" y2="285.2" stroke-opacity="0.031" stroke-width="1"/>
<line x1="-66.0" y1="145.9" x2="2.9" y2="152.7" stroke-opacity="0.012" stroke-width="1"/>
<line x1="2.9" y1="152.7" x2="73.5" y2="159.7" stroke-opacity="0.012" stroke-width="1"/>
<line x1="73.5" y1="159.7" x2="145.8" y2="166.8" stroke-opacity="0.012" stroke-width="1"/>
<line x1="145.8" y1="166.8" x2="220.0" y2="174.1" stroke-opacity="0.012" stroke-width="1"/>
<line x1="220.0" y1="174.1" x2="296.0" y2="181.5" stroke-opacity="0.013" stroke-width="1"/>
<line x1="296.0" y1="181.5" x2="374.0" y2="189.2" stroke-opacity="0.014" stroke-width="1"/>
<line x1="374.0" y1="189.2" x2="454.0" y2="197.1" stroke-opacity="0.016" stroke-width="1"/>
<line x1="454.0" y1="197.1" x2="536.1" y2="205.2" stroke-opacity="0.017" stroke-width="1"/>
<line x1="536.1" y1="205.2" x2="620.4" y2="213.5" stroke-opacity="0.019" stroke-width="1"/>
<line x1="620.4" y1="213.5" x2="707.1" y2="222.0" stroke-opacity="0.021" stroke-width="1"/>
<line x1="707.1" y1="222.0" x2="796.0" y2="230.7" stroke-opacity="0.022" stroke-width="1"/>
<line x1="796.0" y1="230.7" x2="887.5" y2="239.7" stroke-opacity="0.024" stroke-width="1"/>
<line x1="887.5" y1="239.7" x2="981.6" y2="249.0" stroke-opacity="0.025" stroke-width="1"/>
<line x1="981.6" y1="249.0" x2="1078.3" y2="258.5" stroke-opacity="0.027" stroke-width="1"/>
<line x1="1078.3" y1="258.5" x2="1177.9" y2="268.3" stroke-opacity="0.029" stroke-width="1"/>
<line x1="1177.9" y1="268.3" x2="1280.4" y2="278.4" stroke-opacity="0.030" stroke-width="1"/>
<line x1="1280.4" y1="278.4" x2="1385.9" y2="288.7" stroke-opacity="0.032" stroke-width="1"/>
<line x1="1385.9" y1="288.7" x2="1494.7" y2="299.4" stroke-opacity="0.033" stroke-width="1"/>
<line x1="-79.0" y1="155.1" x2="-9.2" y2="162.1" stroke-opacity="0.012" stroke-width="1"/>
<line x1="-9.2" y1="162.1" x2="62.4" y2="169.3" stroke-opacity="0.012" stroke-width="1"/>
<line x1="62.4" y1="169.3" x2="135.8" y2="176.6" stroke-opacity="0.012" stroke-width="1"/>
<line x1="135.8" y1="176.6" x2="211.1" y2="184.2" stroke-opacity="0.013" stroke-width="1"/>
<line x1="211.1" y1="184.2" x2="288.3" y2="191.9" stroke-opacity="0.015" stroke-width="1"/>
<line x1="288.3" y1="191.9" x2="367.5" y2="199.9" stroke-opacity="0.016" stroke-width="1"/>
<line x1="367.5" y1="199.9" x2="448.8" y2="208.0" stroke-opacity="0.018" stroke-width="1"/>
<line x1="448.8" y1="208.0" x2="532.3" y2="216.4" stroke-opacity="0.020" stroke-width="1"/>
<line x1="532.3" y1="216.4" x2="618.1" y2="225.0" stroke-opacity="0.021" stroke-width="1"/>
<line x1="618.1" y1="225.0" x2="706.2" y2="233.8" stroke-opacity="0.023" stroke-width="1"/>
<line x1="706.2" y1="233.8" x2="796.8" y2="242.9" stroke-opacity="0.024" stroke-width="1"/>
<line x1="796.8" y1="242.9" x2="890.0" y2="252.2" stroke-opacity="0.026" stroke-width="1"/>
<line x1="890.0" y1="252.2" x2="985.9" y2="261.8" stroke-opacity="0.028" stroke-width="1"/>
<line x1="985.9" y1="261.8" x2="1084.5" y2="271.7" stroke-opacity="0.029" stroke-width="1"/>
<line x1="1084.5" y1="271.7" x2="1186.1" y2="281.9" stroke-opacity="0.031" stroke-width="1"/>
<line x1="1186.1" y1="281.9" x2="1290.8" y2="292.4" stroke-opacity="0.032" stroke-width="1"/>
<line x1="1290.8" y1="292.4" x2="1398.6" y2="303.2" stroke-opacity="0.034" stroke-width="1"/>
<line x1="1398.6" y1="303.2" x2="1509.8" y2="314.3" stroke-opacity="0.036" stroke-width="1"/>
<line x1="-92.5" y1="164.6" x2="-21.6" y2="171.8" stroke-opacity="0.012" stroke-width="1"/>
<line x1="-21.6" y1="171.8" x2="51.0" y2="179.2" stroke-opacity="0.012" stroke-width="1"/>
<line x1="51.0" y1="179.2" x2="125.5" y2="186.9" stroke-opacity="0.014" stroke-width="1"/>
<line x1="125.5" y1="186.9" x2="201.9" y2="194.7" stroke-opacity="0.015" stroke-width="1"/>
<line x1="201.9" y1="194.7" x2="280.3" y2="202.7" stroke-opacity="0.017" stroke-width="1"/>
<line x1="280.3" y1="202.7" x2="360.8" y2="210.9" stroke-opacity="0.018" stroke-width="1"/>
<line x1="360.8" y1="210.9" x2="443.4" y2="219.3" stroke-opacity="0.020" stroke-width="1"/>
<line x1="443.4" y1="219.3" x2="528.4" y2="228.0" stroke-opacity="0.022" stroke-width="1"/>
<line x1="528.4" y1="228.0" x2="615.6" y2="236.9" stroke-opacity="0.023" stroke-width="1"/>
<line x1="615.6" y1="236.9" x2="705.4" y2="246.1" stroke-opacity="0.025" stroke-width="1"/>
<line x1="705.4" y1="246.1" x2="797.7" y2="255.5" stroke-opacity="0.026" stroke-width="1"/>
<line x1="797.7" y1="255.5" x2="892.6" y2="265.2" stroke-opacity="0.028" stroke-width="1"/>
<line x1="892.6" y1="265.2" x2="990.4" y2="275.2" stroke-opacity="0.030" stroke-width="1"/>
<line x1="990.4" y1="275.2" x2="1091.0" y2="285.4" stroke-opacity="0.031" stroke-width="1"/>
<line x1="1091.0" y1="285.4" x2="1194.7" y2="296.0" stroke-opacity="0.033" stroke-width="1"/>
<line x1="1194.7" y1="296.0" x2="1301.6" y2="306.9" stroke-opacity="0.034" stroke-width="1"/>
<line x1="1301.6" y1="306.9" x2="1411.8" y2="318.2" stroke-opacity="0.036" stroke-width="1"/>
<line x1="1411.8" y1="318.2" x2="1525.5" y2="329.8" stroke-opacity="0.038" stroke-width="1"/>
<line x1="-106.3" y1="174.4" x2="-34.5" y2="181.9" stroke-opacity="0.012" stroke-width="1"/>
<line x1="-34.5" y1="181.9" x2="39.2" y2="189.5" stroke-opacity="0.014" stroke-width="1"/>
<line x1="39.2" y1="189.5" x2="114.7" y2="197.4" stroke-opacity="0.016" stroke-width="1"/>
<line x1="114.7" y1="197.4" x2="192.3" y2="205.5" stroke-opacity="0.017" stroke-width="1"/>
<line x1="192.3" y1="205.5" x2="272.0" y2="213.8" stroke-opacity="0.019" stroke-width="1"/>
<line x1="272.0" y1="213.8" x2="353.8" y2="222.3" stroke-opacity="0.021" stroke-width="1"/>
<line x1="353.8" y1="222.3" x2="437.9" y2="231.0" stroke-opacity="0.022" stroke-width="1"/>
<line x1="437.9" y1="231.0" x2="524.3" y2="240.0" stroke-opacity="0.024" stroke-width="1"/>
<line x1="524.3" y1="240.0" x2="613.1" y2="249.3" stroke-opacity="0.025" stroke-width="1"/>
<line x1="613.1" y1="249.3" x2="704.5" y2="258.8" stroke-opacity="0.027" stroke-width="1"/>
<line x1="704.5" y1="258.8" x2="798.5" y2="268.6" stroke-opacity="0.029" stroke-width="1"/>
<line x1="798.5" y1="268.6" x2="895.3" y2="278.7" stroke-opacity="0.030" stroke-width="1"/>
<line x1="895.3" y1="278.7" x2="995.0" y2="289.0" stroke-opacity="0.032" stroke-width="1"/>
<line x1="995.0" y1="289.0" x2="1097.8" y2="299.7" stroke-opacity="0.033" stroke-width="1"/>
<line x1="1097.8" y1="299.7" x2="1203.7" y2="310.7" stroke-opacity="0.035" stroke-width="1"/>
<line x1="1203.7" y1="310.7" x2="1312.9" y2="322.1" stroke-opacity="0.037" stroke-width="1"/>
<line x1="1312.9" y1="322.1" x2="1425.6" y2="333.8" stroke-opacity="0.038" stroke-width="1"/>
<line x1="1425.6" y1="333.8" x2="1541.9" y2="346.0" stroke-opacity="0.040" stroke-width="1"/>
<line x1="-135.5" y1="195.0" x2="-61.6" y2="203.0" stroke-opacity="0.017" stroke-width="1"/>
<line x1="-61.6" y1="203.0" x2="14.3" y2="211.2" stroke-opacity="0.018" stroke-width="1"/>
<line x1="14.3" y1="211.2" x2="92.2" y2="219.6" stroke-opacity="0.020" stroke-width="1"/>
<line x1="92.2" y1="219.6" x2="172.3" y2="228.3" stroke-opacity="0.022" stroke-width="1"/>
<line x1="172.3" y1="228.3" x2="254.5" y2="237.2" stroke-opacity="0.023" stroke-width="1"/>
<line x1="254.5" y1="237.2" x2="339.1" y2="246.4" stroke-opacity="0.025" stroke-width="1"/>
<line x1="339.1" y1="246.4" x2="426.1" y2="255.8" stroke-opacity="0.026" stroke-width="1"/>
<line x1="426.1" y1="255.8" x2="515.6" y2="265.5" stroke-opacity="0.028" stroke-width="1"/>
<line x1="515.6" y1="265.5" x2="607.7" y2="275.5" stroke-opacity="0.030" stroke-width="1"/>
<line x1="607.7" y1="275.5" x2="702.6" y2="285.7" stroke-opacity="0.031" stroke-width="1"/>
<line x1="702.6" y1="285.7" x2="800.3" y2="296.3" stroke-opacity="0.033" stroke-width="1"/>
<line x1="800.3" y1="296.3" x2="901.0" y2="307.2" stroke-opacity="0.034" stroke-width="1"/>
<line x1="901.0" y1="307.2" x2="1004.9" y2="318.5" stroke-opacity="0.036" stroke-width="1"/>
<line x1="1004.9" y1="318.5" x2="1112.1" y2="330.1" stroke-opacity="0.038" stroke-width="1"/>
<line x1="1112.1" y1="330.1" x2="1222.6" y2="342.0" stroke-opacity="0.039" stroke-width="1"/>
<line x1="1222.6" y1="342.0" x2="1336.9" y2="354.4" stroke-opacity="0.041" stroke-width="1"/>
<line x1="1336.9" y1="354.4" x2="1454.8" y2="367.2" stroke-opacity="0.042" stroke-width="1"/>
<line x1="1454.8" y1="367.2" x2="1576.8" y2="380.4" stroke-opacity="0.044" stroke-width="1"/>
<line x1="-150.9" y1="205.8" x2="-75.9" y2="214.1" stroke-opacity="0.019" stroke-width="1"/>
<line x1="-75.9" y1="214.1" x2="1.2" y2="222.6" stroke-opacity="0.020" stroke-width="1"/>
<line x1="1.2" y1="222.6" x2="80.3" y2="231.4" stroke-opacity="0.022" stroke-width="1"/>
<line x1="80.3" y1="231.4" x2="161.7" y2="240.3" stroke-opacity="0.024" stroke-width="1"/>
<line x1="161.7" y1="240.3" x2="245.3" y2="249.6" stroke-opacity="0.025" stroke-width="1"/>
<line x1="245.3" y1="249.6" x2="331.3" y2="259.1" stroke-opacity="0.027" stroke-width="1"/>
<line x1="331.3" y1="259.1" x2="419.9" y2="268.9" stroke-opacity="0.028" stroke-width="1"/>
<line x1="419.9" y1="268.9" x2="511.0" y2="278.9" stroke-opacity="0.030" stroke-width="1"/>
<line x1="511.0" y1="278.9" x2="604.9" y2="289.3" stroke-opacity="0.032" stroke-width="1"/>
<line x1="604.9" y1="289.3" x2="701.6" y2="300.0" stroke-opacity="0.033" stroke-width="1"/>
<line x1="701.6" y1="300.0" x2="801.3" y2="311.0" stroke-opacity="0.035" stroke-width="1"/>
<line x1="801.3" y1="311.0" x2="904.1" y2="322.4" stroke-opacity="0.036" stroke-width="1"/>
<line x1="904.1" y1="322.4" x2="1010.2" y2="334.1" stroke-opacity="0.038" stroke-width="1"/>
<line x1="1010.2" y1="334.1" x2="1119.7" y2="346.2" stroke-opacity="0.040" stroke-width="1"/>
<line x1="1119.7" y1="346.2" x2="1232.8" y2="358.7" stroke-opacity="0.041" stroke-width="1"/>
<line x1="1232.8" y1="358.7" x2="1349.6" y2="371.6" stroke-opacity="0.043" stroke-width="1"/>
<line x1="1349.6" y1="371.6" x2="1470.5" y2="385.0" stroke-opacity="0.044" stroke-width="1"/>
<line x1="1470.5" y1="385.0" x2="1595.5" y2="398.8" stroke-opacity="0.046" stroke-width="1"/>
<line x1="-166.8" y1="217.0" x2="-90.6" y2="225.6" stroke-opacity="0.021" stroke-width="1"/>
<line x1="-90.6" y1="225.6" x2="-12.4" y2="234.4" stroke-opacity="0.023" stroke-width="1"/>
<line x1="-12.4" y1="234.4" x2="68.0" y2="243.5" stroke-opacity="0.024" stroke-width="1"/>
<line x1="68.0" y1="243.5" x2="150.7" y2="252.8" stroke-opacity="0.026" stroke-width="1"/>
<line x1="150.7" y1="252.8" x2="235.7" y2="262.4" stroke-opacity="0.027" stroke-width="1"/>
<line x1="235.7" y1="262.4" x2="323.3" y2="272.3" stroke-opacity="0.029" stroke-width="1"/>
<line x1="323.3" y1="272.3" x2="413.4" y2="282.5" stroke-opacity="0.031" stroke-width="1"/>
<line x1="413.4" y1="282.5" x2="506.2" y2="292.9" stroke-opacity="0.032" stroke-width="1"/>
<line x1="506.2" y1="292.9" x2="601.9" y2="303.7" stroke-opacity="0.034" stroke-width="1"/>
<line x1="601.9" y1="303.7" x2="700.5" y2="314.9" stroke-opacity="0.035" stroke-width="1"/>
<line x1="700.5" y1="314.9" x2="802.3" y2="326.3" stroke-opacity="0.037" stroke-width="1"/>
<line x1="802.3" y1="326.3" x2="907.2" y2="338.2" stroke-opacity="0.039" stroke-width="1"/>
<line x1="907.2" y1="338.2" x2="1015.6" y2="350.4" stroke-opacity="0.040" stroke-width="1"/>
<line x1="1015.6" y1="350.4" x2="1127.6" y2="363.0" stroke-opacity="0.042" stroke-width="1"/>
<line x1="1127.6" y1="363.0" x2="1243.3" y2="376.1" stroke-opacity="0.043" stroke-width="1"/>
<line x1="1243.3" y1="376.1" x2="1363.0" y2="389.6" stroke-opacity="0.045" stroke-width="1"/>
<line x1="1363.0" y1="389.6" x2="1486.8" y2="403.6" stroke-opacity="0.047" stroke-width="1"/>
<line x1="1486.8" y1="403.6" x2="1615.0" y2="418.0" stroke-opacity="0.048" stroke-width="1"/>
<line x1="-183.2" y1="228.6" x2="-105.9" y2="237.5" stroke-opacity="0.023" stroke-width="1"/>
<line x1="-105.9" y1="237.5" x2="-26.5" y2="246.7" stroke-opacity="0.025" stroke-width="1"/>
<line x1="-26.5" y1="246.7" x2="55.2" y2="256.1" stroke-opacity="0.026" stroke-width="1"/>
<line x1="55.2" y1="256.1" x2="139.3" y2="265.8" stroke-opacity="0.028" stroke-width="1"/>
<line x1="139.3" y1="265.8" x2="225.8" y2="275.7" stroke-opacity="0.029" stroke-width="1"/>
<line x1="225.8" y1="275.7" x2="314.9" y2="286.0" stroke-opacity="0.031" stroke-width="1"/>
<line x1="314.9" y1="286.0" x2="406.7" y2="296.6" stroke-opacity="0.033" stroke-width="1"/>
<line x1="406.7" y1="296.6" x2="501.3" y2="307.5" stroke-opacity="0.034" stroke-width="1"/>
<line x1="501.3" y1="307.5" x2="598.8" y2="318.7" stroke-opacity="0.036" stroke-width="1"/>
<line x1="598.8" y1="318.7" x2="699.5" y2="330.3" stroke-opacity="0.037" stroke-width="1"/>
<line x1="699.5" y1="330.3" x2="803.3" y2="342.3" stroke-opacity="0.039" stroke-width="1"/>
<line x1="803.3" y1="342.3" x2="910.5" y2="354.6" stroke-opacity="0.041" stroke-width="1"/>
<line x1="910.5" y1="354.6" x2="1021.3" y2="367.4" stroke-opacity="0.042" stroke-width="1"/>
<line x1="1021.3" y1="367.4" x2="1135.9" y2="380.6" stroke-opacity="0.044" stroke-width="1"/>
<line x1="1135.9" y1="380.6" x2="1254.3" y2="394.3" stroke-opacity="0.045" stroke-width="1"/>
<line x1="1254.3" y1="394.3" x2="1376.9" y2="408.4" stroke-opacity="0.047" stroke-width="1"/>
<line x1="1376.9" y1="408.4" x2="1503.9" y2="423.0" stroke-opacity="0.049" stroke-width="1"/>
<line x1="1503.9" y1="423.0" x2="1635.4" y2="438.2" stroke-opacity="0.050" stroke-width="1"/>
<line x1="-200.3" y1="240.6" x2="-121.8" y2="249.9" stroke-opacity="0.025" stroke-width="1"/>
<line x1="-121.8" y1="249.9" x2="-41.1" y2="259.4" stroke-opacity="0.027" stroke-width="1"/>
<line x1="-41.1" y1="259.4" x2="42.0" y2="269.2" stroke-opacity="0.028" stroke-width="1"/>
<line x1="42.0" y1="269.2" x2="127.5" y2="279.2" stroke-opacity="0.030" stroke-width="1"/>
<line x1="127.5" y1="279.2" x2="215.5" y2="289.6" stroke-opacity="0.032" stroke-width="1"/>
<line x1="215.5" y1="289.6" x2="306.2" y2="300.3" stroke-opacity="0.033" stroke-width="1"/>
<line x1="306.2" y1="300.3" x2="399.7" y2="311.3" stroke-opacity="0.035" stroke-width="1"/>
<line x1="399.7" y1="311.3" x2="496.1" y2="322.6" stroke-opacity="0.036" stroke-width="1"/>
<line x1="496.1" y1="322.6" x2="595.6" y2="334.4" stroke-opacity="0.038" stroke-width="1"/>
<line x1="595.6" y1="334.4" x2="698.3" y2="346.4" stroke-opacity="0.040" stroke-width="1"/>
<line x1="698.3" y1="346.4" x2="804.4" y2="358.9" stroke-opacity="0.041" stroke-width="1"/>
<line x1="804.4" y1="358.9" x2="914.0" y2="371.8" stroke-opacity="0.043" stroke-width="1"/>
<line x1="914.0" y1="371.8" x2="1027.3" y2="385.2" stroke-opacity="0.044" stroke-width="1"/>
<line x1="1027.3" y1="385.2" x2="1144.5" y2="399.0" stroke-opacity="0.046" stroke-width="1"/>
<line x1="1144.5" y1="399.0" x2="1265.9" y2="413.3" stroke-opacity="0.048" stroke-width="1"/>
<line x1="1265.9" y1="413.3" x2="1391.6" y2="428.1" stroke-opacity="0.049" stroke-width="1"/>
<line x1="1391.6" y1="428.1" x2="1521.8" y2="443.4" stroke-opacity="0.051" stroke-width="1"/>
<line x1="1521.8" y1="443.4" x2="1656.9" y2="459.3" stroke-opacity="0.052" stroke-width="1"/>
<line x1="-217.9" y1="253.1" x2="-138.3" y2="262.7" stroke-opacity="0.027" stroke-width="1"/>
<line x1="-138.3" y1="262.7" x2="-56.2" y2="272.6" stroke-opacity="0.029" stroke-width="1"/>
<line x1="-56.2" y1="272.6" x2="28.2" y2="282.7" stroke-opacity="0.030" stroke-width="1"/>
<line x1="28.2" y1="282.7" x2="115.1" y2="293.2" stroke-opacity="0.032" stroke-width="1"/>
<line x1="115.1" y1="293.2" x2="204.8" y2="304.0" stroke-opacity="0.034" stroke-width="1"/>
<line x1="204.8" y1="304.0" x2="297.1" y2="315.1" stroke-opacity="0.035" stroke-width="1"/>
<line x1="297.1" y1="315.1" x2="392.4" y2="326.6" stroke-opacity="0.037" stroke-width="1"/>
<line x1="392.4" y1="326.6" x2="490.8" y2="338.4" stroke-opacity="0.038" stroke-width="1"/>
<line x1="490.8" y1="338.4" x2="592.3" y2="350.6" stroke-opacity="0.040" stroke-width="1"/>
<line x1="592.3" y1="350.6" x2="697.1" y2="363.3" stroke-opacity="0.042" stroke-width="1"/>
<line x1="697.1" y1="363.3" x2="805.5" y2="376.3" stroke-opacity="0.043" stroke-width="1"/>
<line x1="805.5" y1="376.3" x2="917.6" y2="389.8" stroke-opacity="0.045" stroke-width="1"/>
<line x1="917.6" y1="389.8" x2="1033.5" y2="403.7" stroke-opacity="0.046" stroke-width="1"/>
<line x1="1033.5" y1="403.7" x2="1153.6" y2="418.2" stroke-opacity="0.048" stroke-width="1"/>
<line x1="1153.6" y1="418.2" x2="1278.0" y2="433.2" stroke-opacity="0.050" stroke-width="1"/>
<line x1="1278.0" y1="433.2" x2="1406.9" y2="448.7" stroke-opacity="0.051" stroke-width="1"/>
<line x1="1406.9" y1="448.7" x2="1540.6" y2="464.8" stroke-opacity="0.053" stroke-width="1"/>
<line x1="1540.6" y1="464.8" x2="1679.4" y2="481.5" stroke-opacity="0.055" stroke-width="1"/>
<line x1="-236.3" y1="266.1" x2="-155.3" y2="276.0" stroke-opacity="0.029" stroke-width="1"/>
<line x1="-155.3" y1="276.0" x2="-72.0" y2="286.3" stroke-opacity="0.031" stroke-width="1"/>
<line x1="-72.0" y1="286.3" x2="13.9" y2="296.9" stroke-opacity="0.033" stroke-width="1"/>
<line x1="13.9" y1="296.9" x2="102.4" y2="307.8" stroke-opacity="0.034" stroke-width="1"/>
<line x1="102.4" y1="307.8" x2="193.6" y2="319.0" stroke-opacity="0.036" stroke-width="1"/>
<line x1="193.6" y1="319.0" x2="287.7" y2="330.6" stroke-opacity="0.037" stroke-width="1"/>
<line x1="287.7" y1="330.6" x2="384.9" y2="342.5" stroke-opacity="0.039" stroke-width="1"/>
<line x1="384.9" y1="342.5" x2="485.2" y2="354.9" stroke-opacity="0.041" stroke-width="1"/>
<line x1="485.2" y1="354.9" x2="588.8" y2="367.6" stroke-opacity="0.042" stroke-width="1"/>
<line x1="588.8" y1="367.6" x2="695.9" y2="380.8" stroke-opacity="0.044" stroke-width="1"/>
<line x1="695.9" y1="380.8" x2="806.7" y2="394.5" stroke-opacity="0.045" stroke-width="1"/>
<line x1="806.7" y1="394.5" x2="921.3" y2="408.6" stroke-opacity="0.047" stroke-width="1"/>
<line x1="921.3" y1="408.6" x2="1040.1" y2="423.2" stroke-opacity="0.049" stroke-width="1"/>
<line x1="1040.1" y1="423.2" x2="1163.1" y2="438.3" stroke-opacity="0.050" stroke-width="1"/>
<line x1="1163.1" y1="438.3" x2="1290.6" y2="454.0" stroke-opacity="0.052" stroke-width="1"/>
<line x1="1290.6" y1="454.0" x2="1422.9" y2="470.3" stroke-opacity="0.053" stroke-width="1"/>
<line x1="1422.9" y1="470.3" x2="1560.3" y2="487.2" stroke-opacity="0.055" stroke-width="1"/>
<line x1="1560.3" y1="487.2" x2="1703.0" y2="504.8" stroke-opacity="0.057" stroke-width="1"/>
<line x1="-255.4" y1="279.5" x2="-173.1" y2="289.9" stroke-opacity="0.031" stroke-width="1"/>
<line x1="-173.1" y1="289.9" x2="-88.4" y2="300.6" stroke-opacity="0.033" stroke-width="1"/>
<line x1="-88.4" y1="300.6" x2="-1.0" y2="311.6" stroke-opacity="0.035" stroke-width="1"/>
<line x1="-1.0" y1="311.6" x2="89.0" y2="322.9" stroke-opacity="0.036" stroke-width="1"/>
<line x1="89.0" y1="322.9" x2="182.0" y2="334.6" stroke-opacity="0.038" stroke-width="1"/>
<line x1="182.0" y1="334.6" x2="277.9" y2="346.7" stroke-opacity="0.039" stroke-width="1"/>
<line x1="277.9" y1="346.7" x2="376.9" y2="359.2" stroke-opacity="0.041" stroke-width="1"/>
<line x1="376.9" y1="359.2" x2="479.3" y2="372.1" stroke-opacity="0.043" stroke-width="1"/>
<line x1="479.3" y1="372.1" x2="585.1" y2="385.4" stroke-opacity="0.044" stroke-width="1"/>
<line x1="585.1" y1="385.4" x2="694.6" y2="399.2" stroke-opacity="0.046" stroke-width="1"/>
<line x1="694.6" y1="399.2" x2="807.9" y2="413.5" stroke-opacity="0.047" stroke-width="1"/>
<line x1="807.9" y1="413.5" x2="925.3" y2="428.2" stroke-opacity="0.049" stroke-width="1"/>
<line x1="925.3" y1="428.2" x2="1046.9" y2="443.6" stroke-opacity="0.051" stroke-width="1"/>
<line x1="1046.9" y1="443.6" x2="1173.0" y2="459.4" stroke-opacity="0.052" stroke-width="1"/>
<line x1="1173.0" y1="459.4" x2="1303.9" y2="475.9" stroke-opacity="0.054" stroke-width="1"/>
<line x1="1303.9" y1="475.9" x2="1439.8" y2="493.0" stroke-opacity="0.056" stroke-width="1"/>
<line x1="1439.8" y1="493.0" x2="1581.0" y2="510.8" stroke-opacity="0.057" stroke-width="1"/>
<line x1="1581.0" y1="510.8" x2="1727.9" y2="529.3" stroke-opacity="0.059" stroke-width="1"/>
<line x1="-275.2" y1="293.5" x2="-191.6" y2="304.3" stroke-opacity="0.034" stroke-width="1"/>
<line x1="-191.6" y1="304.3" x2="-105.4" y2="315.4" stroke-opacity="0.035" stroke-width="1"/>
<line x1="-105.4" y1="315.4" x2="-16.5" y2="326.8" stroke-opacity="0.037" stroke-width="1"/>
<line x1="-16.5" y1="326.8" x2="75.2" y2="338.7" stroke-opacity="0.038" stroke-width="1"/>
<line x1="75.2" y1="338.7" x2="169.8" y2="350.9" stroke-opacity="0.040" stroke-width="1"/>
<line x1="169.8" y1="350.9" x2="267.6" y2="363.5" stroke-opacity="0.042" stroke-width="1"/>
<line x1="267.6" y1="363.5" x2="368.7" y2="376.5" stroke-opacity="0.043" stroke-width="1"/>
<line x1="368.7" y1="376.5" x2="473.2" y2="390.0" stroke-opacity="0.045" stroke-width="1"/>
<line x1="473.2" y1="390.0" x2="581.3" y2="403.9" stroke-opacity="0.046" stroke-width="1"/>
<line x1="581.3" y1="403.9" x2="693.3" y2="418.4" stroke-opacity="0.048" stroke-width="1"/>
<line x1="693.3" y1="418.4" x2="809.2" y2="433.3" stroke-opacity="0.050" stroke-width="1"/>
<line x1="809.2" y1="433.3" x2="929.4" y2="448.8" stroke-opacity="0.051" stroke-width="1"/>
<line x1="929.4" y1="448.8" x2="1054.1" y2="464.9" stroke-opacity="0.053" stroke-width="1"/>
<line x1="1054.1" y1="464.9" x2="1183.5" y2="481.6" stroke-opacity="0.054" stroke-width="1"/>
<line x1="1183.5" y1="481.6" x2="1317.9" y2="498.9" stroke-opacity="0.056" stroke-width="1"/>
<line x1="1317.9" y1="498.9" x2="1457.6" y2="516.9" stroke-opacity="0.058" stroke-width="1"/>
<line x1="1457.6" y1="516.9" x2="1602.9" y2="535.7" stroke-opacity="0.059" stroke-width="1"/>
<line x1="1602.9" y1="535.7" x2="1754.2" y2="555.2" stroke-opacity="0.061" stroke-width="1"/>
<line x1="-317.2" y1="323.2" x2="-230.8" y2="334.9" stroke-opacity="0.038" stroke-width="1"/>
<line x1="-230.8" y1="334.9" x2="-141.7" y2="346.9" stroke-opacity="0.039" stroke-width="1"/>
<line x1="-141.7" y1="346.9" x2="-49.6" y2="359.4" stroke-opacity="0.041" stroke-width="1"/>
<line x1="-49.6" y1="359.4" x2="45.6" y2="372.3" stroke-opacity="0.043" stroke-width="1"/>
<line x1="45.6" y1="372.3" x2="144.0" y2="385.6" stroke-opacity="0.044" stroke-width="1"/>
<line x1="144.0" y1="385.6" x2="245.7" y2="399.4" stroke-opacity="0.046" stroke-width="1"/>
<line x1="245.7" y1="399.4" x2="351.1" y2="413.6" stroke-opacity="0.047" stroke-width="1"/>
<line x1="351.1" y1="413.6" x2="460.1" y2="428.4" stroke-opacity="0.049" stroke-width="1"/>
<line x1="460.1" y1="428.4" x2="573.2" y2="443.7" stroke-opacity="0.051" stroke-width="1"/>
<line x1="573.2" y1="443.7" x2="690.4" y2="459.6" stroke-opacity="0.052" stroke-width="1"/>
<line x1="690.4" y1="459.6" x2="812.0" y2="476.0" stroke-opacity="0.054" stroke-width="1"/>
<line x1="812.0" y1="476.0" x2="938.3" y2="493.1" stroke-opacity="0.055" stroke-width="1"/>
<line x1="938.3" y1="493.1" x2="1069.5" y2="510.9" stroke-opacity="0.057" stroke-width="1"/>
<line x1="1069.5" y1="510.9" x2="1206.0" y2="529.4" stroke-opacity="0.059" stroke-width="1"/>
<line x1="1206.0" y1="529.4" x2="1348.0" y2="548.6" stroke-opacity="0.060" stroke-width="1"/>
<line x1="1348.0" y1="548.6" x2="1496.0" y2="568.7" stroke-opacity="0.062" stroke-width="1"/>
<line x1="1496.0" y1="568.7" x2="1650.2" y2="589.5" stroke-opacity="0.063" stroke-width="1"/>
<line x1="1650.2" y1="589.5" x2="1811.1" y2="611.3" stroke-opacity="0.065" stroke-width="1"/>
<line x1="-339.6" y1="338.9" x2="-251.7" y2="351.1" stroke-opacity="0.040" stroke-width="1"/>
<line x1="-251.7" y1="351.1" x2="-160.9" y2="363.7" stroke-opacity="0.041" stroke-width="1"/>
<line x1="-160.9" y1="363.7" x2="-67.2" y2="376.7" stroke-opacity="0.043" stroke-width="1"/>
<line x1="-67.2" y1="376.7" x2="29.8" y2="390.2" stroke-opacity="0.045" stroke-width="1"/>
<line x1="29.8" y1="390.2" x2="130.2" y2="404.1" stroke-opacity="0.046" stroke-width="1"/>
<line x1="130.2" y1="404.1" x2="234.0" y2="418.6" stroke-opacity="0.048" stroke-width="1"/>
<line x1="234.0" y1="418.6" x2="341.6" y2="433.5" stroke-opacity="0.049" stroke-width="1"/>
<line x1="341.6" y1="433.5" x2="453.1" y2="449.0" stroke-opacity="0.051" stroke-width="1"/>
<line x1="453.1" y1="449.0" x2="568.8" y2="465.0" stroke-opacity="0.053" stroke-width="1"/>
<line x1="568.8" y1="465.0" x2="688.8" y2="481.7" stroke-opacity="0.054" stroke-width="1"/>
<line x1="688.8" y1="481.7" x2="813.5" y2="499.0" stroke-opacity="0.056" stroke-width="1"/>
<line x1="813.5" y1="499.0" x2="943.1" y2="517.0" stroke-opacity="0.058" stroke-width="1"/>
<line x1="943.1" y1="517.0" x2="1077.9" y2="535.7" stroke-opacity="0.059" stroke-width="1"/>
<line x1="1077.9" y1="535.7" x2="1218.2" y2="555.2" stroke-opacity="0.061" stroke-width="1"/>
<line x1="1218.2" y1="555.2" x2="1364.4" y2="575.5" stroke-opacity="0.062" stroke-width="1"/>
<line x1="1364.4" y1="575.5" x2="1516.8" y2="596.7" stroke-opacity="0.064" stroke-width="1"/>
<line x1="1516.8" y1="596.7" x2="1675.9" y2="618.8" stroke-opacity="0.066" stroke-width="1"/>
<line x1="1675.9" y1="618.8" x2="1842.1" y2="641.8" stroke-opacity="0.067" stroke-width="1"/>
<line x1="-362.9" y1="355.4" x2="-273.5" y2="368.1" stroke-opacity="0.042" stroke-width="1"/>
<line x1="-273.5" y1="368.1" x2="-181.1" y2="381.3" stroke-opacity="0.044" stroke-width="1"/>
<line x1="-181.1" y1="381.3" x2="-85.5" y2="394.9" stroke-opacity="0.045" stroke-width="1"/>
<line x1="-85.5" y1="394.9" x2="13.3" y2="409.0" stroke-opacity="0.047" stroke-width="1"/>
<line x1="13.3" y1="409.0" x2="115.7" y2="423.5" stroke-opacity="0.048" stroke-width="1"/>
<line x1="115.7" y1="423.5" x2="221.8" y2="438.7" stroke-opacity="0.050" stroke-width="1"/>
<line x1="221.8" y1="438.7" x2="331.7" y2="454.3" stroke-opacity="0.052" stroke-width="1"/>
<line x1="331.7" y1="454.3" x2="445.8" y2="470.6" stroke-opacity="0.053" stroke-width="1"/>
<line x1="445.8" y1="470.6" x2="564.2" y2="487.4" stroke-opacity="0.055" stroke-width="1"/>
<line x1="564.2" y1="487.4" x2="687.2" y2="505.0" stroke-opacity="0.056" stroke-width="1"/>
<line x1="687.2" y1="505.0" x2="815.1" y2="523.2" stroke-opacity="0.058" stroke-width="1"/>
<line x1="815.1" y1="523.2" x2="948.1" y2="542.2" stroke-opacity="0.060" stroke-width="1"/>
<line x1="948.1" y1="542.2" x2="1086.7" y2="561.9" stroke-opacity="0.061" stroke-width="1"/>
<line x1="1086.7" y1="561.9" x2="1231.0" y2="582.5" stroke-opacity="0.063" stroke-width="1"/>
<line x1="1231.0" y1="582.5" x2="1381.6" y2="603.9" stroke-opacity="0.064" stroke-width="1"/>
<line x1="1381.6" y1="603.9" x2="1538.8" y2="626.3" stroke-opacity="0.066" stroke-width="1"/>
<line x1="1538.8" y1="626.3" x2="1703.1" y2="649.7" stroke-opacity="0.067" stroke-width="1"/>
<line x1="1703.1" y1="649.7" x2="1874.9" y2="674.2" stroke-opacity="0.067" stroke-width="1"/>
<line x1="-387.2" y1="372.5" x2="-296.2" y2="385.8" stroke-opacity="0.044" stroke-width="1"/>
<line x1="-296.2" y1="385.8" x2="-202.1" y2="399.6" stroke-opacity="0.046" stroke-width="1"/>
<line x1="-202.1" y1="399.6" x2="-104.8" y2="413.8" stroke-opacity="0.047" stroke-width="1"/>
<line x1="-104.8" y1="413.8" x2="-3.9" y2="428.6" stroke-opacity="0.049" stroke-width="1"/>
<line x1="-3.9" y1="428.6" x2="100.6" y2="443.9" stroke-opacity="0.050" stroke-width="1"/>
<line x1="100.6" y1="443.9" x2="208.9" y2="459.7" stroke-opacity="0.052" stroke-width="1"/>
<line x1="208.9" y1="459.7" x2="321.3" y2="476.2" stroke-opacity="0.054" stroke-width="1"/>
<line x1="321.3" y1="476.2" x2="438.1" y2="493.3" stroke-opacity="0.055" stroke-width="1"/>
<line x1="438.1" y1="493.3" x2="559.3" y2="511.0" stroke-opacity="0.057" stroke-width="1"/>
<line x1="559.3" y1="511.0" x2="685.5" y2="529.5" stroke-opacity="0.059" stroke-width="1"/>
<line x1="685.5" y1="529.5" x2="816.7" y2="548.7" stroke-opacity="0.060" stroke-width="1"/>
<line x1="816.7" y1="548.7" x2="953.4" y2="568.7" stroke-opacity="0.062" stroke-width="1"/>
<line x1="953.4" y1="568.7" x2="1095.9" y2="589.5" stroke-opacity="0.063" stroke-width="1"/>
<line x1="1095.9" y1="589.5" x2="1244.6" y2="611.3" stroke-opacity="0.065" stroke-width="1"/>
<line x1="1244.6" y1="611.3" x2="1399.8" y2="634.0" stroke-opacity="0.067" stroke-width="1"/>
<line x1="1399.8" y1="634.0" x2="1562.1" y2="657.7" stroke-opacity="0.067" stroke-width="1"/>
<line x1="1562.1" y1="657.7" x2="1731.9" y2="682.6" stroke-opacity="0.067" stroke-width="1"/>
<line x1="1731.9" y1="682.6" x2="1909.8" y2="708.6" stroke-opacity="0.067" stroke-width="1"/>
<line x1="-412.6" y1="390.4" x2="-320.0" y2="404.3" stroke-opacity="0.046" stroke-width="1"/>
<line x1="-320.0" y1="404.3" x2="-224.2" y2="418.7" stroke-opacity="0.048" stroke-width="1"/>
<line x1="-224.2" y1="418.7" x2="-124.9" y2="433.7" stroke-opacity="0.049" stroke-width="1"/>
<line x1="-124.9" y1="433.7" x2="-22.0" y2="449.1" stroke-opacity="0.051" stroke-width="1"/>
<line x1="-22.0" y1="449.1" x2="84.7" y2="465.2" stroke-opacity="0.053" stroke-width="1"/>
<line x1="84.7" y1="465.2" x2="195.4" y2="481.8" stroke-opacity="0.054" stroke-width="1"/>
<line x1="195.4" y1="481.8" x2="310.4" y2="499.1" stroke-opacity="0.056" stroke-width="1"/>
<line x1="310.4" y1="499.1" x2="429.9" y2="517.1" stroke-opacity="0.057" stroke-width="1"/>
<line x1="429.9" y1="517.1" x2="554.3" y2="535.8" stroke-opacity="0.059" stroke-width="1"/>
<line x1="554.3" y1="535.8" x2="683.7" y2="555.2" stroke-opacity="0.061" stroke-width="1"/>
<line x1="683.7" y1="555.2" x2="818.5" y2="575.5" stroke-opacity="0.062" stroke-width="1"/>
<line x1="818.5" y1="575.5" x2="959.0" y2="596.6" stroke-opacity="0.064" stroke-width="1"/>
<line x1="959.0" y1="596.6" x2="1105.7" y2="618.7" stroke-opacity="0.065" stroke-width="1"/>
<line x1="1105.7" y1="618.7" x2="1259.0" y2="641.7" stroke-opacity="0.067" stroke-width="1"/>
<line x1="1259.0" y1="641.7" x2="1419.2" y2="665.8" stroke-opacity="0.067" stroke-width="1"/>
<line x1="1419.2" y1="665.8" x2="1586.9" y2="691.0" stroke-opacity="0.067" stroke-width="1"/>
<line x1="1586.9" y1="691.0" x2="1762.6" y2="717.5" stroke-opacity="0.067" stroke-width="1"/>
<line x1="1762.6" y1="717.5" x2="1946.9" y2="745.2" stroke-opacity="0.067" stroke-width="1"/>
<line x1="-439.1" y1="409.1" x2="-344.9" y2="423.7" stroke-opacity="0.048" stroke-width="1"/>
<line x1="-344.9" y1="423.7" x2="-247.2" y2="438.8" stroke-opacity="0.050" stroke-width="1"/>
<line x1="-247.2" y1="438.8" x2="-146.0" y2="454.5" stroke-opacity="0.051" stroke-width="1"/>
<line x1="-146.0" y1="454.5" x2="-41.0" y2="470.7" stroke-opacity="0.053" stroke-width="1"/>
<line x1="-41.0" y1="470.7" x2="68.0" y2="487.6" stroke-opacity="0.055" stroke-width="1"/>
<line x1="68.0" y1="487.6" x2="181.2" y2="505.1" stroke-opacity="0.056" stroke-width="1"/>
<line x1="181.2" y1="505.1" x2="298.9" y2="523.3" stroke-opacity="0.058" stroke-width="1"/>
<line x1="298.9" y1="523.3" x2="421.4" y2="542.2" stroke-opacity="0.060" stroke-width="1"/>
<line x1="421.4" y1="542.2" x2="548.9" y2="561.9" stroke-opacity="0.061" stroke-width="1"/>
<line x1="548.9" y1="561.9" x2="681.8" y2="582.5" stroke-opacity="0.063" stroke-width="1"/>
<line x1="681.8" y1="582.5" x2="820.3" y2="603.9" stroke-opacity="0.064" stroke-width="1"/>
<line x1="820.3" y1="603.9" x2="965.0" y2="626.2" stroke-opacity="0.066" stroke-width="1"/>
<line x1="965.0" y1="626.2" x2="1116.1" y2="649.6" stroke-opacity="0.067" stroke-width="1"/>
<line x1="1116.1" y1="649.6" x2="1274.2" y2="674.1" stroke-opacity="0.067" stroke-width="1"/>
<line x1="1274.2" y1="674.1" x2="1439.7" y2="699.6" stroke-opacity="0.067" stroke-width="1"/>
<line x1="1439.7" y1="699.6" x2="1613.2" y2="726.5" stroke-opacity="0.067" stroke-width="1"/>
<line x1="1613.2" y1="726.5" x2="1795.2" y2="754.6" stroke-opacity="0.067" stroke-width="1"/>
<line x1="1795.2" y1="754.6" x2="1986.4" y2="784.2" stroke-opacity="0.067" stroke-width="1"/>
<line x1="-466.9" y1="428.8" x2="-370.9" y2="444.0" stroke-opacity="0.050" stroke-width="1"/>
<line x1="-370.9" y1="444.0" x2="-271.4" y2="459.9" stroke-opacity="0.052" stroke-width="1"/>
<line x1="-271.4" y1="459.9" x2="-168.1" y2="476.3" stroke-opacity="0.054" stroke-width="1"/>
<line x1="-168.1" y1="476.3" x2="-60.9" y2="493.4" stroke-opacity="0.055" stroke-width="1"/>
<line x1="-60.9" y1="493.4" x2="50.5" y2="511.1" stroke-opacity="0.057" stroke-width="1"/>
<line x1="50.5" y1="511.1" x2="166.3" y2="529.5" stroke-opacity="0.058" stroke-width="1"/>
<line x1="166.3" y1="529.5" x2="286.9" y2="548.7" stroke-opacity="0.060" stroke-width="1"/>
<line x1="286.9" y1="548.7" x2="412.4" y2="568.7" stroke-opacity="0.062" stroke-width="1"/>
<line x1="412.4" y1="568.7" x2="543.2" y2="589.5" stroke-opacity="0.063" stroke-width="1"/>
<line x1="543.2" y1="589.5" x2="679.7" y2="611.2" stroke-opacity="0.065" stroke-width="1"/>
<line x1="679.7" y1="611.2" x2="822.3" y2="633.9" stroke-opacity="0.066" stroke-width="1"/>
<line x1="822.3" y1="633.9" x2="971.3" y2="657.6" stroke-opacity="0.067" stroke-width="1"/>
<line x1="971.3" y1="657.6" x2="1127.1" y2="682.4" stroke-opacity="0.067" stroke-width="1"/>
<line x1="1127.1" y1="682.4" x2="1290.4" y2="708.4" stroke-opacity="0.067" stroke-width="1"/>
<line x1="1290.4" y1="708.4" x2="1461.5" y2="735.6" stroke-opacity="0.067" stroke-width="1"/>
<line x1="1461.5" y1="735.6" x2="1641.2" y2="764.2" stroke-opacity="0.067" stroke-width="1"/>
<line x1="1641.2" y1="764.2" x2="1830.0" y2="794.3" stroke-opacity="0.067" stroke-width="1"/>
<line x1="1830.0" y1="794.3" x2="2028.7" y2="825.9" stroke-opacity="0.067" stroke-width="1"/>
<line x1="-496.0" y1="449.3" x2="-398.2" y2="465.3" stroke-opacity="0.052" stroke-width="1"/>
<line x1="-398.2" y1="465.3" x2="-296.8" y2="481.9" stroke-opacity="0.054" stroke-width="1"/>
<line x1="-296.8" y1="481.9" x2="-191.4" y2="499.2" stroke-opacity="0.056" stroke-width="1"/>
<line x1="-191.4" y1="499.2" x2="-81.9" y2="517.2" stroke-opacity="0.057" stroke-width="1"/>
<line x1="-81.9" y1="517.2" x2="32.0" y2="535.8" stroke-opacity="0.059" stroke-width="1"/>
<line x1="32.0" y1="535.8" x2="150.6" y2="555.3" stroke-opacity="0.061" stroke-width="1"/>
<line x1="150.6" y1="555.3" x2="274.1" y2="575.5" stroke-opacity="0.062" stroke-width="1"/>
<line x1="274.1" y1="575.5" x2="402.9" y2="596.6" stroke-opacity="0.064" stroke-width="1"/>
<line x1="402.9" y1="596.6" x2="537.2" y2="618.6" stroke-opacity="0.065" stroke-width="1"/>
<line x1="537.2" y1="618.6" x2="677.6" y2="641.6" stroke-opacity="0.067" stroke-width="1"/>
<line x1="677.6" y1="641.6" x2="824.3" y2="665.7" stroke-opacity="0.067" stroke-width="1"/>
<line x1="824.3" y1="665.7" x2="977.9" y2="690.9" stroke-opacity="0.067" stroke-width="1"/>
<line x1="977.9" y1="690.9" x2="1138.8" y2="717.2" stroke-opacity="0.067" stroke-width="1"/>
<line x1="1138.8" y1="717.2" x2="1307.6" y2="744.9" stroke-opacity="0.067" stroke-width="1"/>
<line x1="1307.6" y1="744.9" x2="1484.8" y2="773.9" stroke-opacity="0.067" stroke-width="1"/>
<line x1="1484.8" y1="773.9" x2="1671.1" y2="804.5" stroke-opacity="0.067" stroke-width="1"/>
<line x1="1671.1" y1="804.5" x2="1867.3" y2="836.6" stroke-opacity="0.067" stroke-width="1"/>
<line x1="1867.3" y1="836.6" x2="2074.0" y2="870.5" stroke-opacity="0.067" stroke-width="1"/>
<line x1="-526.5" y1="470.8" x2="-426.9" y2="487.7" stroke-opacity="0.055" stroke-width="1"/>
<line x1="-426.9" y1="487.7" x2="-323.4" y2="505.2" stroke-opacity="0.056" stroke-width="1"/>
<line x1="-323.4" y1="505.2" x2="-215.8" y2="523.3" stroke-opacity="0.058" stroke-width="1"/>
<line x1="-215.8" y1="523.3" x2="-103.9" y2="542.2" stroke-opacity="0.059" stroke-width="1"/>
<line x1="-103.9" y1="542.2" x2="12.6" y2="561.9" stroke-opacity="0.061" stroke-width="1"/>
<line x1="12.6" y1="561.9" x2="134.0" y2="582.4" stroke-opacity="0.063" stroke-width="1"/>
<line x1="134.0" y1="582.4" x2="260.6" y2="603.8" stroke-opacity="0.064" stroke-width="1"/>
<line x1="260.6" y1="603.8" x2="392.8" y2="626.2" stroke-opacity="0.066" stroke-width="1"/>
<line x1="392.8" y1="626.2" x2="530.9" y2="649.5" stroke-opacity="0.067" stroke-width="1"/>
<line x1="530.9" y1="649.5" x2="675.3" y2="673.9" stroke-opacity="0.067" stroke-width="1"/>
<line x1="675.3" y1="673.9" x2="826.5" y2="699.5" stroke-opacity="0.067" stroke-width="1"/>
<line x1="826.5" y1="699.5" x2="985.0" y2="726.2" stroke-opacity="0.067" stroke-width="1"/>
<line x1="985.0" y1="726.2" x2="1151.3" y2="754.3" stroke-opacity="0.067" stroke-width="1"/>
<line x1="1151.3" y1="754.3" x2="1325.9" y2="783.8" stroke-opacity="0.067" stroke-width="1"/>
<line x1="1325.9" y1="783.8" x2="1509.6" y2="814.9" stroke-opacity="0.067" stroke-width="1"/>
<line x1="1509.6" y1="814.9" x2="1703.1" y2="847.6" stroke-opacity="0.067" stroke-width="1"/>
<line x1="1703.1" y1="847.6" x2="1907.1" y2="882.0" stroke-opacity="0.067" stroke-width="1"/>
<line x1="1907.1" y1="882.0" x2="2122.6" y2="918.4" stroke-opacity="0.067" stroke-width="1"/>
<line x1="-592.3" y1="517.2" x2="-488.8" y2="535.9" stroke-opacity="0.059" stroke-width="1"/>
<line x1="-488.8" y1="535.9" x2="-381.0" y2="555.3" stroke-opacity="0.060" stroke-width="1"/>
<line x1="-381.0" y1="555.3" x2="-268.8" y2="575.5" stroke-opacity="0.062" stroke-width="1"/>
<line x1="-268.8" y1="575.5" x2="-151.7" y2="596.6" stroke-opacity="0.064" stroke-width="1"/>
<line x1="-151.7" y1="596.6" x2="-29.6" y2="618.6" stroke-opacity="0.065" stroke-width="1"/>
<line x1="-29.6" y1="618.6" x2="98.0" y2="641.5" stroke-opacity="0.067" stroke-width="1"/>
<line x1="98.0" y1="641.5" x2="231.3" y2="665.6" stroke-opacity="0.067" stroke-width="1"/>
<line x1="231.3" y1="665.6" x2="370.8" y2="690.7" stroke-opacity="0.067" stroke-width="1"/>
<line x1="370.8" y1="690.7" x2="517.0" y2="717.0" stroke-opacity="0.067" stroke-width="1"/>
<line x1="517.0" y1="717.0" x2="670.4" y2="744.6" stroke-opacity="0.067" stroke-width="1"/>
<line x1="670.4" y1="744.6" x2="831.4" y2="773.6" stroke-opacity="0.067" stroke-width="1"/>
<line x1="831.4" y1="773.6" x2="1000.6" y2="804.1" stroke-opacity="0.067" stroke-width="1"/>
<line x1="1000.6" y1="804.1" x2="1178.8" y2="836.2" stroke-opacity="0.067" stroke-width="1"/>
<line x1="1178.8" y1="836.2" x2="1366.5" y2="870.0" stroke-opacity="0.067" stroke-width="1"/>
<line x1="1366.5" y1="870.0" x2="1564.8" y2="905.7" stroke-opacity="0.067" stroke-width="1"/>
<line x1="1564.8" y1="905.7" x2="1774.3" y2="943.4" stroke-opacity="0.067" stroke-width="1"/>
<line x1="1774.3" y1="943.4" x2="1996.2" y2="983.4" stroke-opacity="0.067" stroke-width="1"/>
<line x1="1996.2" y1="983.4" x2="2231.5" y2="1025.7" stroke-opacity="0.067" stroke-width="1"/>
<line x1="-627.8" y1="542.3" x2="-522.2" y2="561.9" stroke-opacity="0.061" stroke-width="1"/>
<line x1="-522.2" y1="561.9" x2="-412.2" y2="582.4" stroke-opacity="0.063" stroke-width="1"/>
<line x1="-412.2" y1="582.4" x2="-297.5" y2="603.8" stroke-opacity="0.064" stroke-width="1"/>
<line x1="-297.5" y1="603.8" x2="-177.7" y2="626.1" stroke-opacity="0.066" stroke-width="1"/>
<line x1="-177.7" y1="626.1" x2="-52.6" y2="649.4" stroke-opacity="0.067" stroke-width="1"/>
<line x1="-52.6" y1="649.4" x2="78.3" y2="673.8" stroke-opacity="0.067" stroke-width="1"/>
<line x1="78.3" y1="673.8" x2="215.3" y2="699.3" stroke-opacity="0.067" stroke-width="1"/>
<line x1="215.3" y1="699.3" x2="358.8" y2="726.0" stroke-opacity="0.067" stroke-width="1"/>
<line x1="358.8" y1="726.0" x2="509.4" y2="754.0" stroke-opacity="0.067" stroke-width="1"/>
<line x1="509.4" y1="754.0" x2="667.6" y2="783.5" stroke-opacity="0.067" stroke-width="1"/>
<line x1="667.6" y1="783.5" x2="834.0" y2="814.5" stroke-opacity="0.067" stroke-width="1"/>
<line x1="834.0" y1="814.5" x2="1009.2" y2="847.1" stroke-opacity="0.067" stroke-width="1"/>
<line x1="1009.2" y1="847.1" x2="1194.0" y2="881.5" stroke-opacity="0.067" stroke-width="1"/>
<line x1="1194.0" y1="881.5" x2="1389.1" y2="917.8" stroke-opacity="0.067" stroke-width="1"/>
<line x1="1389.1" y1="917.8" x2="1595.4" y2="956.2" stroke-opacity="0.067" stroke-width="1"/>
<line x1="1595.4" y1="956.2" x2="1814.0" y2="996.9" stroke-opacity="0.067" stroke-width="1"/>
<line x1="1814.0" y1="996.9" x2="2046.0" y2="1040.1" stroke-opacity="0.067" stroke-width="1"/>
<line x1="2046.0" y1="1040.1" x2="2292.6" y2="1086.0" stroke-opacity="0.067" stroke-width="1"/>
<line x1="-665.2" y1="568.7" x2="-557.5" y2="589.4" stroke-opacity="0.063" stroke-width="1"/>
<line x1="-557.5" y1="589.4" x2="-445.1" y2="611.1" stroke-opacity="0.065" stroke-width="1"/>
<line x1="-445.1" y1="611.1" x2="-327.8" y2="633.7" stroke-opacity="0.066" stroke-width="1"/>
<line x1="-327.8" y1="633.7" x2="-205.2" y2="657.4" stroke-opacity="0.067" stroke-width="1"/>
<line x1="-205.2" y1="657.4" x2="-76.9" y2="682.1" stroke-opacity="0.067" stroke-width="1"/>
<line x1="-76.9" y1="682.1" x2="57.4" y2="708.0" stroke-opacity="0.067" stroke-width="1"/>
<line x1="57.4" y1="708.0" x2="198.2" y2="735.1" stroke-opacity="0.067" stroke-width="1"/>
<line x1="198.2" y1="735.1" x2="346.0" y2="763.6" stroke-opacity="0.067" stroke-width="1"/>
<line x1="346.0" y1="763.6" x2="501.3" y2="793.5" stroke-opacity="0.067" stroke-width="1"/>
<line x1="501.3" y1="793.5" x2="664.7" y2="825.0" stroke-opacity="0.067" stroke-width="1"/>
<line x1="664.7" y1="825.0" x2="836.9" y2="858.2" stroke-opacity="0.067" stroke-width="1"/>
<line x1="836.9" y1="858.2" x2="1018.5" y2="893.2" stroke-opacity="0.067" stroke-width="1"/>
<line x1="1018.5" y1="893.2" x2="1210.3" y2="930.1" stroke-opacity="0.067" stroke-width="1"/>
<line x1="1210.3" y1="930.1" x2="1413.3" y2="969.3" stroke-opacity="0.067" stroke-width="1"/>
<line x1="1413.3" y1="969.3" x2="1628.5" y2="1010.7" stroke-opacity="0.067" stroke-width="1"/>
<line x1="1628.5" y1="1010.7" x2="1857.0" y2="1054.8" stroke-opacity="0.067" stroke-width="1"/>
<line x1="1857.0" y1="1054.8" x2="2100.0" y2="1101.6" stroke-opacity="0.067" stroke-width="1"/>
<line x1="2100.0" y1="1101.6" x2="2359.1" y2="1151.5" stroke-opacity="0.067" stroke-width="1"/>
<line x1="-704.8" y1="596.6" x2="-594.8" y2="618.5" stroke-opacity="0.065" stroke-width="1"/>
<line x1="-594.8" y1="618.5" x2="-480.0" y2="641.4" stroke-opacity="0.067" stroke-width="1"/>
<line x1="-480.0" y1="641.4" x2="-360.0" y2="665.4" stroke-opacity="0.067" stroke-width="1"/>
<line x1="-360.0" y1="665.4" x2="-234.3" y2="690.5" stroke-opacity="0.067" stroke-width="1"/>
<line x1="-234.3" y1="690.5" x2="-102.8" y2="716.8" stroke-opacity="0.067" stroke-width="1"/>
<line x1="-102.8" y1="716.8" x2="35.2" y2="744.3" stroke-opacity="0.067" stroke-width="1"/>
<line x1="35.2" y1="744.3" x2="180.1" y2="773.3" stroke-opacity="0.067" stroke-width="1"/>
<line x1="180.1" y1="773.3" x2="332.4" y2="803.7" stroke-opacity="0.067" stroke-width="1"/>
<line x1="332.4" y1="803.7" x2="492.7" y2="835.7" stroke-opacity="0.067" stroke-width="1"/>
<line x1="492.7" y1="835.7" x2="661.6" y2="869.5" stroke-opacity="0.067" stroke-width="1"/>
<line x1="661.6" y1="869.5" x2="839.9" y2="905.1" stroke-opacity="0.067" stroke-width="1"/>
<line x1="839.9" y1="905.1" x2="1028.4" y2="942.7" stroke-opacity="0.067" stroke-width="1"/>
<line x1="1028.4" y1="942.7" x2="1227.9" y2="982.6" stroke-opacity="0.067" stroke-width="1"/>
<line x1="1227.9" y1="982.6" x2="1439.5" y2="1024.8" stroke-opacity="0.067" stroke-width="1"/>
<line x1="1439.5" y1="1024.8" x2="1664.3" y2="1069.7" stroke-opacity="0.067" stroke-width="1"/>
<line x1="1664.3" y1="1069.7" x2="1903.6" y2="1117.5" stroke-opacity="0.067" stroke-width="1"/>
<line x1="1903.6" y1="1117.5" x2="2158.8" y2="1168.5" stroke-opacity="0.067" stroke-width="1"/>
<line x1="2158.8" y1="1168.5" x2="2431.5" y2="1223.0" stroke-opacity="0.067" stroke-width="1"/>
<line x1="-746.5" y1="626.0" x2="-634.3" y2="649.3" stroke-opacity="0.067" stroke-width="1"/>
<line x1="-634.3" y1="649.3" x2="-516.9" y2="673.6" stroke-opacity="0.067" stroke-width="1"/>
<line x1="-516.9" y1="673.6" x2="-394.1" y2="699.1" stroke-opacity="0.067" stroke-width="1"/>
<line x1="-394.1" y1="699.1" x2="-265.3" y2="725.7" stroke-opacity="0.067" stroke-width="1"/>
<line x1="-265.3" y1="725.7" x2="-130.3" y2="753.7" stroke-opacity="0.067" stroke-width="1"/>
<line x1="-130.3" y1="753.7" x2="11.5" y2="783.1" stroke-opacity="0.067" stroke-width="1"/>
<line x1="11.5" y1="783.1" x2="160.7" y2="814.0" stroke-opacity="0.067" stroke-width="1"/>
<line x1="160.7" y1="814.0" x2="317.8" y2="846.6" stroke-opacity="0.067" stroke-width="1"/>
<line x1="317.8" y1="846.6" x2="483.4" y2="880.9" stroke-opacity="0.067" stroke-width="1"/>
<line x1="483.4" y1="880.9" x2="658.3" y2="917.2" stroke-opacity="0.067" stroke-width="1"/>
<line x1="658.3" y1="917.2" x2="843.2" y2="955.5" stroke-opacity="0.067" stroke-width="1"/>
<line x1="843.2" y1="955.5" x2="1039.1" y2="996.1" stroke-opacity="0.067" stroke-width="1"/>
<line x1="1039.1" y1="996.1" x2="1246.9" y2="1039.2" stroke-opacity="0.067" stroke-width="1"/>
<line x1="1246.9" y1="1039.2" x2="1467.9" y2="1085.0" stroke-opacity="0.067" stroke-width="1"/>
<line x1="1467.9" y1="1085.0" x2="1703.2" y2="1133.7" stroke-opacity="0.067" stroke-width="1"/>
<line x1="1703.2" y1="1133.7" x2="1954.3" y2="1185.8" stroke-opacity="0.067" stroke-width="1"/>
<line x1="1954.3" y1="1185.8" x2="2222.9" y2="1241.4" stroke-opacity="0.067" stroke-width="1"/>
<line x1="2222.9" y1="1241.4" x2="2510.8" y2="1301.1" stroke-opacity="0.067" stroke-width="1"/>
<line x1="-790.8" y1="657.2" x2="-676.2" y2="681.9" stroke-opacity="0.067" stroke-width="1"/>
<line x1="-676.2" y1="681.9" x2="-556.2" y2="707.8" stroke-opacity="0.067" stroke-width="1"/>
<line x1="-556.2" y1="707.8" x2="-430.4" y2="734.8" stroke-opacity="0.067" stroke-width="1"/>
<line x1="-430.4" y1="734.8" x2="-298.4" y2="763.3" stroke-opacity="0.067" stroke-width="1"/>
<line x1="-298.4" y1="763.3" x2="-159.7" y2="793.1" stroke-opacity="0.067" stroke-width="1"/>
<line x1="-159.7" y1="793.1" x2="-13.7" y2="824.6" stroke-opacity="0.067" stroke-width="1"/>
<line x1="-13.7" y1="824.6" x2="140.0" y2="857.7" stroke-opacity="0.067" stroke-width="1"/>
<line x1="140.0" y1="857.7" x2="302.1" y2="892.6" stroke-opacity="0.067" stroke-width="1"/>
<line x1="302.1" y1="892.6" x2="473.4" y2="929.5" stroke-opacity="0.067" stroke-width="1"/>
<line x1="473.4" y1="929.5" x2="654.7" y2="968.5" stroke-opacity="0.067" stroke-width="1"/>
<line x1="654.7" y1="968.5" x2="846.7" y2="1009.9" stroke-opacity="0.067" stroke-width="1"/>
<line x1="846.7" y1="1009.9" x2="1050.6" y2="1053.8" stroke-opacity="0.067" stroke-width="1"/>
<line x1="1050.6" y1="1053.8" x2="1267.5" y2="1100.5" stroke-opacity="0.067" stroke-width="1"/>
<line x1="1267.5" y1="1100.5" x2="1498.7" y2="1150.3" stroke-opacity="0.067" stroke-width="1"/>
<line x1="1498.7" y1="1150.3" x2="1745.5" y2="1203.4" stroke-opacity="0.067" stroke-width="1"/>
<line x1="1745.5" y1="1203.4" x2="2009.7" y2="1260.3" stroke-opacity="0.067" stroke-width="1"/>
<line x1="2009.7" y1="1260.3" x2="2293.1" y2="1321.4" stroke-opacity="0.067" stroke-width="1"/>
<line x1="2293.1" y1="1321.4" x2="2598.0" y2="1387.0" stroke-opacity="0.067" stroke-width="1"/>
<line x1="-837.7" y1="690.3" x2="-720.6" y2="716.6" stroke-opacity="0.067" stroke-width="1"/>
<line x1="-720.6" y1="716.6" x2="-597.9" y2="744.1" stroke-opacity="0.067" stroke-width="1"/>
<line x1="-597.9" y1="744.1" x2="-469.0" y2="773.0" stroke-opacity="0.067" stroke-width="1"/>
<line x1="-469.0" y1="773.0" x2="-333.6" y2="803.3" stroke-opacity="0.067" stroke-width="1"/>
<line x1="-333.6" y1="803.3" x2="-191.0" y2="835.3" stroke-opacity="0.067" stroke-width="1"/>
<line x1="-191.0" y1="835.3" x2="-40.8" y2="868.9" stroke-opacity="0.067" stroke-width="1"/>
<line x1="-40.8" y1="868.9" x2="117.7" y2="904.5" stroke-opacity="0.067" stroke-width="1"/>
<line x1="117.7" y1="904.5" x2="285.3" y2="942.0" stroke-opacity="0.067" stroke-width="1"/>
<line x1="285.3" y1="942.0" x2="462.7" y2="981.8" stroke-opacity="0.067" stroke-width="1"/>
<line x1="462.7" y1="981.8" x2="650.8" y2="1023.9" stroke-opacity="0.067" stroke-width="1"/>
<line x1="650.8" y1="1023.9" x2="850.6" y2="1068.7" stroke-opacity="0.067" stroke-width="1"/>
<line x1="850.6" y1="1068.7" x2="1063.2" y2="1116.4" stroke-opacity="0.067" stroke-width="1"/>
<line x1="1063.2" y1="1116.4" x2="1289.9" y2="1167.2" stroke-opacity="0.067" stroke-width="1"/>
<line x1="1289.9" y1="1167.2" x2="1532.2" y2="1221.5" stroke-opacity="0.067" stroke-width="1"/>
<line x1="1532.2" y1="1221.5" x2="1791.7" y2="1279.6" stroke-opacity="0.067" stroke-width="1"/>
<line x1="1791.7" y1="1279.6" x2="2070.4" y2="1342.1" stroke-opacity="0.067" stroke-width="1"/>
<line x1="2070.4" y1="1342.1" x2="2370.4" y2="1409.3" stroke-opacity="0.067" stroke-width="1"/>
<line x1="2370.4" y1="1409.3" x2="2694.2" y2="1481.9" stroke-opacity="0.067" stroke-width="1"/>
<line x1="-887.5" y1="725.5" x2="-768.0" y2="753.4" stroke-opacity="0.067" stroke-width="1"/>
<line x1="-768.0" y1="753.4" x2="-642.4" y2="782.8" stroke-opacity="0.067" stroke-width="1"/>
<line x1="-642.4" y1="782.8" x2="-510.3" y2="813.6" stroke-opacity="0.067" stroke-width="1"/>
<line x1="-510.3" y1="813.6" x2="-371.2" y2="846.1" stroke-opacity="0.067" stroke-width="1"/>
<line x1="-371.2" y1="846.1" x2="-224.6" y2="880.4" stroke-opacity="0.067" stroke-width="1"/>
<line x1="-224.6" y1="880.4" x2="-69.9" y2="916.5" stroke-opacity="0.067" stroke-width="1"/>
<line x1="-69.9" y1="916.5" x2="93.8" y2="954.8" stroke-opacity="0.067" stroke-width="1"/>
<line x1="93.8" y1="954.8" x2="267.2" y2="995.3" stroke-opacity="0.067" stroke-width="1"/>
<line x1="267.2" y1="995.3" x2="451.1" y2="1038.2" stroke-opacity="0.067" stroke-width="1"/>
<line x1="451.1" y1="1038.2" x2="646.6" y2="1083.9" stroke-opacity="0.067" stroke-width="1"/>
<line x1="646.6" y1="1083.9" x2="854.7" y2="1132.5" stroke-opacity="0.067" stroke-width="1"/>
<line x1="854.7" y1="1132.5" x2="1076.8" y2="1184.4" stroke-opacity="0.067" stroke-width="1"/>
<line x1="1076.8" y1="1184.4" x2="1314.3" y2="1239.9" stroke-opacity="0.067" stroke-width="1"/>
<line x1="1314.3" y1="1239.9" x2="1568.9" y2="1299.4" stroke-opacity="0.067" stroke-width="1"/>
<line x1="1568.9" y1="1299.4" x2="1842.5" y2="1363.3" stroke-opacity="0.067" stroke-width="1"/>
<line x1="1842.5" y1="1363.3" x2="2137.3" y2="1432.2" stroke-opacity="0.067" stroke-width="1"/>
<line x1="2137.3" y1="1432.2" x2="2455.8" y2="1506.6" stroke-opacity="0.067" stroke-width="1"/>
<line x1="2455.8" y1="1506.6" x2="2801.0" y2="1587.2" stroke-opacity="0.067" stroke-width="1"/>
<line x1="-940.6" y1="763.0" x2="-818.4" y2="792.8" stroke-opacity="0.067" stroke-width="1"/>
<line x1="-818.4" y1="792.8" x2="-689.9" y2="824.1" stroke-opacity="0.067" stroke-width="1"/>
<line x1="-689.9" y1="824.1" x2="-554.4" y2="857.2" stroke-opacity="0.067" stroke-width="1"/>
<line x1="-554.4" y1="857.2" x2="-411.6" y2="892.0" stroke-opacity="0.067" stroke-width="1"/>
<line x1="-411.6" y1="892.0" x2="-260.7" y2="928.8" stroke-opacity="0.067" stroke-width="1"/>
<line x1="-260.7" y1="928.8" x2="-101.1" y2="967.8" stroke-opacity="0.067" stroke-width="1"/>
<line x1="-101.1" y1="967.8" x2="68.0" y2="1009.0" stroke-opacity="0.067" stroke-width="1"/>
<line x1="68.0" y1="1009.0" x2="247.6" y2="1052.8" stroke-opacity="0.067" stroke-width="1"/>
<line x1="247.6" y1="1052.8" x2="438.5" y2="1099.4" stroke-opacity="0.067" stroke-width="1"/>
<line x1="438.5" y1="1099.4" x2="642.0" y2="1149.0" stroke-opacity="0.067" stroke-width="1"/>
<line x1="642.0" y1="1149.0" x2="859.2" y2="1202.0" stroke-opacity="0.067" stroke-width="1"/>
<line x1="859.2" y1="1202.0" x2="1091.7" y2="1258.7" stroke-opacity="0.067" stroke-width="1"/>
<line x1="1091.7" y1="1258.7" x2="1341.1" y2="1319.6" stroke-opacity="0.067" stroke-width="1"/>
<line x1="1341.1" y1="1319.6" x2="1609.3" y2="1385.0" stroke-opacity="0.067" stroke-width="1"/>
<line x1="1609.3" y1="1385.0" x2="1898.5" y2="1455.5" stroke-opacity="0.067" stroke-width="1"/>
<line x1="1898.5" y1="1455.5" x2="2211.3" y2="1531.9" stroke-opacity="0.067" stroke-width="1"/>
<line x1="2211.3" y1="1531.9" x2="2550.7" y2="1614.7" stroke-opacity="0.067" stroke-width="1"/>
<line x1="2550.7" y1="1614.7" x2="2920.3" y2="1704.8" stroke-opacity="0.067" stroke-width="1"/>
<line x1="-1057.8" y1="845.6" x2="-930.1" y2="879.8" stroke-opacity="0.067" stroke-width="1"/>
<line x1="-930.1" y1="879.8" x2="-795.3" y2="915.9" stroke-opacity="0.067" stroke-width="1"/>
<line x1="-795.3" y1="915.9" x2="-652.7" y2="954.0" stroke-opacity="0.067" stroke-width="1"/>
<line x1="-652.7" y1="954.0" x2="-501.7" y2="994.4" stroke-opacity="0.067" stroke-width="1"/>
<line x1="-501.7" y1="994.4" x2="-341.6" y2="1037.3" stroke-opacity="0.067" stroke-width="1"/>
<line x1="-341.6" y1="1037.3" x2="-171.3" y2="1082.8" stroke-opacity="0.067" stroke-width="1"/>
<line x1="-171.3" y1="1082.8" x2="9.9" y2="1131.3" stroke-opacity="0.067" stroke-width="1"/>
<line x1="9.9" y1="1131.3" x2="203.2" y2="1183.1" stroke-opacity="0.067" stroke-width="1"/>
<line x1="203.2" y1="1183.1" x2="410.0" y2="1238.4" stroke-opacity="0.067" stroke-width="1"/>
<line x1="410.0" y1="1238.4" x2="631.5" y2="1297.7" stroke-opacity="0.067" stroke-width="1"/>
<line x1="631.5" y1="1297.7" x2="869.6" y2="1361.3" stroke-opacity="0.067" stroke-width="1"/>
<line x1="869.6" y1="1361.3" x2="1126.0" y2="1430.0" stroke-opacity="0.067" stroke-width="1"/>
<line x1="1126.0" y1="1430.0" x2="1403.1" y2="1504.1" stroke-opacity="0.067" stroke-width="1"/>
<line x1="1403.1" y1="1504.1" x2="1703.3" y2="1584.4" stroke-opacity="0.067" stroke-width="1"/>
<line x1="1703.3" y1="1584.4" x2="2029.7" y2="1671.8" stroke-opacity="0.067" stroke-width="1"/>
<line x1="2029.7" y1="1671.8" x2="2386.0" y2="1767.1" stroke-opacity="0.067" stroke-width="1"/>
<line x1="2386.0" y1="1767.1" x2="2776.4" y2="1871.5" stroke-opacity="0.067" stroke-width="1"/>
<line x1="2776.4" y1="1871.5" x2="3206.0" y2="1986.5" stroke-opacity="0.067" stroke-width="1"/>
  </svg>
  <svg style="left:0;top:0" width="811" height="581" viewBox="202 113 811 581"><defs><linearGradient id="gw" x1="0" x2="0" y1="0" y2="1"><stop offset="0" stop-color="#ffffff"/><stop offset="0.6" stop-color="#f0f0f0"/><stop offset="1" stop-color="#b8b8b8"/></linearGradient><linearGradient id="gb" x1="0" x2="1"><stop offset="0" stop-color="#9a9ca2"/><stop offset="0.5" stop-color="#c9ccd2"/><stop offset="1" stop-color="#8e9096"/></linearGradient></defs><text x="957" y="132.500" font-size="11.500" font-family="Liberation Sans, sans-serif" stroke="#fff" stroke-width="0.350" fill="#fff">y</text><text x="963.600" y="136.600" font-size="9.500" font-family="Liberation Sans, sans-serif" stroke="#fff" stroke-width="0.350" fill="#fff">z</text><path d="M960.200 172.300H961.600L965 193.600Q957 195.400 950 191.300Z" fill="url(#gb)"/><ellipse cx="964.200" cy="175.600" rx="2.600" ry="3.100" fill="#d4d4d4"/><path d="M953.600 162.200L934.800 155Q931.500 160.500 935.800 166.300Z" fill="url(#gw)"/><path d="M955 156.500L958.500 154L962.300 157.500L966 154L970 156.500L969.500 166H954.500Z" fill="#f3f3f3"/><path d="M954.500 166H969.500L968 173H955.500Z" fill="#b6b6b6"/><path d="M971 165.300L991 160.600Q994 166.500 990.500 174Z" fill="#ea431d"/><path d="M976 164L991 160.600Q989.500 160.300 988 160.600Z" fill="#a83a20"/><path d="M954.500 147L962.300 158.800L970 147Z" fill="#3b6b1d"/><ellipse cx="962.500" cy="143.500" rx="9.600" ry="6.500" fill="#a6f058"/><path d="M994.200 131V129a2.600 2.600 0 0 1 5.200 0" fill="none" stroke="#c0bcb8" stroke-width="1.200"/><rect x="993" y="130.600" width="7.200" height="4.600" fill="#c0bcb8"/><path d="M948 209.200L938.500 213.300L948 217.400M938.500 213.300H948" fill="none" stroke="#cfcfcf" stroke-width="1.100"/><text x="992.800" y="172" font-size="12" font-family="Liberation Sans, sans-serif" stroke="#fff" stroke-width="0.350" fill="#fff">x</text></svg>
  <span class="t" style="left:749px;top:92px;color:#cfcfcf">Persp</span>
</div>

<!-- ===== GAME ===== -->
<div class="strip" style="left:1015px;top:73px;width:487px;border-radius:3px 3px 0 0">
  <div class="tab" style="left:0;width:74px"><svg style="left:7px;top:6px" width="14" height="8" viewBox="0 0 14 8" ><path d="M3.600 0.500H10.400A3.600 3.600 0 0 1 10.400 7.500Q7 6 3.600 7.500A3.600 3.600 0 0 1 3.600 0.500Z" fill="#c4c4c4"/><path d="M3.800 2.200V5.600M2.100 3.900H5.500" stroke="#3c3c3c" stroke-width="1.100"/><circle cx="9.300" cy="3.900" r="0.800" fill="#3c3c3c"/><circle cx="11.400" cy="3.900" r="0.800" fill="#3c3c3c"/></svg><span class="t" style="left:24px;top:3px">Game</span></div>
  <svg style="left:85px;top:5px" width="12" height="10" viewBox="0 0 12 10" ><path d="M0.500 5H10M0.800 0.800L4.500 5L0.800 9.200" fill="none" stroke="#c4c4c4" stroke-width="1.400"/><path d="M8.500 2.600L12 5L8.500 7.400Z" fill="#c4c4c4"/></svg><span class="t" style="left:99px;top:3px">Animator</span>
  <svg style="left:473px;top:5px" width="3" height="10" viewBox="0 0 3 10" ><rect x="0.5" y="0" width="2" height="2" fill="#c4c4c4"/><rect x="0.5" y="3.6" width="2" height="2" fill="#c4c4c4"/><rect x="0.5" y="7.2" width="2" height="2" fill="#c4c4c4"/></svg>
</div>
<div class="bar" style="left:1015px;top:92px;width:487px;overflow:hidden">
  <span class="t" style="left:4px;top:3px">Display 1</span><svg style="left:68px;top:8px" width="7" height="4" viewBox="0 0 7 4" ><path d="M0 0H7L3.5 4.2Z" fill="#c4c4c4"/></svg><div class="sep" style="left:80px"></div>
  <span class="t" style="left:84px;top:3px">Standalone (1024x768)</span><svg style="left:227px;top:8px" width="7" height="4" viewBox="0 0 7 4" ><path d="M0 0H7L3.5 4.2Z" fill="#c4c4c4"/></svg><div class="sep" style="left:240px"></div>
  <span class="t" style="left:247px;top:3px">Scale</span>
  <div class="a" style="left:290px;top:10px;width:26px;height:1px;background:#6a6a6a"></div>
  <div class="a" style="left:285px;top:5px;width:10px;height:10px;border-radius:5px;background:#9a9a9a"></div>
  <span class="t" style="left:321px;top:3px;width:36px;overflow:hidden">0.476x</span><div class="sep" style="left:362px"></div>
  <span class="t" style="left:366px;top:3px">Maximize On Play</span><div class="sep" style="left:473px"></div>
  <div class="hl" style="left:474px;width:13px"><span class="t" style="left:4px;top:3px">M</span></div>
</div>
<div class="a" style="left:1015px;top:113px;width:487px;height:581px;background:#282828">
  <svg style="left:0;top:108px" width="487" height="365" viewBox="0 0 487 365"><defs><linearGradient id="sky" x1="0" y1="0" x2="0" y2="1"><stop offset="0" stop-color="#56709a"/><stop offset="0.10" stop-color="#5c759f"/><stop offset="0.22" stop-color="#6a86b0"/><stop offset="0.34" stop-color="#86a4d0"/><stop offset="0.40" stop-color="#a2c0e8"/><stop offset="0.44" stop-color="#bcdcf8"/><stop offset="0.47" stop-color="#dcfcfc"/><stop offset="0.495" stop-color="#f2fffc"/><stop offset="0.52" stop-color="#e4fcf6"/><stop offset="0.56" stop-color="#dcf6f0"/><stop offset="1" stop-color="#dcf6f0"/></linearGradient><linearGradient id="gnd" x1="0" y1="0" x2="0" y2="1"><stop offset="0" stop-color="#6f6865"/><stop offset="0.25" stop-color="#6b645f"/><stop offset="1" stop-color="#6a625c"/></linearGradient><filter id="bl" x="-5%" y="-5%" width="110%" height="110%"><feGaussianBlur stdDeviation="4.200"/></filter><clipPath id="gc"><rect width="487" height="365"/></clipPath></defs><rect width="487" height="365" fill="url(#sky)"/><g clip-path="url(#gc)"><path d="M-20 201Q243.500 189 507 201V385H-20Z" fill="url(#gnd)" filter="url(#bl)"/></g></svg>
</div>

<!-- ===== INSPECTOR ===== -->
<div class="strip" style="left:1504px;top:73px;width:416px;border-radius:3px 0 0 0">
  <div class="tab" style="left:0;width:93px"><svg style="left:9px;top:4px" width="10" height="10" viewBox="0 0 10 10" ><circle cx="5" cy="5" r="5" fill="#c4c4c4"/><rect x="4.200" y="4.200" width="1.600" height="3.800" fill="#3c3c3c"/><rect x="4.200" y="1.900" width="1.600" height="1.500" fill="#3c3c3c"/></svg><span class="t" style="left:24px;top:3px">Inspector</span></div>
  <svg style="left:101px;top:3px" width="15" height="14" viewBox="0 0 15 14" ><circle cx="5.500" cy="7.500" r="5" fill="#c4c4c4"/><rect x="4" y="0" width="3" height="1.600" fill="#c4c4c4"/><path d="M5.500 4.500V7.500H7.500" stroke="#282828" stroke-width="1.200" fill="none"/><circle cx="10.800" cy="10" r="2.200" fill="#282828" stroke="#c4c4c4" stroke-width="1.100"/><path d="M12.400 11.600L14.200 13.400" stroke="#c4c4c4" stroke-width="1.300"/></svg><span class="t" style="left:118px;top:3px">Profiler</span>
  <svg style="left:184px;top:5px" width="11" height="10" viewBox="0 0 11 10" ><path d="M1 9L10 1M1 1L10 9" stroke="#c4c4c4" stroke-width="1.200"/><path d="M0 0H4L0 4ZM11 0V4L7 0ZM0 10V6L4 10ZM11 10H7L11 6Z" fill="#c4c4c4"/></svg><span class="t" style="left:200px;top:3px">Navigation</span>
  <svg style="left:382px;top:4.5px" width="9" height="10" viewBox="0 0 9 10" ><path d="M1.9 4.6V2.7a2 2 0 0 1 4 0" fill="none" stroke="#c4c4c4" stroke-width="1.1"/><rect x="0.6" y="4.8" width="6.8" height="4" rx="0.8" fill="none" stroke="#c4c4c4" stroke-width="1.1"/></svg><svg style="left:401px;top:5px" width="3" height="10" viewBox="0 0 3 10" ><rect x="0.5" y="0" width="2" height="2" fill="#c4c4c4"/><rect x="0.5" y="3.6" width="2" height="2" fill="#c4c4c4"/><rect x="0.5" y="7.2" width="2" height="2" fill="#c4c4c4"/></svg>
</div>
<div class="pane" style="left:1504px;top:92px;width:416px;height:926px"></div>

<!-- ===== PROJECT ===== -->
<div class="strip" style="left:0;top:696px;width:901px">
  <div class="tab" style="left:0;width:80px;border-radius:0 3px 0 0;border-top:2px solid #3a7fc8"><svg style="left:6.5px;top:3.5px" width="12" height="10" viewBox="0 0 12 10" ><path d="M0 1a1 1 0 0 1 1-1H4.400L5.800 1.700H11a1 1 0 0 1 1 1V8.600a1 1 0 0 1-1 1H1a1 1 0 0 1-1-1Z" fill="#c4c4c4"/></svg><span class="t" style="left:23px;top:1px;letter-spacing:.42px">Project</span></div>
  <svg style="left:868px;top:3.5px" width="9" height="10" viewBox="0 0 9 10" ><path d="M1.9 4.6V2.7a2 2 0 0 1 4 0" fill="none" stroke="#c4c4c4" stroke-width="1.1"/><rect x="0.6" y="4.8" width="6.8" height="4" rx="0.8" fill="none" stroke="#c4c4c4" stroke-width="1.1"/></svg><svg style="left:887px;top:4px" width="3" height="10" viewBox="0 0 3 10" ><rect x="0.5" y="0" width="2" height="2" fill="#c4c4c4"/><rect x="0.5" y="3.6" width="2" height="2" fill="#c4c4c4"/><rect x="0.5" y="7.2" width="2" height="2" fill="#c4c4c4"/></svg>
</div>
<div class="bar" style="left:0;top:715px;width:901px">
  <svg style="left:7px;top:4px" width="12" height="12" viewBox="0 0 12 12" ><path d="M6 0.5V11.5M0.5 6H11.5" stroke="#c4c4c4" stroke-width="1.6" fill="none"/></svg><svg style="left:24px;top:8px" width="7" height="4" viewBox="0 0 7 4" ><path d="M0 0H7L3.5 4.2Z" fill="#c4c4c4"/></svg>
  <div class="search" style="left:487px;top:2px;width:300px"><svg style="left:5px;top:3px" width="12" height="10" viewBox="0 0 12 10" ><circle cx="3.6" cy="3.8" r="2.4" fill="none" stroke="#b0b0b0" stroke-width="1.3"/><path d="M5.4 5.6L8 8.4" stroke="#b0b0b0" stroke-width="1.4"/></svg></div>
  <div class="sep" style="left:790px"></div><svg style="left:795px;top:3px" width="14" height="14" viewBox="0 0 14 14" ><circle cx="4" cy="9.500" r="3.800" fill="#c4c4c4"/><rect x="1.500" y="0.500" width="5" height="4.500" fill="#c4c4c4"/><path d="M10.200 3L13.800 10.500H6.600Z" fill="#c4c4c4"/></svg><div class="sep" style="left:815px"></div>
  <svg style="left:821px;top:4px" width="13" height="12" viewBox="0 0 13 12" ><path d="M0.500 6.500L6.500 0.500H12.500V6.500L6.500 12Z" fill="#c4c4c4"/><circle cx="10" cy="3" r="1.100" fill="#3c3c3c"/></svg><div class="sep" style="left:841px"></div>
  <svg style="left:847px;top:3px" width="14" height="13" viewBox="0 0 14 13" ><path d="M7 0L8.900 4.600L13.800 5L10.100 8.200L11.200 13L7 10.400L2.800 13L3.900 8.200L0.200 5L5.100 4.600Z" fill="#8c8c8c"/></svg><div class="sep" style="left:867px"></div>
  <div class="hl" style="left:868px;width:32px"><svg style="left:4.5px;top:4px" width="14" height="11" viewBox="0 0 14 11" ><path d="M0.500 5.700C3 1.700 11 1.700 13.500 5.700C11 9.700 3 9.700 0.500 5.700Z" fill="none" stroke="#a8a8a8" stroke-width="1.200"/><path d="M4.400 5.900A2.600 2.600 0 0 1 9.600 5.900Z" fill="#a8a8a8"/><path d="M1.800 10.800L11.800 0.200" stroke="#a8a8a8" stroke-width="1.300"/></svg><span class="t" style="left:20.500px;top:3px">8</span></div><div class="sep" style="left:900px"></div>
</div>
<div class="pane" id="tree" style="left:0;top:736px;width:293px;height:282px;overflow:hidden">
<div class="row" style="top:0px;width:293px;"><svg style="left:18px;top:1.5px" width="13" height="13" viewBox="0 0 13 13" ><path d="M6.500 0L8.300 4.400L13 4.800L9.400 7.900L10.500 12.500L6.500 10L2.500 12.500L3.600 7.900L0 4.800L4.700 4.400Z" fill="#f7b500"/></svg><b class="t" style="left:35px;top:0">Favorites</b></div>
<div class="row" style="top:31px;width:293px;background:#2c5d87;"><svg style="left:3px;top:5px" width="10" height="8" viewBox="0 0 10 8" ><path d="M0 0H10L5 8Z" fill="#6f8aa3"/></svg><svg style="left:18px;top:2px" width="15" height="12" viewBox="0 0 15 12" ><path d="M1 10.6V1.6a.6 .6 0 0 1 .6-.6H5L6.4 2.6H11.6a.6 .6 0 0 1 .6 .6V4.4" fill="none" stroke="#e6e6e6" stroke-width="1.2"/><path d="M3.2 5H14.6L12.4 11.4H0.9Z" fill="#e6e6e6"/></svg><b class="t" style="left:35px;top:0;color:#fff">Assets</b></div>
<div class="row" style="top:47px;width:293px;"><svg style="left:19px;top:3px" width="8" height="10" viewBox="0 0 8 10" ><path d="M0 0V10L8 5Z" fill="#7a7a7a"/></svg><svg style="left:32px;top:2px" width="13" height="12" viewBox="0 0 13 12" ><path d="M0.2 1.800a1 1 0 0 1 1-1H4.600L6 2.600H11.400a1 1 0 0 1 1 1V10a1 1 0 0 1-1 1H1.200a1 1 0 0 1-1-1Z" fill="#c8c8c8"/></svg><span class="t" style="left:48.5px;top:0">NavMeshComponents</span></div>
<div class="row" style="top:63px;width:293px;"><svg style="left:19px;top:3px" width="8" height="10" viewBox="0 0 8 10" ><path d="M0 0V10L8 5Z" fill="#7a7a7a"/></svg><svg style="left:32px;top:2px" width="13" height="12" viewBox="0 0 13 12" ><path d="M0.2 1.800a1 1 0 0 1 1-1H4.600L6 2.600H11.400a1 1 0 0 1 1 1V10a1 1 0 0 1-1 1H1.200a1 1 0 0 1-1-1Z" fill="#c8c8c8"/></svg><span class="t" style="left:48.5px;top:0">Plugins</span></div>
<div class="row" style="top:79px;width:293px;"><svg style="left:32px;top:2px" width="13" height="12" viewBox="0 0 13 12" ><path d="M0.2 1.800a1 1 0 0 1 1-1H4.600L6 2.600H11.400a1 1 0 0 1 1 1V10a1 1 0 0 1-1 1H1.200a1 1 0 0 1-1-1Z" fill="#c8c8c8"/></svg><span class="t" style="left:48.5px;top:0">Resources</span></div>
<div class="row" style="top:95px;width:293px;"><svg style="left:19px;top:3px" width="8" height="10" viewBox="0 0 8 10" ><path d="M0 0V10L8 5Z" fill="#7a7a7a"/></svg><svg style="left:32px;top:2px" width="13" height="12" viewBox="0 0 13 12" ><path d="M0.2 1.800a1 1 0 0 1 1-1H4.600L6 2.600H11.400a1 1 0 0 1 1 1V10a1 1 0 0 1-1 1H1.200a1 1 0 0 1-1-1Z" fill="#c8c8c8"/></svg><span class="t" style="left:48.5px;top:0">Scenes</span></div>
<div class="row" style="top:111px;width:293px;"><svg style="left:19px;top:3px" width="8" height="10" viewBox="0 0 8 10" ><path d="M0 0V10L8 5Z" fill="#7a7a7a"/></svg><svg style="left:32px;top:2px" width="13" height="12" viewBox="0 0 13 12" ><path d="M0.2 1.800a1 1 0 0 1 1-1H4.600L6 2.600H11.400a1 1 0 0 1 1 1V10a1 1 0 0 1-1 1H1.200a1 1 0 0 1-1-1Z" fill="#c8c8c8"/></svg><span class="t" style="left:48.5px;top:0">Scripts</span></div>
<div class="row" style="top:127px;width:293px;"><svg style="left:17px;top:5px" width="10" height="8" viewBox="0 0 10 8" ><path d="M0 0H10L5 8Z" fill="#7a7a7a"/></svg><svg style="left:32px;top:2px" width="15" height="12" viewBox="0 0 15 12" ><path d="M1 10.6V1.6a.6 .6 0 0 1 .6-.6H5L6.4 2.6H11.6a.6 .6 0 0 1 .6 .6V4.4" fill="none" stroke="#c8c8c8" stroke-width="1.2"/><path d="M3.2 5H14.6L12.4 11.4H0.9Z" fill="#c8c8c8"/></svg><span class="t" style="left:48.5px;top:0">SimpleFantasy</span></div>
<div class="row" style="top:143px;width:293px;"><svg style="left:46px;top:2px" width="13" height="12" viewBox="0 0 13 12" ><path d="M0.2 1.800a1 1 0 0 1 1-1H4.600L6 2.600H11.400a1 1 0 0 1 1 1V10a1 1 0 0 1-1 1H1.200a1 1 0 0 1-1-1Z" fill="#c8c8c8"/></svg><span class="t" style="left:62.5px;top:0">_Scenes</span></div>
<div class="row" style="top:159px;width:293px;"><svg style="left:46px;top:2px" width="13" height="12" viewBox="0 0 13 12" ><path d="M0.2 1.800a1 1 0 0 1 1-1H4.600L6 2.600H11.400a1 1 0 0 1 1 1V10a1 1 0 0 1-1 1H1.200a1 1 0 0 1-1-1Z" fill="#c8c8c8"/></svg><span class="t" style="left:62.5px;top:0">Materials</span></div>
<div class="row" style="top:175px;width:293px;"><svg style="left:31px;top:5px" width="10" height="8" viewBox="0 0 10 8" ><path d="M0 0H10L5 8Z" fill="#7a7a7a"/></svg><svg style="left:46px;top:2px" width="15" height="12" viewBox="0 0 15 12" ><path d="M1 10.6V1.6a.6 .6 0 0 1 .6-.6H5L6.4 2.6H11.6a.6 .6 0 0 1 .6 .6V4.4" fill="none" stroke="#c8c8c8" stroke-width="1.2"/><path d="M3.2 5H14.6L12.4 11.4H0.9Z" fill="#c8c8c8"/></svg><span class="t" style="left:62.5px;top:0">Models</span></div>
<div class="row" style="top:191px;width:293px;"><svg style="left:60px;top:2px" width="13" height="12" viewBox="0 0 13 12" ><path d="M0.2 1.800a1 1 0 0 1 1-1H4.600L6 2.600H11.400a1 1 0 0 1 1 1V10a1 1 0 0 1-1 1H1.200a1 1 0 0 1-1-1Z" fill="#c8c8c8"/></svg><span class="t" style="left:76.5px;top:0">Animals</span></div>
<div class="row" style="top:207px;width:293px;"><svg style="left:45px;top:5px" width="10" height="8" viewBox="0 0 10 8" ><path d="M0 0H10L5 8Z" fill="#7a7a7a"/></svg><svg style="left:60px;top:2px" width="15" height="12" viewBox="0 0 15 12" ><path d="M1 10.6V1.6a.6 .6 0 0 1 .6-.6H5L6.4 2.6H11.6a.6 .6 0 0 1 .6 .6V4.4" fill="none" stroke="#c8c8c8" stroke-width="1.2"/><path d="M3.2 5H14.6L12.4 11.4H0.9Z" fill="#c8c8c8"/></svg><span class="t" style="left:76.5px;top:0">Characters</span></div>
<div class="row" style="top:223px;width:293px;"><svg style="left:74px;top:2px" width="13" height="12" viewBox="0 0 13 12" ><path d="M0.2 1.800a1 1 0 0 1 1-1H4.600L6 2.600H11.400a1 1 0 0 1 1 1V10a1 1 0 0 1-1 1H1.200a1 1 0 0 1-1-1Z" fill="#c8c8c8"/></svg><span class="t" style="left:90.5px;top:0">_Animations</span></div>
<div class="row" style="top:239px;width:293px;"><svg style="left:47px;top:3px" width="8" height="10" viewBox="0 0 8 10" ><path d="M0 0V10L8 5Z" fill="#7a7a7a"/></svg><svg style="left:60px;top:2px" width="13" height="12" viewBox="0 0 13 12" ><path d="M0.2 1.800a1 1 0 0 1 1-1H4.600L6 2.600H11.400a1 1 0 0 1 1 1V10a1 1 0 0 1-1 1H1.200a1 1 0 0 1-1-1Z" fill="#c8c8c8"/></svg><span class="t" style="left:76.5px;top:0">Prefabbed</span></div>
<div class="row" style="top:255px;width:293px;"><svg style="left:33px;top:3px" width="8" height="10" viewBox="0 0 8 10" ><path d="M0 0V10L8 5Z" fill="#7a7a7a"/></svg><svg style="left:46px;top:2px" width="13" height="12" viewBox="0 0 13 12" ><path d="M0.2 1.800a1 1 0 0 1 1-1H4.600L6 2.600H11.400a1 1 0 0 1 1 1V10a1 1 0 0 1-1 1H1.200a1 1 0 0 1-1-1Z" fill="#c8c8c8"/></svg><span class="t" style="left:62.5px;top:0">Prefabs</span></div>
<div class="row" style="top:271px;width:293px;"><svg style="left:46px;top:2px" width="13" height="12" viewBox="0 0 13 12" ><path d="M0.2 1.800a1 1 0 0 1 1-1H4.600L6 2.600H11.400a1 1 0 0 1 1 1V10a1 1 0 0 1-1 1H1.200a1 1 0 0 1-1-1Z" fill="#c8c8c8"/></svg><span class="t" style="left:62.5px;top:0">Textures</span></div>
</div>
<div class="pane" style="left:293px;top:736px;width:13px;height:282px">
  <svg style="left:3px;top:5px" width="8" height="5"><path d="M0 5L4 0L8 5Z" fill="#c4c4c4"/></svg>
  <div class="a" style="left:2px;top:16px;width:10px;height:231px;border-radius:5px;background:#5f5f5f"></div>
  <svg style="left:3px;top:272px" width="8" height="5"><path d="M0 0L4 5L8 0Z" fill="#c4c4c4"/></svg>
</div>
<div class="a" style="left:306px;top:736px;width:1px;height:282px;background:#232323"></div>
<div class="pane" style="left:307px;top:736px;width:594px;height:282px;background:#333">
  <div class="a" style="left:0;top:0;width:594px;height:21px;background:#3f3f3f;border-bottom:1px solid #2a2a2a"></div>
  <b class="t" style="left:4px;top:2px">Assets</b>
<svg style="left:23px;top:43px" width="48" height="40" viewBox="0 0 48 40" ><path d="M0 4a4 4 0 0 1 4-4H18.600a2.500 2.500 0 0 1 2.100 1.100L25.200 7.800H44a4 4 0 0 1 4 4V36a4 4 0 0 1-4 4H4a4 4 0 0 1-4-4Z" fill="#c4c4c4"/></svg>
<span class="t" style="left:9px;top:96px;width:76px;text-align:center;font-size:10px;letter-spacing:.15px">NavMesh...</span>
<svg style="left:99px;top:43px" width="48" height="40" viewBox="0 0 48 40" ><path d="M0 4a4 4 0 0 1 4-4H18.600a2.500 2.500 0 0 1 2.100 1.100L25.200 7.800H44a4 4 0 0 1 4 4V36a4 4 0 0 1-4 4H4a4 4 0 0 1-4-4Z" fill="#c4c4c4"/></svg>
<span class="t" style="left:85px;top:96px;width:76px;text-align:center;font-size:10px;letter-spacing:.15px">Plugins</span>
<svg style="left:175px;top:43px" width="48" height="40" viewBox="0 0 48 40" ><path d="M0 4a4 4 0 0 1 4-4H18.600a2.500 2.500 0 0 1 2.100 1.100L25.200 7.800H44a4 4 0 0 1 4 4V36a4 4 0 0 1-4 4H4a4 4 0 0 1-4-4Z" fill="#c4c4c4"/></svg>
<span class="t" style="left:161px;top:96px;width:76px;text-align:center;font-size:10px;letter-spacing:.15px">Resources</span>
<svg style="left:251px;top:43px" width="48" height="40" viewBox="0 0 48 40" ><path d="M0 4a4 4 0 0 1 4-4H18.600a2.500 2.500 0 0 1 2.100 1.100L25.200 7.800H44a4 4 0 0 1 4 4V36a4 4 0 0 1-4 4H4a4 4 0 0 1-4-4Z" fill="#c4c4c4"/></svg>
<span class="t" style="left:237px;top:96px;width:76px;text-align:center;font-size:10px;letter-spacing:.15px">Scenes</span>
<svg style="left:327px;top:43px" width="48" height="40" viewBox="0 0 48 40" ><path d="M0 4a4 4 0 0 1 4-4H18.600a2.500 2.500 0 0 1 2.100 1.100L25.200 7.800H44a4 4 0 0 1 4 4V36a4 4 0 0 1-4 4H4a4 4 0 0 1-4-4Z" fill="#c4c4c4"/></svg>
<span class="t" style="left:313px;top:96px;width:76px;text-align:center;font-size:10px;letter-spacing:.15px">Scripts</span>
<svg style="left:403px;top:43px" width="48" height="40" viewBox="0 0 48 40" ><path d="M0 4a4 4 0 0 1 4-4H18.600a2.500 2.500 0 0 1 2.100 1.100L25.200 7.800H44a4 4 0 0 1 4 4V36a4 4 0 0 1-4 4H4a4 4 0 0 1-4-4Z" fill="#c4c4c4"/></svg>
<span class="t" style="left:389px;top:96px;width:76px;text-align:center;font-size:10px;letter-spacing:.15px">SimpleFan...</span>
  <div class="a" style="left:0;top:262px;width:594px;height:20px;background:#3f3f3f;border-top:1px solid #2a2a2a"></div>
  <div class="a" style="left:523px;top:271px;width:55px;height:1px;background:#6a6a6a"></div>
  <div class="a" style="left:549px;top:266px;width:11px;height:11px;border-radius:6px;background:#a8a8a8"></div>
</div>

<!-- ===== CONSOLE ===== -->
<div class="strip" style="left:903px;top:696px;width:599px">
  <div class="tab" style="left:0;width:87px"><svg style="left:8.7px;top:4.2px" width="10.4" height="10.4" viewBox="0 0 10.4 10.4" ><rect x="0" y="0" width="10.400" height="10.400" rx="1" fill="#c4c4c4"/><path d="M1.800 2.300H8.600M1.800 4.500H8.600M1.800 6.700H8.600M1.800 8.800H5.600" stroke="#3c3c3c" stroke-width="1"/></svg><span class="t" style="left:24px;top:3px">Console</span></div>
  <svg style="left:585px;top:4px" width="3" height="10" viewBox="0 0 3 10" ><rect x="0.5" y="0" width="2" height="2" fill="#c4c4c4"/><rect x="0.5" y="3.6" width="2" height="2" fill="#c4c4c4"/><rect x="0.5" y="7.2" width="2" height="2" fill="#c4c4c4"/></svg>
</div>
<div class="bar" style="left:903px;top:715px;width:599px">
  <span class="t" style="left:5px;top:3px">Clear</span><div class="sep" style="left:40px"></div>
  <div class="hl" style="left:41px;width:58px"><span class="t" style="left:4px;top:3px">Collapse</span></div><div class="sep" style="left:99px"></div>
  <div class="hl" style="left:100px;width:84px"><span class="t" style="left:3px;top:3px">Clear on Play</span></div><div class="sep" style="left:184px"></div>
  <span class="t" style="left:189px;top:3px">Clear on Build</span><div class="sep" style="left:272px"></div>
  <span class="t" style="left:277px;top:3px">Error Pause</span><div class="sep" style="left:345px"></div>
  <span class="t" style="left:350px;top:3px">Editor</span><svg style="left:385px;top:8px" width="7" height="4" viewBox="0 0 7 4" ><path d="M0 0H7L3.5 4.2Z" fill="#c4c4c4"/></svg><div class="sep" style="left:397px"></div>
  <div class="search" style="left:409px;top:2px;width:100px"><svg style="left:5px;top:3px" width="12" height="10" viewBox="0 0 12 10" ><circle cx="3.6" cy="3.8" r="2.4" fill="none" stroke="#b0b0b0" stroke-width="1.3"/><path d="M5.4 5.6L8 8.4" stroke="#b0b0b0" stroke-width="1.4"/></svg></div>
  <div class="sep" style="left:511px"></div>
  <div class="hl" style="left:512px;width:33px"><svg style="left:4px;top:3px" width="14" height="14" viewBox="0 0 14 14" ><path d="M7 0a6.500 6.500 0 0 1 3 12.300L10.500 14L7.500 13A6.500 6.500 0 0 1 7 0Z" fill="#8a8a8a"/><rect x="6.200" y="2.500" width="1.600" height="5.500" fill="#505050"/><rect x="6.200" y="9.200" width="1.600" height="1.600" fill="#505050"/></svg><span class="t" style="left:21px;top:3px">0</span></div><div class="sep" style="left:545px"></div>
  <div class="hl" style="left:546px;width:33px"><svg style="left:4px;top:3px" width="14" height="13" viewBox="0 0 14 13" ><path d="M7 0L14 13H0Z" fill="#8a8a8a"/><rect x="6.200" y="4" width="1.600" height="5" fill="#505050"/><rect x="6.200" y="10" width="1.600" height="1.600" fill="#505050"/></svg><span class="t" style="left:21px;top:3px">0</span></div><div class="sep" style="left:579px"></div>
  <div class="hl" style="left:580px;width:19px"><svg style="left:4px;top:3px" width="14" height="14" viewBox="0 0 14 14" ><path d="M4.100 0H9.900L14 4.100V9.900L9.900 14H4.100L0 9.900V4.100Z" fill="#dcdcdc"/><rect x="6.200" y="2.800" width="1.600" height="5.600" fill="#505050"/><rect x="6.200" y="9.600" width="1.600" height="1.600" fill="#505050"/></svg></div>
</div>
<div class="pane" style="left:903px;top:736px;width:599px;height:282px">
  <div class="a" style="left:0;top:196px;width:599px;height:1px;background:#2a2a2a"></div>
</div>

<!-- ===== STATUS ===== -->
<span class="t" style="left:1739px;top:1022px;color:#c8c8c8">Auto Generate Lighting Off</span>
</div></div>

</body></html>
